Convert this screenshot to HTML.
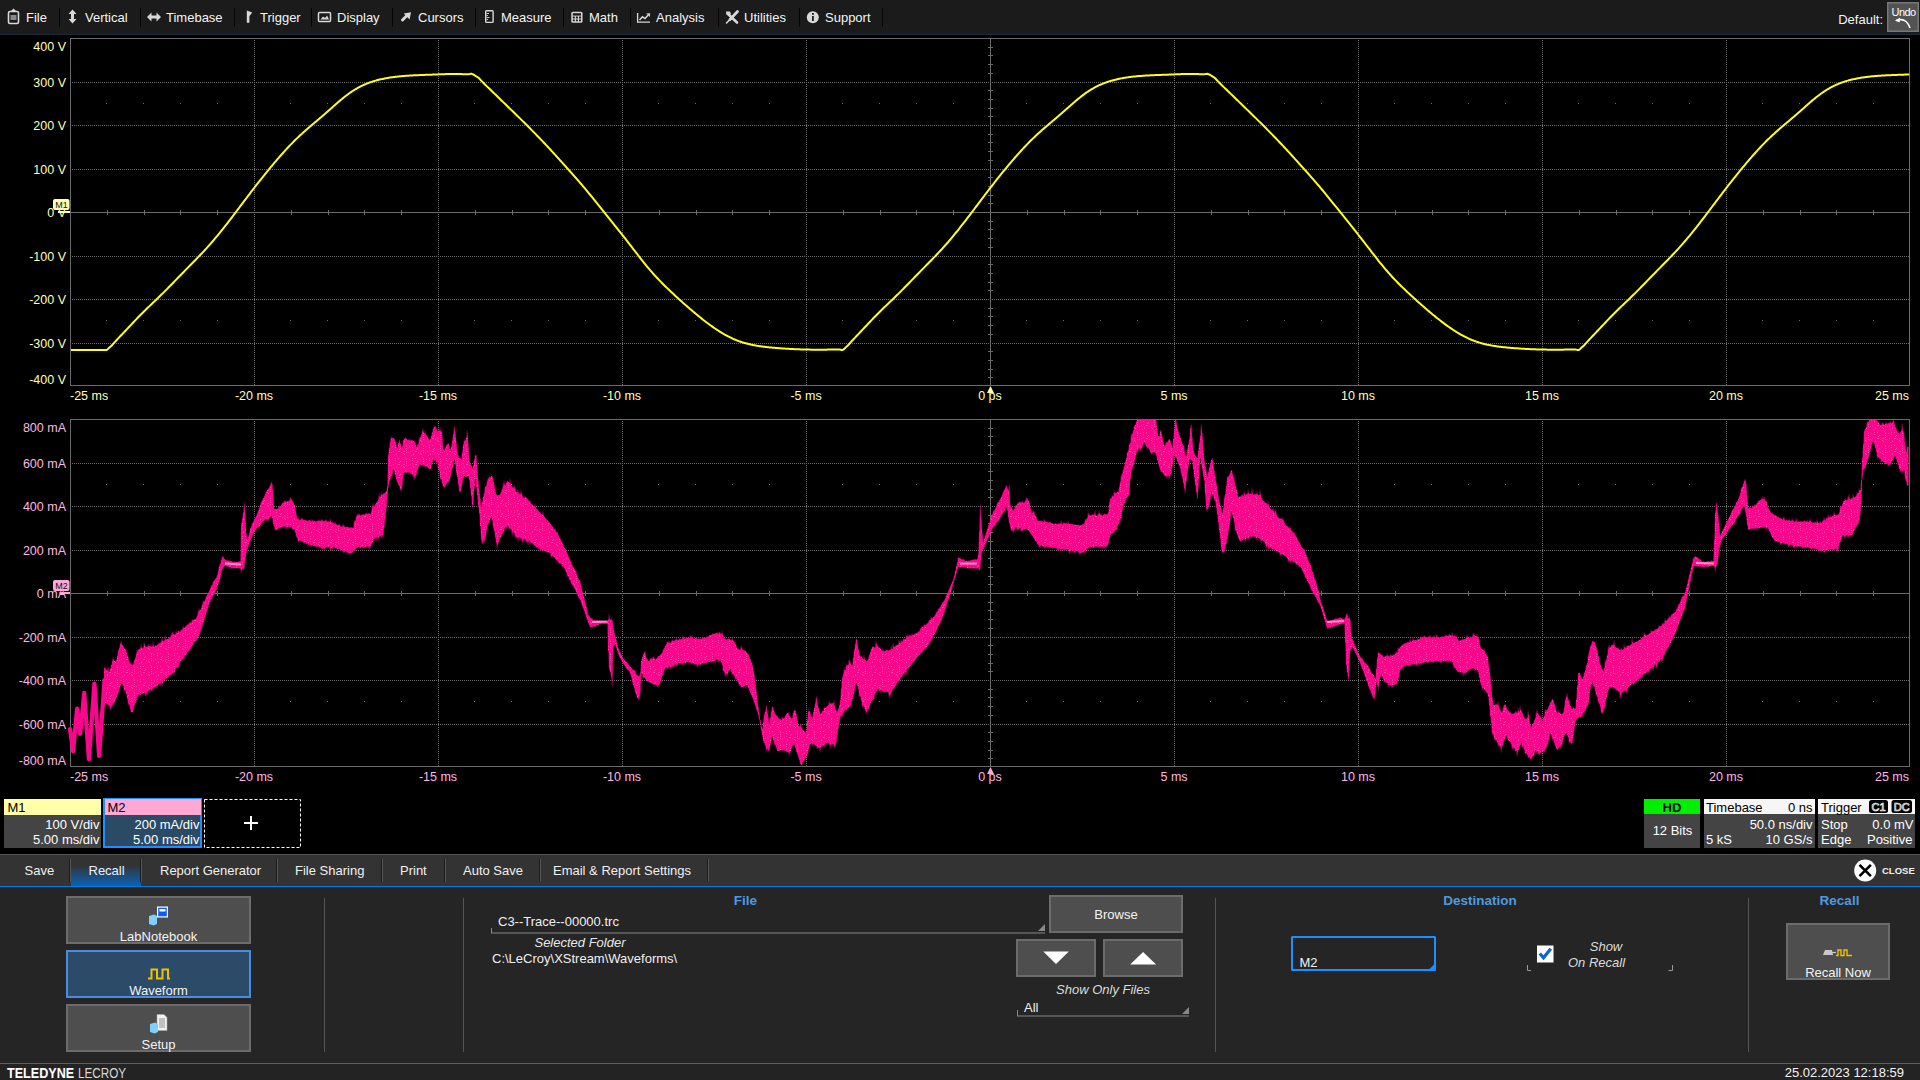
<!DOCTYPE html>
<html><head><meta charset="utf-8">
<style>
*{margin:0;padding:0;box-sizing:border-box}
html,body{width:1920px;height:1080px;overflow:hidden;background:#000;font-family:"Liberation Sans", sans-serif;}
</style></head><body>
<svg width="1920" height="1080" viewBox="0 0 1920 1080" style="position:absolute;left:0;top:0" font-family='"Liberation Sans", sans-serif' font-size="12.5px">
<defs>
<linearGradient id="tabg" x1="0" y1="0" x2="0" y2="1">
<stop offset="0" stop-color="#333"/><stop offset="0.15" stop-color="#2a3d50"/><stop offset="1" stop-color="#0a62b8"/>
</linearGradient>
</defs>
<defs><pattern id="pinkpat" x="0" y="0" width="17" height="13" patternUnits="userSpaceOnUse"><rect width="17" height="13" fill="#f8068b"/><rect x="7" y="9" width="1" height="1" fill="#ff3ca2"/><rect x="4" y="5" width="1" height="1" fill="#ff3ca2"/><rect x="15" y="10" width="1" height="1" fill="#ff3ca2"/><rect x="2" y="9" width="1" height="1" fill="#ff2898"/><rect x="15" y="4" width="1" height="1" fill="#ff3ca2"/><rect x="7" y="3" width="1" height="1" fill="#ff3ca2"/><rect x="15" y="8" width="1" height="1" fill="#ff3ca2"/><rect x="15" y="6" width="1" height="1" fill="#ff3ca2"/><rect x="4" y="3" width="1" height="1" fill="#ff3ca2"/><rect x="4" y="8" width="1" height="1" fill="#ff1f94"/><rect x="0" y="10" width="1" height="1" fill="#ff2898"/><rect x="5" y="12" width="1" height="1" fill="#ff3ca2"/><rect x="1" y="4" width="1" height="1" fill="#ff2898"/><rect x="8" y="7" width="1" height="1" fill="#ff3ca2"/><rect x="12" y="11" width="1" height="1" fill="#ff1f94"/><rect x="12" y="11" width="1" height="1" fill="#ff3ca2"/><rect x="14" y="2" width="1" height="1" fill="#ff1f94"/><rect x="3" y="0" width="1" height="1" fill="#ff2898"/><rect x="15" y="3" width="1" height="1" fill="#ff1f94"/><rect x="13" y="12" width="1" height="1" fill="#ff3ca2"/><rect x="9" y="6" width="1" height="1" fill="#ff3ca2"/><rect x="12" y="9" width="1" height="1" fill="#ff1f94"/><rect x="13" y="9" width="1" height="1" fill="#ff2898"/><rect x="10" y="10" width="1" height="1" fill="#ff2898"/><rect x="8" y="9" width="1" height="1" fill="#ff3ca2"/><rect x="5" y="11" width="1" height="1" fill="#ff1f94"/></pattern></defs>
<rect x="0" y="0" width="1920" height="34" fill="#1b1b1b"/>
<rect x="0" y="34" width="1920" height="1" fill="#1c2a38"/>
<text x="26" y="22" font-size="13" fill="#f4f4f4">File</text>
<text x="85" y="22" font-size="13" fill="#f4f4f4">Vertical</text>
<text x="166" y="22" font-size="13" fill="#f4f4f4">Timebase</text>
<text x="260" y="22" font-size="13" fill="#f4f4f4">Trigger</text>
<text x="337" y="22" font-size="13" fill="#f4f4f4">Display</text>
<text x="418" y="22" font-size="13" fill="#f4f4f4">Cursors</text>
<text x="501" y="22" font-size="13" fill="#f4f4f4">Measure</text>
<text x="589" y="22" font-size="13" fill="#f4f4f4">Math</text>
<text x="656" y="22" font-size="13" fill="#f4f4f4">Analysis</text>
<text x="744" y="22" font-size="13" fill="#f4f4f4">Utilities</text>
<text x="825" y="22" font-size="13" fill="#f4f4f4">Support</text>
<rect x="59" y="8" width="1" height="19" fill="#050505"/>
<rect x="140" y="8" width="1" height="19" fill="#050505"/>
<rect x="234" y="8" width="1" height="19" fill="#050505"/>
<rect x="311" y="8" width="1" height="19" fill="#050505"/>
<rect x="392" y="8" width="1" height="19" fill="#050505"/>
<rect x="475" y="8" width="1" height="19" fill="#050505"/>
<rect x="563" y="8" width="1" height="19" fill="#050505"/>
<rect x="630" y="8" width="1" height="19" fill="#050505"/>
<rect x="718" y="8" width="1" height="19" fill="#050505"/>
<rect x="799" y="8" width="1" height="19" fill="#050505"/>
<rect x="882" y="8" width="1" height="19" fill="#050505"/>
<rect x="8.5" y="11.5" width="10" height="12" rx="1.5" fill="none" stroke="#d8d8d8" stroke-width="1.6"/>
<rect x="10.5" y="15" width="6" height="5" fill="#888"/>
<path d="M11 11 L13.5 8.5 L16 11Z" fill="#d8d8d8"/>
<path d="M72.5 9.5 L76.5 14 L74 14 L74 19 L76.5 19 L72.5 23.5 L68.5 19 L71 19 L71 14 L68.5 14Z" fill="#d8d8d8"/>
<path d="M147 17 L151.5 12.5 L151.5 15.5 L156.5 15.5 L156.5 12.5 L161 17 L156.5 21.5 L156.5 18.5 L151.5 18.5 L151.5 21.5Z" fill="#d8d8d8"/>
<path d="M246.8 10.5 L252.2 12.5 L249.4 16.2 L249.4 22.8 L246.8 22.8Z" fill="#d8d8d8"/>
<rect x="318.5" y="12.5" width="12" height="9" rx="1" fill="none" stroke="#d8d8d8" stroke-width="1.5"/>
<path d="M320.5 19.5 L323 16.5 L325 18 L327 15.5 L329 19.5Z" fill="#d8d8d8"/>
<path d="M402.5 20 L406.5 16" stroke="#d8d8d8" stroke-width="3" stroke-linecap="round"/><path d="M403.8 13.6 L411 12.2 L409.6 19.4Z" fill="#d8d8d8"/>
<rect x="485.7" y="10.8" width="7.4" height="11.6" rx="0.8" fill="none" stroke="#d8d8d8" stroke-width="1.4"/>
<path d="M486.5 13.5h2.5M486.5 15.5h1.5M486.5 17.5h3M486.5 19.5h1.5" stroke="#d8d8d8" stroke-width="0.9"/>
<rect x="571.3" y="11.8" width="11.2" height="11" rx="1.5" fill="#d8d8d8"/>
<rect x="572.8" y="13.2" width="8.2" height="2.4" fill="#1b1b1b"/>
<path d="M572.8 16.6h2v1.8h-2zM575.9 16.6h2v1.8h-2zM579 16.6h2v1.8h-2zM572.8 19.4h2v1.8h-2zM575.9 19.4h2v1.8h-2zM579 19.4h2v1.8h-2z" fill="#1b1b1b"/>
<path d="M637.6 13 V22.2 H650" fill="none" stroke="#d8d8d8" stroke-width="1.3"/>
<path d="M639.5 20 L642.5 16.8 L645 18.5 L648 15.2" fill="none" stroke="#d8d8d8" stroke-width="1.5"/><path d="M646.2 13.6 L650.2 13.2 L649.8 17Z" fill="#d8d8d8"/>
<path d="M728 14 L737 22.5" stroke="#d8d8d8" stroke-width="2.6" stroke-linecap="round"/>
<path d="M726 11.5 L729.8 11.5 L731 13.8 L729 15.6 L726.3 14.5Z" fill="#d8d8d8"/>
<path d="M737.5 11.5 L730 19.5" stroke="#d8d8d8" stroke-width="2.8" stroke-linecap="round"/><path d="M731 18.5 L726.5 23" stroke="#d8d8d8" stroke-width="1.6" stroke-linecap="round"/>
<circle cx="812.8" cy="17.2" r="6" fill="#d8d8d8"/>
<rect x="812" y="16" width="1.8" height="5" fill="#1b1b1b"/><rect x="812" y="13" width="1.8" height="1.8" fill="#1b1b1b"/>
<text x="1883" y="24" font-size="13" text-anchor="end" fill="#f4f4f4">Default:</text>
<rect x="1887" y="2" width="32" height="30" fill="#777"/><rect x="1888.5" y="3.5" width="29" height="27" fill="#535353"/>
<text x="1903.5" y="16" font-size="11" text-anchor="middle" fill="#fff" letter-spacing="-0.6">Undo</text>
<path d="M1896.5 20.5 Q1906 17 1910 28" fill="none" stroke="#fff" stroke-width="1.6"/><path d="M1895 20.5 L1900 17.8 L1899.5 22.5Z" fill="#fff"/>
<line x1="72" y1="82.5" x2="1909" y2="82.5" stroke="#6e6e6e" stroke-width="1" stroke-dasharray="1 1"/>
<line x1="72" y1="125.5" x2="1909" y2="125.5" stroke="#6e6e6e" stroke-width="1" stroke-dasharray="1 1"/>
<line x1="72" y1="169.5" x2="1909" y2="169.5" stroke="#6e6e6e" stroke-width="1" stroke-dasharray="1 1"/>
<line x1="72" y1="256.5" x2="1909" y2="256.5" stroke="#6e6e6e" stroke-width="1" stroke-dasharray="1 1"/>
<line x1="72" y1="299.5" x2="1909" y2="299.5" stroke="#6e6e6e" stroke-width="1" stroke-dasharray="1 1"/>
<line x1="72" y1="343.5" x2="1909" y2="343.5" stroke="#6e6e6e" stroke-width="1" stroke-dasharray="1 1"/>
<line x1="254.5" y1="40" x2="254.5" y2="385" stroke="#6e6e6e" stroke-width="1" stroke-dasharray="1 1"/>
<line x1="438.5" y1="40" x2="438.5" y2="385" stroke="#6e6e6e" stroke-width="1" stroke-dasharray="1 1"/>
<line x1="622.5" y1="40" x2="622.5" y2="385" stroke="#6e6e6e" stroke-width="1" stroke-dasharray="1 1"/>
<line x1="806.5" y1="40" x2="806.5" y2="385" stroke="#6e6e6e" stroke-width="1" stroke-dasharray="1 1"/>
<line x1="1174.5" y1="40" x2="1174.5" y2="385" stroke="#6e6e6e" stroke-width="1" stroke-dasharray="1 1"/>
<line x1="1358.5" y1="40" x2="1358.5" y2="385" stroke="#6e6e6e" stroke-width="1" stroke-dasharray="1 1"/>
<line x1="1542.5" y1="40" x2="1542.5" y2="385" stroke="#6e6e6e" stroke-width="1" stroke-dasharray="1 1"/>
<line x1="1726.5" y1="40" x2="1726.5" y2="385" stroke="#6e6e6e" stroke-width="1" stroke-dasharray="1 1"/>
<path d="M106 103h1v1h-1zM143 103h1v1h-1zM180 103h1v1h-1zM217 103h1v1h-1zM290 103h1v1h-1zM327 103h1v1h-1zM364 103h1v1h-1zM401 103h1v1h-1zM474 103h1v1h-1zM511 103h1v1h-1zM548 103h1v1h-1zM585 103h1v1h-1zM658 103h1v1h-1zM695 103h1v1h-1zM732 103h1v1h-1zM769 103h1v1h-1zM842 103h1v1h-1zM879 103h1v1h-1zM916 103h1v1h-1zM953 103h1v1h-1zM1026 103h1v1h-1zM1063 103h1v1h-1zM1100 103h1v1h-1zM1137 103h1v1h-1zM1210 103h1v1h-1zM1247 103h1v1h-1zM1284 103h1v1h-1zM1321 103h1v1h-1zM1394 103h1v1h-1zM1431 103h1v1h-1zM1468 103h1v1h-1zM1505 103h1v1h-1zM1578 103h1v1h-1zM1615 103h1v1h-1zM1652 103h1v1h-1zM1689 103h1v1h-1zM1762 103h1v1h-1zM1799 103h1v1h-1zM1836 103h1v1h-1zM1873 103h1v1h-1z" fill="#6a6a6a"/>
<path d="M106 320h1v1h-1zM143 320h1v1h-1zM180 320h1v1h-1zM217 320h1v1h-1zM290 320h1v1h-1zM327 320h1v1h-1zM364 320h1v1h-1zM401 320h1v1h-1zM474 320h1v1h-1zM511 320h1v1h-1zM548 320h1v1h-1zM585 320h1v1h-1zM658 320h1v1h-1zM695 320h1v1h-1zM732 320h1v1h-1zM769 320h1v1h-1zM842 320h1v1h-1zM879 320h1v1h-1zM916 320h1v1h-1zM953 320h1v1h-1zM1026 320h1v1h-1zM1063 320h1v1h-1zM1100 320h1v1h-1zM1137 320h1v1h-1zM1210 320h1v1h-1zM1247 320h1v1h-1zM1284 320h1v1h-1zM1321 320h1v1h-1zM1394 320h1v1h-1zM1431 320h1v1h-1zM1468 320h1v1h-1zM1505 320h1v1h-1zM1578 320h1v1h-1zM1615 320h1v1h-1zM1652 320h1v1h-1zM1689 320h1v1h-1zM1762 320h1v1h-1zM1799 320h1v1h-1zM1836 320h1v1h-1zM1873 320h1v1h-1z" fill="#6a6a6a"/>
<rect x="71" y="212" width="1838" height="1" fill="#6a6a6a"/>
<rect x="990" y="39" width="1" height="346" fill="#6a6a6a"/>
<path d="M107 210h1v5h-1zM144 210h1v5h-1zM180 210h1v5h-1zM217 210h1v5h-1zM291 210h1v5h-1zM328 210h1v5h-1zM364 210h1v5h-1zM401 210h1v5h-1zM475 210h1v5h-1zM512 210h1v5h-1zM548 210h1v5h-1zM585 210h1v5h-1zM659 210h1v5h-1zM696 210h1v5h-1zM732 210h1v5h-1zM769 210h1v5h-1zM843 210h1v5h-1zM880 210h1v5h-1zM916 210h1v5h-1zM953 210h1v5h-1zM1027 210h1v5h-1zM1064 210h1v5h-1zM1100 210h1v5h-1zM1137 210h1v5h-1zM1211 210h1v5h-1zM1248 210h1v5h-1zM1284 210h1v5h-1zM1321 210h1v5h-1zM1395 210h1v5h-1zM1432 210h1v5h-1zM1468 210h1v5h-1zM1505 210h1v5h-1zM1579 210h1v5h-1zM1616 210h1v5h-1zM1652 210h1v5h-1zM1689 210h1v5h-1zM1763 210h1v5h-1zM1800 210h1v5h-1zM1836 210h1v5h-1zM1873 210h1v5h-1zM988 47h5v1h-5zM988 55h5v1h-5zM988 64h5v1h-5zM988 73h5v1h-5zM988 90h5v1h-5zM988 99h5v1h-5zM988 108h5v1h-5zM988 116h5v1h-5zM988 134h5v1h-5zM988 142h5v1h-5zM988 151h5v1h-5zM988 160h5v1h-5zM988 177h5v1h-5zM988 186h5v1h-5zM988 195h5v1h-5zM988 203h5v1h-5zM988 221h5v1h-5zM988 229h5v1h-5zM988 238h5v1h-5zM988 247h5v1h-5zM988 264h5v1h-5zM988 273h5v1h-5zM988 282h5v1h-5zM988 290h5v1h-5zM988 308h5v1h-5zM988 316h5v1h-5zM988 325h5v1h-5zM988 334h5v1h-5zM988 351h5v1h-5zM988 360h5v1h-5zM988 369h5v1h-5zM988 377h5v1h-5z" fill="#6a6a6a"/>
<rect x="70.5" y="38.5" width="1839" height="347" fill="none" stroke="#6a6a6a" stroke-width="1"/>
<line x1="72" y1="463.5" x2="1909" y2="463.5" stroke="#6e6e6e" stroke-width="1" stroke-dasharray="1 1"/>
<line x1="72" y1="506.5" x2="1909" y2="506.5" stroke="#6e6e6e" stroke-width="1" stroke-dasharray="1 1"/>
<line x1="72" y1="550.5" x2="1909" y2="550.5" stroke="#6e6e6e" stroke-width="1" stroke-dasharray="1 1"/>
<line x1="72" y1="637.5" x2="1909" y2="637.5" stroke="#6e6e6e" stroke-width="1" stroke-dasharray="1 1"/>
<line x1="72" y1="680.5" x2="1909" y2="680.5" stroke="#6e6e6e" stroke-width="1" stroke-dasharray="1 1"/>
<line x1="72" y1="724.5" x2="1909" y2="724.5" stroke="#6e6e6e" stroke-width="1" stroke-dasharray="1 1"/>
<line x1="254.5" y1="421" x2="254.5" y2="766" stroke="#6e6e6e" stroke-width="1" stroke-dasharray="1 1"/>
<line x1="438.5" y1="421" x2="438.5" y2="766" stroke="#6e6e6e" stroke-width="1" stroke-dasharray="1 1"/>
<line x1="622.5" y1="421" x2="622.5" y2="766" stroke="#6e6e6e" stroke-width="1" stroke-dasharray="1 1"/>
<line x1="806.5" y1="421" x2="806.5" y2="766" stroke="#6e6e6e" stroke-width="1" stroke-dasharray="1 1"/>
<line x1="1174.5" y1="421" x2="1174.5" y2="766" stroke="#6e6e6e" stroke-width="1" stroke-dasharray="1 1"/>
<line x1="1358.5" y1="421" x2="1358.5" y2="766" stroke="#6e6e6e" stroke-width="1" stroke-dasharray="1 1"/>
<line x1="1542.5" y1="421" x2="1542.5" y2="766" stroke="#6e6e6e" stroke-width="1" stroke-dasharray="1 1"/>
<line x1="1726.5" y1="421" x2="1726.5" y2="766" stroke="#6e6e6e" stroke-width="1" stroke-dasharray="1 1"/>
<path d="M106 484h1v1h-1zM143 484h1v1h-1zM180 484h1v1h-1zM217 484h1v1h-1zM290 484h1v1h-1zM327 484h1v1h-1zM364 484h1v1h-1zM401 484h1v1h-1zM474 484h1v1h-1zM511 484h1v1h-1zM548 484h1v1h-1zM585 484h1v1h-1zM658 484h1v1h-1zM695 484h1v1h-1zM732 484h1v1h-1zM769 484h1v1h-1zM842 484h1v1h-1zM879 484h1v1h-1zM916 484h1v1h-1zM953 484h1v1h-1zM1026 484h1v1h-1zM1063 484h1v1h-1zM1100 484h1v1h-1zM1137 484h1v1h-1zM1210 484h1v1h-1zM1247 484h1v1h-1zM1284 484h1v1h-1zM1321 484h1v1h-1zM1394 484h1v1h-1zM1431 484h1v1h-1zM1468 484h1v1h-1zM1505 484h1v1h-1zM1578 484h1v1h-1zM1615 484h1v1h-1zM1652 484h1v1h-1zM1689 484h1v1h-1zM1762 484h1v1h-1zM1799 484h1v1h-1zM1836 484h1v1h-1zM1873 484h1v1h-1z" fill="#6a6a6a"/>
<path d="M106 701h1v1h-1zM143 701h1v1h-1zM180 701h1v1h-1zM217 701h1v1h-1zM290 701h1v1h-1zM327 701h1v1h-1zM364 701h1v1h-1zM401 701h1v1h-1zM474 701h1v1h-1zM511 701h1v1h-1zM548 701h1v1h-1zM585 701h1v1h-1zM658 701h1v1h-1zM695 701h1v1h-1zM732 701h1v1h-1zM769 701h1v1h-1zM842 701h1v1h-1zM879 701h1v1h-1zM916 701h1v1h-1zM953 701h1v1h-1zM1026 701h1v1h-1zM1063 701h1v1h-1zM1100 701h1v1h-1zM1137 701h1v1h-1zM1210 701h1v1h-1zM1247 701h1v1h-1zM1284 701h1v1h-1zM1321 701h1v1h-1zM1394 701h1v1h-1zM1431 701h1v1h-1zM1468 701h1v1h-1zM1505 701h1v1h-1zM1578 701h1v1h-1zM1615 701h1v1h-1zM1652 701h1v1h-1zM1689 701h1v1h-1zM1762 701h1v1h-1zM1799 701h1v1h-1zM1836 701h1v1h-1zM1873 701h1v1h-1z" fill="#6a6a6a"/>
<rect x="71" y="593" width="1838" height="1" fill="#6a6a6a"/>
<rect x="990" y="420" width="1" height="346" fill="#6a6a6a"/>
<path d="M107 591h1v5h-1zM144 591h1v5h-1zM180 591h1v5h-1zM217 591h1v5h-1zM291 591h1v5h-1zM328 591h1v5h-1zM364 591h1v5h-1zM401 591h1v5h-1zM475 591h1v5h-1zM512 591h1v5h-1zM548 591h1v5h-1zM585 591h1v5h-1zM659 591h1v5h-1zM696 591h1v5h-1zM732 591h1v5h-1zM769 591h1v5h-1zM843 591h1v5h-1zM880 591h1v5h-1zM916 591h1v5h-1zM953 591h1v5h-1zM1027 591h1v5h-1zM1064 591h1v5h-1zM1100 591h1v5h-1zM1137 591h1v5h-1zM1211 591h1v5h-1zM1248 591h1v5h-1zM1284 591h1v5h-1zM1321 591h1v5h-1zM1395 591h1v5h-1zM1432 591h1v5h-1zM1468 591h1v5h-1zM1505 591h1v5h-1zM1579 591h1v5h-1zM1616 591h1v5h-1zM1652 591h1v5h-1zM1689 591h1v5h-1zM1763 591h1v5h-1zM1800 591h1v5h-1zM1836 591h1v5h-1zM1873 591h1v5h-1zM988 428h5v1h-5zM988 436h5v1h-5zM988 445h5v1h-5zM988 454h5v1h-5zM988 471h5v1h-5zM988 480h5v1h-5zM988 489h5v1h-5zM988 497h5v1h-5zM988 515h5v1h-5zM988 523h5v1h-5zM988 532h5v1h-5zM988 541h5v1h-5zM988 558h5v1h-5zM988 567h5v1h-5zM988 576h5v1h-5zM988 584h5v1h-5zM988 602h5v1h-5zM988 610h5v1h-5zM988 619h5v1h-5zM988 628h5v1h-5zM988 645h5v1h-5zM988 654h5v1h-5zM988 663h5v1h-5zM988 671h5v1h-5zM988 689h5v1h-5zM988 697h5v1h-5zM988 706h5v1h-5zM988 715h5v1h-5zM988 732h5v1h-5zM988 741h5v1h-5zM988 750h5v1h-5zM988 758h5v1h-5z" fill="#6a6a6a"/>
<rect x="70.5" y="419.5" width="1839" height="347" fill="none" stroke="#6a6a6a" stroke-width="1"/>
<path d="M71.0 350.00 L106.7 350.00 L107.7 349.29 L108.7 348.32 L109.7 347.33 L110.7 346.40 L111.7 345.50 L112.7 344.46 L113.7 343.30 L114.7 342.18 L115.7 341.08 L116.7 339.99 L117.7 338.92 L118.7 337.85 L119.7 336.79 L120.7 335.73 L121.7 334.69 L122.7 333.63 L123.7 332.58 L124.7 331.52 L125.7 330.46 L126.7 329.40 L127.7 328.34 L128.7 327.28 L129.7 326.22 L130.7 325.15 L131.7 324.09 L132.7 323.03 L133.7 321.97 L134.7 320.92 L135.7 319.87 L136.7 318.82 L137.7 317.78 L138.7 316.75 L139.7 315.73 L140.7 314.71 L141.7 313.71 L142.7 312.71 L143.7 311.71 L144.7 310.73 L145.7 309.75 L146.7 308.78 L147.7 307.81 L148.7 306.85 L149.7 305.89 L150.7 304.93 L151.7 303.98 L152.7 303.02 L153.7 302.07 L154.7 301.11 L155.7 300.16 L156.7 299.20 L157.7 298.23 L158.7 297.26 L159.7 296.29 L160.7 295.31 L161.7 294.33 L162.7 293.34 L163.7 292.35 L164.7 291.35 L165.7 290.35 L166.7 289.34 L167.7 288.33 L168.7 287.31 L169.7 286.29 L170.7 285.27 L171.7 284.24 L172.7 283.21 L173.7 282.19 L174.7 281.16 L175.7 280.13 L176.7 279.10 L177.7 278.07 L178.7 277.05 L179.7 276.02 L180.7 275.00 L181.7 273.97 L182.7 272.95 L183.7 271.93 L184.7 270.91 L185.7 269.89 L186.7 268.87 L187.7 267.86 L188.7 266.84 L189.7 265.82 L190.7 264.81 L191.7 263.79 L192.7 262.77 L193.7 261.75 L194.7 260.73 L195.7 259.70 L196.7 258.67 L197.7 257.64 L198.7 256.60 L199.7 255.56 L200.7 254.51 L201.7 253.45 L202.7 252.39 L203.7 251.32 L204.7 250.24 L205.7 249.15 L206.7 248.06 L207.7 246.95 L208.7 245.83 L209.7 244.70 L210.7 243.57 L211.7 242.42 L212.7 241.26 L213.7 240.09 L214.7 238.91 L215.7 237.72 L216.7 236.52 L217.7 235.31 L218.7 234.09 L219.7 232.87 L220.7 231.63 L221.7 230.38 L222.7 229.13 L223.7 227.87 L224.7 226.61 L225.7 225.33 L226.7 224.05 L227.7 222.77 L228.7 221.48 L229.7 220.18 L230.7 218.88 L231.7 217.57 L232.7 216.27 L233.7 214.95 L234.7 213.64 L235.7 212.32 L236.7 211.00 L237.7 209.67 L238.7 208.35 L239.7 207.02 L240.7 205.69 L241.7 204.37 L242.7 203.04 L243.7 201.71 L244.7 200.38 L245.7 199.06 L246.7 197.74 L247.7 196.41 L248.7 195.10 L249.7 193.78 L250.7 192.47 L251.7 191.16 L252.7 189.85 L253.7 188.55 L254.7 187.25 L255.7 185.96 L256.7 184.67 L257.7 183.39 L258.7 182.11 L259.7 180.84 L260.7 179.57 L261.7 178.31 L262.7 177.06 L263.7 175.81 L264.7 174.56 L265.7 173.32 L266.7 172.09 L267.7 170.86 L268.7 169.64 L269.7 168.43 L270.7 167.22 L271.7 166.02 L272.7 164.82 L273.7 163.63 L274.7 162.45 L275.7 161.28 L276.7 160.11 L277.7 158.95 L278.7 157.79 L279.7 156.65 L280.7 155.51 L281.7 154.38 L282.7 153.26 L283.7 152.15 L284.7 151.05 L285.7 149.95 L286.7 148.87 L287.7 147.79 L288.7 146.73 L289.7 145.68 L290.7 144.63 L291.7 143.60 L292.7 142.58 L293.7 141.57 L294.7 140.57 L295.7 139.58 L296.7 138.61 L297.7 137.64 L298.7 136.69 L299.7 135.74 L300.7 134.81 L301.7 133.89 L302.7 132.98 L303.7 132.07 L304.7 131.18 L305.7 130.30 L306.7 129.42 L307.7 128.55 L308.7 127.69 L309.7 126.83 L310.7 125.97 L311.7 125.13 L312.7 124.28 L313.7 123.43 L314.7 122.59 L315.7 121.75 L316.7 120.90 L317.7 120.06 L318.7 119.21 L319.7 118.36 L320.7 117.51 L321.7 116.65 L322.7 115.79 L323.7 114.92 L324.7 114.05 L325.7 113.18 L326.7 112.30 L327.7 111.42 L328.7 110.54 L329.7 109.65 L330.7 108.77 L331.7 107.88 L332.7 106.99 L333.7 106.10 L334.7 105.22 L335.7 104.34 L336.7 103.46 L337.7 102.59 L338.7 101.73 L339.7 100.87 L340.7 100.03 L341.7 99.19 L342.7 98.37 L343.7 97.56 L344.7 96.76 L345.7 95.98 L346.7 95.22 L347.7 94.47 L348.7 93.74 L349.7 93.02 L350.7 92.33 L351.7 91.65 L352.7 90.99 L353.7 90.35 L354.7 89.73 L355.7 89.13 L356.7 88.54 L357.7 87.98 L358.7 87.43 L359.7 86.90 L360.7 86.39 L361.7 85.89 L362.7 85.42 L363.7 84.96 L364.7 84.51 L365.7 84.08 L366.7 83.67 L367.7 83.28 L368.7 82.89 L369.7 82.53 L370.7 82.18 L371.7 81.84 L372.7 81.51 L373.7 81.20 L374.7 80.90 L375.7 80.61 L376.7 80.34 L377.7 80.07 L378.7 79.82 L379.7 79.57 L380.7 79.34 L381.7 79.11 L382.7 78.90 L383.7 78.69 L384.7 78.49 L385.7 78.30 L386.7 78.12 L387.7 77.94 L388.7 77.77 L389.7 77.61 L390.7 77.46 L391.7 77.31 L392.7 77.17 L393.7 77.04 L394.7 76.91 L395.7 76.79 L396.7 76.67 L397.7 76.56 L398.7 76.45 L399.7 76.35 L400.7 76.25 L401.7 76.16 L402.7 76.08 L403.7 75.99 L404.7 75.91 L405.7 75.84 L406.7 75.77 L407.7 75.70 L408.7 75.64 L409.7 75.58 L410.7 75.52 L411.7 75.46 L412.7 75.41 L413.7 75.36 L414.7 75.31 L415.7 75.26 L416.7 75.22 L417.7 75.18 L418.7 75.14 L419.7 75.10 L420.7 75.06 L421.7 75.02 L422.7 74.98 L423.7 74.94 L424.7 74.91 L425.7 74.87 L426.7 74.83 L427.7 74.80 L428.7 74.76 L429.7 74.72 L430.7 74.69 L431.7 74.65 L432.7 74.61 L433.7 74.57 L434.7 74.53 L435.7 74.49 L436.7 74.45 L437.7 74.41 L438.7 74.37 L439.7 74.33 L440.7 74.29 L441.7 74.25 L442.7 74.21 L443.7 74.17 L444.7 74.14 L445.7 74.11 L446.7 74.08 L447.7 74.05 L448.7 74.03 L449.7 74.00 L450.7 73.98 L451.7 73.96 L452.7 73.96 L453.7 73.95 L454.7 73.95 L455.7 73.96 L456.7 73.98 L457.7 73.99 L458.7 74.02 L459.7 74.04 L460.7 74.08 L461.7 74.11 L462.7 74.14 L463.7 74.17 L464.7 74.20 L465.7 74.21 L466.7 74.21 L467.7 74.20 L468.7 74.15 L469.7 74.05 L470.7 73.85 L471.7 73.87 L472.7 74.26 L473.7 74.65 L474.7 75.34 L475.7 75.98 L476.7 76.61 L477.7 77.24 L478.7 77.89 L479.7 78.94 L480.7 80.05 L481.7 81.13 L482.7 82.18 L483.7 83.21 L484.7 84.20 L485.7 85.17 L486.7 86.14 L487.7 87.11 L488.7 88.08 L489.7 89.05 L490.7 90.01 L491.7 90.98 L492.7 91.94 L493.7 92.91 L494.7 93.87 L495.7 94.83 L496.7 95.80 L497.7 96.77 L498.7 97.74 L499.7 98.71 L500.7 99.69 L501.7 100.66 L502.7 101.63 L503.7 102.60 L504.7 103.57 L505.7 104.54 L506.7 105.51 L507.7 106.48 L508.7 107.44 L509.7 108.41 L510.7 109.38 L511.7 110.35 L512.7 111.31 L513.7 112.28 L514.7 113.25 L515.7 114.23 L516.7 115.20 L517.7 116.18 L518.7 117.16 L519.7 118.14 L520.7 119.12 L521.7 120.11 L522.7 121.09 L523.7 122.08 L524.7 123.07 L525.7 124.07 L526.7 125.07 L527.7 126.06 L528.7 127.07 L529.7 128.07 L530.7 129.08 L531.7 130.09 L532.7 131.10 L533.7 132.11 L534.7 133.13 L535.7 134.15 L536.7 135.18 L537.7 136.21 L538.7 137.24 L539.7 138.28 L540.7 139.32 L541.7 140.37 L542.7 141.41 L543.7 142.47 L544.7 143.53 L545.7 144.59 L546.7 145.66 L547.7 146.73 L548.7 147.81 L549.7 148.89 L550.7 149.97 L551.7 151.06 L552.7 152.15 L553.7 153.24 L554.7 154.34 L555.7 155.43 L556.7 156.54 L557.7 157.64 L558.7 158.74 L559.7 159.85 L560.7 160.96 L561.7 162.07 L562.7 163.18 L563.7 164.29 L564.7 165.40 L565.7 166.51 L566.7 167.63 L567.7 168.74 L568.7 169.86 L569.7 170.98 L570.7 172.10 L571.7 173.22 L572.7 174.35 L573.7 175.48 L574.7 176.61 L575.7 177.75 L576.7 178.89 L577.7 180.03 L578.7 181.19 L579.7 182.34 L580.7 183.51 L581.7 184.67 L582.7 185.85 L583.7 187.03 L584.7 188.22 L585.7 189.41 L586.7 190.61 L587.7 191.82 L588.7 193.03 L589.7 194.25 L590.7 195.47 L591.7 196.70 L592.7 197.93 L593.7 199.16 L594.7 200.40 L595.7 201.64 L596.7 202.88 L597.7 204.13 L598.7 205.37 L599.7 206.62 L600.7 207.87 L601.7 209.11 L602.7 210.36 L603.7 211.61 L604.7 212.85 L605.7 214.10 L606.7 215.34 L607.7 216.59 L608.7 217.83 L609.7 219.07 L610.7 220.32 L611.7 221.56 L612.7 222.81 L613.7 224.06 L614.7 225.31 L615.7 226.56 L616.7 227.81 L617.7 229.07 L618.7 230.32 L619.7 231.59 L620.7 232.85 L621.7 234.12 L622.7 235.39 L623.7 236.66 L624.7 237.94 L625.7 239.23 L626.7 240.51 L627.7 241.80 L628.7 243.09 L629.7 244.39 L630.7 245.69 L631.7 246.98 L632.7 248.28 L633.7 249.58 L634.7 250.88 L635.7 252.18 L636.7 253.47 L637.7 254.76 L638.7 256.05 L639.7 257.33 L640.7 258.61 L641.7 259.88 L642.7 261.14 L643.7 262.39 L644.7 263.63 L645.7 264.86 L646.7 266.07 L647.7 267.28 L648.7 268.47 L649.7 269.64 L650.7 270.81 L651.7 271.96 L652.7 273.09 L653.7 274.21 L654.7 275.31 L655.7 276.41 L656.7 277.48 L657.7 278.55 L658.7 279.60 L659.7 280.64 L660.7 281.67 L661.7 282.69 L662.7 283.70 L663.7 284.69 L664.7 285.68 L665.7 286.67 L666.7 287.64 L667.7 288.61 L668.7 289.57 L669.7 290.52 L670.7 291.47 L671.7 292.42 L672.7 293.35 L673.7 294.29 L674.7 295.22 L675.7 296.14 L676.7 297.06 L677.7 297.98 L678.7 298.89 L679.7 299.80 L680.7 300.70 L681.7 301.60 L682.7 302.49 L683.7 303.39 L684.7 304.27 L685.7 305.15 L686.7 306.03 L687.7 306.91 L688.7 307.78 L689.7 308.64 L690.7 309.50 L691.7 310.36 L692.7 311.21 L693.7 312.05 L694.7 312.89 L695.7 313.73 L696.7 314.56 L697.7 315.38 L698.7 316.20 L699.7 317.01 L700.7 317.82 L701.7 318.62 L702.7 319.41 L703.7 320.19 L704.7 320.97 L705.7 321.74 L706.7 322.50 L707.7 323.25 L708.7 324.00 L709.7 324.73 L710.7 325.46 L711.7 326.18 L712.7 326.89 L713.7 327.59 L714.7 328.28 L715.7 328.96 L716.7 329.63 L717.7 330.28 L718.7 330.93 L719.7 331.57 L720.7 332.19 L721.7 332.80 L722.7 333.40 L723.7 333.99 L724.7 334.56 L725.7 335.12 L726.7 335.67 L727.7 336.20 L728.7 336.72 L729.7 337.23 L730.7 337.72 L731.7 338.19 L732.7 338.65 L733.7 339.10 L734.7 339.53 L735.7 339.94 L736.7 340.34 L737.7 340.73 L738.7 341.10 L739.7 341.46 L740.7 341.80 L741.7 342.13 L742.7 342.45 L743.7 342.75 L744.7 343.04 L745.7 343.32 L746.7 343.58 L747.7 343.84 L748.7 344.08 L749.7 344.32 L750.7 344.54 L751.7 344.76 L752.7 344.96 L753.7 345.16 L754.7 345.35 L755.7 345.53 L756.7 345.70 L757.7 345.87 L758.7 346.03 L759.7 346.18 L760.7 346.33 L761.7 346.47 L762.7 346.60 L763.7 346.73 L764.7 346.86 L765.7 346.97 L766.7 347.09 L767.7 347.20 L768.7 347.31 L769.7 347.41 L770.7 347.51 L771.7 347.60 L772.7 347.69 L773.7 347.78 L774.7 347.87 L775.7 347.95 L776.7 348.03 L777.7 348.11 L778.7 348.19 L779.7 348.27 L780.7 348.34 L781.7 348.41 L782.7 348.48 L783.7 348.55 L784.7 348.61 L785.7 348.68 L786.7 348.74 L787.7 348.80 L788.7 348.86 L789.7 348.91 L790.7 348.97 L791.7 349.02 L792.7 349.07 L793.7 349.12 L794.7 349.17 L795.7 349.21 L796.7 349.25 L797.7 349.29 L798.7 349.33 L799.7 349.36 L800.7 349.39 L801.7 349.42 L802.7 349.45 L803.7 349.48 L804.7 349.51 L805.7 349.53 L806.7 349.55 L807.7 349.57 L808.7 349.59 L809.7 349.61 L810.7 349.63 L811.7 349.64 L812.7 349.66 L813.7 349.67 L814.7 349.68 L815.7 349.69 L816.7 349.70 L817.7 349.71 L818.7 349.71 L819.7 349.71 L820.7 349.71 L821.7 349.71 L822.7 349.70 L823.7 349.69 L824.7 349.68 L825.7 349.66 L826.7 349.64 L827.7 349.62 L828.7 349.59 L829.7 349.56 L830.7 349.52 L831.7 349.49 L832.7 349.45 L833.7 349.42 L834.7 349.40 L835.7 349.38 L836.7 349.38 L837.7 349.40 L838.7 349.45 L839.7 349.55 L840.7 349.74 L841.7 349.99 L842.7 350.00 L843.3 349.65 L844.3 348.94 L845.3 347.81 L846.3 346.86 L847.3 345.95 L848.3 345.06 L849.3 343.88 L850.3 342.74 L851.3 341.62 L852.3 340.53 L853.3 339.45 L854.3 338.38 L855.3 337.32 L856.3 336.26 L857.3 335.21 L858.3 334.16 L859.3 333.11 L860.3 332.05 L861.3 330.99 L862.3 329.93 L863.3 328.87 L864.3 327.81 L865.3 326.75 L866.3 325.69 L867.3 324.62 L868.3 323.56 L869.3 322.50 L870.3 321.44 L871.3 320.39 L872.3 319.34 L873.3 318.30 L874.3 317.27 L875.3 316.24 L876.3 315.22 L877.3 314.21 L878.3 313.21 L879.3 312.21 L880.3 311.22 L881.3 310.24 L882.3 309.26 L883.3 308.29 L884.3 307.33 L885.3 306.37 L886.3 305.41 L887.3 304.45 L888.3 303.50 L889.3 302.55 L890.3 301.59 L891.3 300.64 L892.3 299.68 L893.3 298.71 L894.3 297.75 L895.3 296.78 L896.3 295.80 L897.3 294.82 L898.3 293.84 L899.3 292.85 L900.3 291.85 L901.3 290.85 L902.3 289.84 L903.3 288.83 L904.3 287.82 L905.3 286.80 L906.3 285.78 L907.3 284.75 L908.3 283.73 L909.3 282.70 L910.3 281.67 L911.3 280.64 L912.3 279.62 L913.3 278.59 L914.3 277.56 L915.3 276.53 L916.3 275.51 L917.3 274.48 L918.3 273.46 L919.3 272.44 L920.3 271.42 L921.3 270.40 L922.3 269.38 L923.3 268.37 L924.3 267.35 L925.3 266.33 L926.3 265.32 L927.3 264.30 L928.3 263.28 L929.3 262.26 L930.3 261.24 L931.3 260.22 L932.3 259.19 L933.3 258.16 L934.3 257.12 L935.3 256.08 L936.3 255.04 L937.3 253.98 L938.3 252.92 L939.3 251.86 L940.3 250.78 L941.3 249.70 L942.3 248.61 L943.3 247.50 L944.3 246.39 L945.3 245.27 L946.3 244.14 L947.3 242.99 L948.3 241.84 L949.3 240.68 L950.3 239.50 L951.3 238.32 L952.3 237.12 L953.3 235.92 L954.3 234.70 L955.3 233.48 L956.3 232.25 L957.3 231.01 L958.3 229.76 L959.3 228.50 L960.3 227.24 L961.3 225.97 L962.3 224.69 L963.3 223.41 L964.3 222.12 L965.3 220.83 L966.3 219.53 L967.3 218.23 L968.3 216.92 L969.3 215.61 L970.3 214.29 L971.3 212.98 L972.3 211.66 L973.3 210.34 L974.3 209.01 L975.3 207.69 L976.3 206.36 L977.3 205.03 L978.3 203.70 L979.3 202.37 L980.3 201.05 L981.3 199.72 L982.3 198.40 L983.3 197.07 L984.3 195.75 L985.3 194.44 L986.3 193.12 L987.3 191.81 L988.3 190.50 L989.3 189.20 L990.3 187.90 L991.3 186.61 L992.3 185.32 L993.3 184.03 L994.3 182.75 L995.3 181.48 L996.3 180.21 L997.3 178.94 L998.3 177.68 L999.3 176.43 L1000.3 175.18 L1001.3 173.94 L1002.3 172.71 L1003.3 171.48 L1004.3 170.25 L1005.3 169.04 L1006.3 167.82 L1007.3 166.62 L1008.3 165.42 L1009.3 164.23 L1010.3 163.04 L1011.3 161.86 L1012.3 160.69 L1013.3 159.53 L1014.3 158.37 L1015.3 157.22 L1016.3 156.08 L1017.3 154.94 L1018.3 153.82 L1019.3 152.70 L1020.3 151.60 L1021.3 150.50 L1022.3 149.41 L1023.3 148.33 L1024.3 147.26 L1025.3 146.20 L1026.3 145.15 L1027.3 144.12 L1028.3 143.09 L1029.3 142.07 L1030.3 141.07 L1031.3 140.08 L1032.3 139.09 L1033.3 138.12 L1034.3 137.16 L1035.3 136.21 L1036.3 135.28 L1037.3 134.35 L1038.3 133.43 L1039.3 132.52 L1040.3 131.63 L1041.3 130.74 L1042.3 129.86 L1043.3 128.98 L1044.3 128.12 L1045.3 127.26 L1046.3 126.40 L1047.3 125.55 L1048.3 124.70 L1049.3 123.86 L1050.3 123.01 L1051.3 122.17 L1052.3 121.33 L1053.3 120.48 L1054.3 119.63 L1055.3 118.79 L1056.3 117.93 L1057.3 117.08 L1058.3 116.22 L1059.3 115.36 L1060.3 114.49 L1061.3 113.62 L1062.3 112.74 L1063.3 111.86 L1064.3 110.98 L1065.3 110.10 L1066.3 109.21 L1067.3 108.32 L1068.3 107.43 L1069.3 106.55 L1070.3 105.66 L1071.3 104.78 L1072.3 103.90 L1073.3 103.03 L1074.3 102.16 L1075.3 101.30 L1076.3 100.45 L1077.3 99.61 L1078.3 98.78 L1079.3 97.96 L1080.3 97.16 L1081.3 96.37 L1082.3 95.60 L1083.3 94.84 L1084.3 94.10 L1085.3 93.38 L1086.3 92.67 L1087.3 91.99 L1088.3 91.32 L1089.3 90.67 L1090.3 90.04 L1091.3 89.43 L1092.3 88.83 L1093.3 88.26 L1094.3 87.70 L1095.3 87.16 L1096.3 86.64 L1097.3 86.14 L1098.3 85.65 L1099.3 85.18 L1100.3 84.73 L1101.3 84.30 L1102.3 83.88 L1103.3 83.47 L1104.3 83.08 L1105.3 82.71 L1106.3 82.35 L1107.3 82.00 L1108.3 81.67 L1109.3 81.35 L1110.3 81.05 L1111.3 80.75 L1112.3 80.47 L1113.3 80.20 L1114.3 79.94 L1115.3 79.69 L1116.3 79.45 L1117.3 79.22 L1118.3 79.00 L1119.3 78.79 L1120.3 78.59 L1121.3 78.39 L1122.3 78.21 L1123.3 78.03 L1124.3 77.86 L1125.3 77.69 L1126.3 77.53 L1127.3 77.38 L1128.3 77.24 L1129.3 77.10 L1130.3 76.97 L1131.3 76.85 L1132.3 76.73 L1133.3 76.61 L1134.3 76.50 L1135.3 76.40 L1136.3 76.30 L1137.3 76.21 L1138.3 76.12 L1139.3 76.03 L1140.3 75.95 L1141.3 75.88 L1142.3 75.80 L1143.3 75.73 L1144.3 75.67 L1145.3 75.61 L1146.3 75.55 L1147.3 75.49 L1148.3 75.44 L1149.3 75.38 L1150.3 75.33 L1151.3 75.29 L1152.3 75.24 L1153.3 75.20 L1154.3 75.16 L1155.3 75.12 L1156.3 75.08 L1157.3 75.04 L1158.3 75.00 L1159.3 74.96 L1160.3 74.93 L1161.3 74.89 L1162.3 74.85 L1163.3 74.82 L1164.3 74.78 L1165.3 74.74 L1166.3 74.71 L1167.3 74.67 L1168.3 74.63 L1169.3 74.59 L1170.3 74.55 L1171.3 74.51 L1172.3 74.47 L1173.3 74.43 L1174.3 74.39 L1175.3 74.35 L1176.3 74.31 L1177.3 74.27 L1178.3 74.23 L1179.3 74.19 L1180.3 74.16 L1181.3 74.12 L1182.3 74.09 L1183.3 74.06 L1184.3 74.04 L1185.3 74.01 L1186.3 73.99 L1187.3 73.97 L1188.3 73.96 L1189.3 73.95 L1190.3 73.95 L1191.3 73.96 L1192.3 73.97 L1193.3 73.98 L1194.3 74.00 L1195.3 74.03 L1196.3 74.06 L1197.3 74.09 L1198.3 74.12 L1199.3 74.16 L1200.3 74.18 L1201.3 74.20 L1202.3 74.21 L1203.3 74.21 L1204.3 74.18 L1205.3 74.11 L1206.3 73.97 L1207.3 73.75 L1208.3 74.06 L1209.3 74.46 L1210.3 75.00 L1211.3 75.67 L1212.3 76.29 L1213.3 76.92 L1214.3 77.57 L1215.3 78.37 L1216.3 79.50 L1217.3 80.59 L1218.3 81.66 L1219.3 82.70 L1220.3 83.71 L1221.3 84.69 L1222.3 85.66 L1223.3 86.63 L1224.3 87.60 L1225.3 88.56 L1226.3 89.53 L1227.3 90.50 L1228.3 91.46 L1229.3 92.43 L1230.3 93.39 L1231.3 94.35 L1232.3 95.31 L1233.3 96.28 L1234.3 97.25 L1235.3 98.23 L1236.3 99.20 L1237.3 100.17 L1238.3 101.15 L1239.3 102.12 L1240.3 103.09 L1241.3 104.06 L1242.3 105.03 L1243.3 105.99 L1244.3 106.96 L1245.3 107.93 L1246.3 108.89 L1247.3 109.86 L1248.3 110.83 L1249.3 111.80 L1250.3 112.77 L1251.3 113.74 L1252.3 114.71 L1253.3 115.69 L1254.3 116.67 L1255.3 117.65 L1256.3 118.63 L1257.3 119.61 L1258.3 120.60 L1259.3 121.59 L1260.3 122.58 L1261.3 123.57 L1262.3 124.57 L1263.3 125.56 L1264.3 126.56 L1265.3 127.57 L1266.3 128.57 L1267.3 129.58 L1268.3 130.59 L1269.3 131.61 L1270.3 132.62 L1271.3 133.64 L1272.3 134.67 L1273.3 135.69 L1274.3 136.72 L1275.3 137.76 L1276.3 138.80 L1277.3 139.84 L1278.3 140.89 L1279.3 141.94 L1280.3 143.00 L1281.3 144.06 L1282.3 145.12 L1283.3 146.19 L1284.3 147.27 L1285.3 148.35 L1286.3 149.43 L1287.3 150.51 L1288.3 151.60 L1289.3 152.69 L1290.3 153.79 L1291.3 154.89 L1292.3 155.99 L1293.3 157.09 L1294.3 158.19 L1295.3 159.30 L1296.3 160.40 L1297.3 161.51 L1298.3 162.62 L1299.3 163.73 L1300.3 164.84 L1301.3 165.96 L1302.3 167.07 L1303.3 168.18 L1304.3 169.30 L1305.3 170.42 L1306.3 171.54 L1307.3 172.66 L1308.3 173.78 L1309.3 174.91 L1310.3 176.04 L1311.3 177.18 L1312.3 178.32 L1313.3 179.46 L1314.3 180.61 L1315.3 181.76 L1316.3 182.92 L1317.3 184.09 L1318.3 185.26 L1319.3 186.44 L1320.3 187.62 L1321.3 188.82 L1322.3 190.01 L1323.3 191.22 L1324.3 192.42 L1325.3 193.64 L1326.3 194.86 L1327.3 196.08 L1328.3 197.31 L1329.3 198.55 L1330.3 199.78 L1331.3 201.02 L1332.3 202.26 L1333.3 203.51 L1334.3 204.75 L1335.3 206.00 L1336.3 207.24 L1337.3 208.49 L1338.3 209.74 L1339.3 210.98 L1340.3 212.23 L1341.3 213.47 L1342.3 214.72 L1343.3 215.96 L1344.3 217.21 L1345.3 218.45 L1346.3 219.70 L1347.3 220.94 L1348.3 222.19 L1349.3 223.43 L1350.3 224.68 L1351.3 225.93 L1352.3 227.18 L1353.3 228.44 L1354.3 229.69 L1355.3 230.95 L1356.3 232.22 L1357.3 233.48 L1358.3 234.75 L1359.3 236.03 L1360.3 237.30 L1361.3 238.58 L1362.3 239.87 L1363.3 241.16 L1364.3 242.45 L1365.3 243.74 L1366.3 245.04 L1367.3 246.33 L1368.3 247.63 L1369.3 248.93 L1370.3 250.23 L1371.3 251.53 L1372.3 252.83 L1373.3 254.12 L1374.3 255.41 L1375.3 256.69 L1376.3 257.97 L1377.3 259.24 L1378.3 260.51 L1379.3 261.76 L1380.3 263.01 L1381.3 264.24 L1382.3 265.47 L1383.3 266.68 L1384.3 267.87 L1385.3 269.06 L1386.3 270.23 L1387.3 271.38 L1388.3 272.52 L1389.3 273.65 L1390.3 274.76 L1391.3 275.86 L1392.3 276.95 L1393.3 278.02 L1394.3 279.08 L1395.3 280.12 L1396.3 281.16 L1397.3 282.18 L1398.3 283.19 L1399.3 284.20 L1400.3 285.19 L1401.3 286.18 L1402.3 287.15 L1403.3 288.12 L1404.3 289.09 L1405.3 290.05 L1406.3 291.00 L1407.3 291.95 L1408.3 292.89 L1409.3 293.82 L1410.3 294.75 L1411.3 295.68 L1412.3 296.60 L1413.3 297.52 L1414.3 298.43 L1415.3 299.34 L1416.3 300.25 L1417.3 301.15 L1418.3 302.05 L1419.3 302.94 L1420.3 303.83 L1421.3 304.71 L1422.3 305.59 L1423.3 306.47 L1424.3 307.34 L1425.3 308.21 L1426.3 309.07 L1427.3 309.93 L1428.3 310.78 L1429.3 311.63 L1430.3 312.48 L1431.3 313.31 L1432.3 314.15 L1433.3 314.97 L1434.3 315.79 L1435.3 316.61 L1436.3 317.42 L1437.3 318.22 L1438.3 319.01 L1439.3 319.80 L1440.3 320.58 L1441.3 321.35 L1442.3 322.12 L1443.3 322.88 L1444.3 323.63 L1445.3 324.37 L1446.3 325.10 L1447.3 325.82 L1448.3 326.53 L1449.3 327.24 L1450.3 327.93 L1451.3 328.62 L1452.3 329.29 L1453.3 329.96 L1454.3 330.61 L1455.3 331.25 L1456.3 331.88 L1457.3 332.50 L1458.3 333.11 L1459.3 333.70 L1460.3 334.28 L1461.3 334.85 L1462.3 335.40 L1463.3 335.94 L1464.3 336.47 L1465.3 336.98 L1466.3 337.47 L1467.3 337.96 L1468.3 338.42 L1469.3 338.88 L1470.3 339.31 L1471.3 339.74 L1472.3 340.15 L1473.3 340.54 L1474.3 340.92 L1475.3 341.28 L1476.3 341.63 L1477.3 341.97 L1478.3 342.29 L1479.3 342.60 L1480.3 342.89 L1481.3 343.18 L1482.3 343.45 L1483.3 343.71 L1484.3 343.96 L1485.3 344.20 L1486.3 344.43 L1487.3 344.65 L1488.3 344.86 L1489.3 345.06 L1490.3 345.25 L1491.3 345.44 L1492.3 345.62 L1493.3 345.79 L1494.3 345.95 L1495.3 346.10 L1496.3 346.25 L1497.3 346.40 L1498.3 346.54 L1499.3 346.67 L1500.3 346.79 L1501.3 346.92 L1502.3 347.03 L1503.3 347.14 L1504.3 347.25 L1505.3 347.36 L1506.3 347.46 L1507.3 347.55 L1508.3 347.65 L1509.3 347.74 L1510.3 347.83 L1511.3 347.91 L1512.3 347.99 L1513.3 348.07 L1514.3 348.15 L1515.3 348.23 L1516.3 348.30 L1517.3 348.37 L1518.3 348.44 L1519.3 348.51 L1520.3 348.58 L1521.3 348.64 L1522.3 348.71 L1523.3 348.77 L1524.3 348.83 L1525.3 348.89 L1526.3 348.94 L1527.3 349.00 L1528.3 349.05 L1529.3 349.10 L1530.3 349.14 L1531.3 349.19 L1532.3 349.23 L1533.3 349.27 L1534.3 349.31 L1535.3 349.34 L1536.3 349.38 L1537.3 349.41 L1538.3 349.44 L1539.3 349.47 L1540.3 349.49 L1541.3 349.52 L1542.3 349.54 L1543.3 349.56 L1544.3 349.58 L1545.3 349.60 L1546.3 349.62 L1547.3 349.63 L1548.3 349.65 L1549.3 349.66 L1550.3 349.67 L1551.3 349.69 L1552.3 349.70 L1553.3 349.70 L1554.3 349.71 L1555.3 349.71 L1556.3 349.71 L1557.3 349.71 L1558.3 349.70 L1559.3 349.70 L1560.3 349.69 L1561.3 349.67 L1562.3 349.65 L1563.3 349.63 L1564.3 349.60 L1565.3 349.57 L1566.3 349.54 L1567.3 349.50 L1568.3 349.47 L1569.3 349.44 L1570.3 349.41 L1571.3 349.39 L1572.3 349.38 L1573.3 349.39 L1574.3 349.42 L1575.3 349.50 L1576.3 349.63 L1577.3 349.91 L1578.3 349.99 L1578.9 350.00 L1579.9 349.29 L1580.9 348.32 L1581.9 347.33 L1582.9 346.40 L1583.9 345.50 L1584.9 344.46 L1585.9 343.30 L1586.9 342.18 L1587.9 341.08 L1588.9 339.99 L1589.9 338.92 L1590.9 337.85 L1591.9 336.79 L1592.9 335.73 L1593.9 334.69 L1594.9 333.63 L1595.9 332.58 L1596.9 331.52 L1597.9 330.46 L1598.9 329.40 L1599.9 328.34 L1600.9 327.28 L1601.9 326.22 L1602.9 325.15 L1603.9 324.09 L1604.9 323.03 L1605.9 321.97 L1606.9 320.92 L1607.9 319.87 L1608.9 318.82 L1609.9 317.78 L1610.9 316.75 L1611.9 315.73 L1612.9 314.71 L1613.9 313.71 L1614.9 312.71 L1615.9 311.71 L1616.9 310.73 L1617.9 309.75 L1618.9 308.78 L1619.9 307.81 L1620.9 306.85 L1621.9 305.89 L1622.9 304.93 L1623.9 303.98 L1624.9 303.02 L1625.9 302.07 L1626.9 301.11 L1627.9 300.16 L1628.9 299.20 L1629.9 298.23 L1630.9 297.26 L1631.9 296.29 L1632.9 295.31 L1633.9 294.33 L1634.9 293.34 L1635.9 292.35 L1636.9 291.35 L1637.9 290.35 L1638.9 289.34 L1639.9 288.33 L1640.9 287.31 L1641.9 286.29 L1642.9 285.27 L1643.9 284.24 L1644.9 283.21 L1645.9 282.19 L1646.9 281.16 L1647.9 280.13 L1648.9 279.10 L1649.9 278.07 L1650.9 277.05 L1651.9 276.02 L1652.9 275.00 L1653.9 273.97 L1654.9 272.95 L1655.9 271.93 L1656.9 270.91 L1657.9 269.89 L1658.9 268.87 L1659.9 267.86 L1660.9 266.84 L1661.9 265.82 L1662.9 264.81 L1663.9 263.79 L1664.9 262.77 L1665.9 261.75 L1666.9 260.73 L1667.9 259.70 L1668.9 258.67 L1669.9 257.64 L1670.9 256.60 L1671.9 255.56 L1672.9 254.51 L1673.9 253.45 L1674.9 252.39 L1675.9 251.32 L1676.9 250.24 L1677.9 249.15 L1678.9 248.06 L1679.9 246.95 L1680.9 245.83 L1681.9 244.70 L1682.9 243.57 L1683.9 242.42 L1684.9 241.26 L1685.9 240.09 L1686.9 238.91 L1687.9 237.72 L1688.9 236.52 L1689.9 235.31 L1690.9 234.09 L1691.9 232.87 L1692.9 231.63 L1693.9 230.38 L1694.9 229.13 L1695.9 227.87 L1696.9 226.61 L1697.9 225.33 L1698.9 224.05 L1699.9 222.77 L1700.9 221.48 L1701.9 220.18 L1702.9 218.88 L1703.9 217.57 L1704.9 216.27 L1705.9 214.95 L1706.9 213.64 L1707.9 212.32 L1708.9 211.00 L1709.9 209.67 L1710.9 208.35 L1711.9 207.02 L1712.9 205.69 L1713.9 204.37 L1714.9 203.04 L1715.9 201.71 L1716.9 200.38 L1717.9 199.06 L1718.9 197.74 L1719.9 196.41 L1720.9 195.10 L1721.9 193.78 L1722.9 192.47 L1723.9 191.16 L1724.9 189.85 L1725.9 188.55 L1726.9 187.25 L1727.9 185.96 L1728.9 184.67 L1729.9 183.39 L1730.9 182.11 L1731.9 180.84 L1732.9 179.57 L1733.9 178.31 L1734.9 177.06 L1735.9 175.81 L1736.9 174.56 L1737.9 173.32 L1738.9 172.09 L1739.9 170.86 L1740.9 169.64 L1741.9 168.43 L1742.9 167.22 L1743.9 166.02 L1744.9 164.82 L1745.9 163.63 L1746.9 162.45 L1747.9 161.28 L1748.9 160.11 L1749.9 158.95 L1750.9 157.79 L1751.9 156.65 L1752.9 155.51 L1753.9 154.38 L1754.9 153.26 L1755.9 152.15 L1756.9 151.05 L1757.9 149.95 L1758.9 148.87 L1759.9 147.79 L1760.9 146.73 L1761.9 145.68 L1762.9 144.63 L1763.9 143.60 L1764.9 142.58 L1765.9 141.57 L1766.9 140.57 L1767.9 139.58 L1768.9 138.61 L1769.9 137.64 L1770.9 136.69 L1771.9 135.74 L1772.9 134.81 L1773.9 133.89 L1774.9 132.98 L1775.9 132.07 L1776.9 131.18 L1777.9 130.30 L1778.9 129.42 L1779.9 128.55 L1780.9 127.69 L1781.9 126.83 L1782.9 125.97 L1783.9 125.13 L1784.9 124.28 L1785.9 123.43 L1786.9 122.59 L1787.9 121.75 L1788.9 120.90 L1789.9 120.06 L1790.9 119.21 L1791.9 118.36 L1792.9 117.51 L1793.9 116.65 L1794.9 115.79 L1795.9 114.92 L1796.9 114.05 L1797.9 113.18 L1798.9 112.30 L1799.9 111.42 L1800.9 110.54 L1801.9 109.65 L1802.9 108.77 L1803.9 107.88 L1804.9 106.99 L1805.9 106.10 L1806.9 105.22 L1807.9 104.34 L1808.9 103.46 L1809.9 102.59 L1810.9 101.73 L1811.9 100.87 L1812.9 100.03 L1813.9 99.19 L1814.9 98.37 L1815.9 97.56 L1816.9 96.76 L1817.9 95.98 L1818.9 95.22 L1819.9 94.47 L1820.9 93.74 L1821.9 93.02 L1822.9 92.33 L1823.9 91.65 L1824.9 90.99 L1825.9 90.35 L1826.9 89.73 L1827.9 89.13 L1828.9 88.54 L1829.9 87.98 L1830.9 87.43 L1831.9 86.90 L1832.9 86.39 L1833.9 85.89 L1834.9 85.42 L1835.9 84.96 L1836.9 84.51 L1837.9 84.08 L1838.9 83.67 L1839.9 83.28 L1840.9 82.89 L1841.9 82.53 L1842.9 82.18 L1843.9 81.84 L1844.9 81.51 L1845.9 81.20 L1846.9 80.90 L1847.9 80.61 L1848.9 80.34 L1849.9 80.07 L1850.9 79.82 L1851.9 79.57 L1852.9 79.34 L1853.9 79.11 L1854.9 78.90 L1855.9 78.69 L1856.9 78.49 L1857.9 78.30 L1858.9 78.12 L1859.9 77.94 L1860.9 77.77 L1861.9 77.61 L1862.9 77.46 L1863.9 77.31 L1864.9 77.17 L1865.9 77.04 L1866.9 76.91 L1867.9 76.79 L1868.9 76.67 L1869.9 76.56 L1870.9 76.45 L1871.9 76.35 L1872.9 76.25 L1873.9 76.16 L1874.9 76.08 L1875.9 75.99 L1876.9 75.91 L1877.9 75.84 L1878.9 75.77 L1879.9 75.70 L1880.9 75.64 L1881.9 75.58 L1882.9 75.52 L1883.9 75.46 L1884.9 75.41 L1885.9 75.36 L1886.9 75.31 L1887.9 75.26 L1888.9 75.22 L1889.9 75.18 L1890.9 75.14 L1891.9 75.10 L1892.9 75.06 L1893.9 75.02 L1894.9 74.98 L1895.9 74.94 L1896.9 74.91 L1897.9 74.87 L1898.9 74.83 L1899.9 74.80 L1900.9 74.76 L1901.9 74.72 L1902.9 74.69 L1903.9 74.65 L1904.9 74.61 L1905.9 74.57 L1906.9 74.53 L1907.9 74.49 L1908.9 74.45 L1909.0 74.60" fill="none" stroke="#ffff1e" stroke-width="2" stroke-linejoin="round"/>
<path d="M71 736 L71.5 736.1 L72 743.3 L72.5 743.3 L73 750.5 L73.5 750.5 L74 741.4 L74.5 741.6 L75 730.8 L75.5 731 L76 720.2 L76.5 720.3 L77 709.8 L77.5 709.8 L78 715.9 L78.5 716 L79 724 L79.5 724.1 L80 732 L80.5 732.2 L81 725.6 L81.5 725.7 L82 715.2 L82.5 715.4 L83 705.2 L83.5 705.2 L84 694.7 L84.5 694.9 L85 703.9 L85.5 704.1 L86 718 L86.5 718.2 L87 732.3 L87.5 732.3 L88 746.3 L88.5 746.4 L89 757.7 L89.5 757.7 L90 743.9 L90.5 744 L91 730.1 L91.5 730.2 L92 716.2 L92.5 716.4 L93 702.7 L93.5 702.7 L94 688.9 L94.5 689 L95 692.7 L95.5 692.7 L96 707.9 L96.5 708.1 L97 723.5 L97.5 723.5 L98 738.9 L98.5 738.9 L99 754.3 L99.5 754.3 L100 743.4 L100.5 743.5 L101 729.7 L101.5 729.7 L102 715.8 L102.5 715.9 L103 702.2 L103.5 702.2 L104 667.5 L104.5 668.8 L105 664.8 L105.5 668.4 L106 669.7 L106.5 670.2 L107 669.4 L107.5 670.5 L108 664.6 L108.5 669.5 L109 672.1 L109.5 672.2 L110 667.5 L110.5 669.2 L111 664.6 L111.5 665.5 L112 660.9 L112.5 661.6 L113 656.1 L113.5 659.1 L114 659.9 L114.5 660.9 L115 660.7 L115.5 661.8 L116 659.3 L116.5 661 L117 656.1 L117.5 657 L118 649.1 L118.5 651.8 L119 647.8 L119.5 648.4 L120 643.7 L120.5 644.1 L121 640.1 L121.5 642.5 L122 644.7 L122.5 645 L123 645.7 L123.5 646.5 L124 647.5 L124.5 648.2 L125 649.2 L125.5 649.9 L126 646.9 L126.5 651.3 L127 655.1 L127.5 655.8 L128 655.9 L128.5 658.1 L129 661.1 L129.5 661.8 L130 662.8 L130.5 664.4 L131 660.4 L131.5 665.8 L132 661.3 L132.5 665.6 L133 664.2 L133.5 664.4 L134 659.8 L134.5 661 L135 657.7 L135.5 658.3 L136 652.5 L136.5 654.6 L137 649.4 L137.5 651.6 L138 649.4 L138.5 650 L139 648.9 L139.5 649.6 L140 647.2 L140.5 648.8 L141 642.1 L141.5 647 L142 648 L142.5 648.5 L143 646.9 L143.5 647.9 L144 640.5 L144.5 645.7 L145 644.1 L145.5 646.8 L146 646.6 L146.5 647.5 L147 646.2 L147.5 647.3 L148 642.6 L148.5 646.2 L149 645.7 L149.5 647.1 L150 642.4 L150.5 646 L151 647 L151.5 647.4 L152 645.3 L152.5 646.8 L153 639.5 L153.5 645 L154 646.8 L154.5 647.1 L155 644.2 L155.5 646.3 L156 645.3 L156.5 646.2 L157 644.6 L157.5 645.5 L158 643.1 L158.5 644.6 L159 641.7 L159.5 643.7 L160 642.7 L160.5 643.5 L161 640 L161.5 642.3 L162 635.4 L162.5 640.4 L163 640.9 L163.5 641.6 L164 640.2 L164.5 640.9 L165 633.6 L165.5 638.5 L166 639.1 L166.5 639.7 L167 638.9 L167.5 639.3 L168 638.5 L168.5 638.7 L169 636.6 L169.5 637.7 L170 636.3 L170.5 637.2 L171 634.1 L171.5 636.1 L172 631 L172.5 634.8 L173 630.2 L173.5 634.1 L174 634.1 L174.5 634.9 L175 634.2 L175.5 634.5 L176 629.2 L176.5 632.6 L177 633 L177.5 633.3 L178 629.6 L178.5 631.9 L179 630.8 L179.5 631.8 L180 631.5 L180.5 631.6 L181 629.2 L181.5 630.4 L182 629 L182.5 629.8 L183 624.7 L183.5 627.9 L184 627.5 L184.5 628.2 L185 626.2 L185.5 627.2 L186 624.8 L186.5 626.3 L187 623.8 L187.5 625.4 L188 623.5 L188.5 624.8 L189 622 L189.5 623.7 L190 621.5 L190.5 623 L191 621.9 L191.5 622.6 L192 618.6 L192.5 621 L193 618.9 L193.5 620.6 L194 618.5 L194.5 619.9 L195 618.9 L195.5 619.5 L196 618.1 L196.5 618.6 L197 614.9 L197.5 616.2 L198 609.5 L198.5 613.1 L199 607.5 L199.5 611 L200 610.2 L200.5 610.3 L201 607.7 L201.5 608 L202 604.2 L202.5 605.5 L203 599.3 L203.5 602.5 L204 601 L204.5 601.5 L205 599.4 L205.5 599.5 L206 595.6 L206.5 596.9 L207 594.5 L207.5 595.1 L208 592.1 L208.5 592.9 L209 590.7 L209.5 590.9 L210 588.5 L210.5 588.8 L211 585.2 L211.5 586.5 L212 584.8 L212.5 585.1 L213 580.8 L213.5 582.6 L214 579.7 L214.5 581.1 L215 578.6 L215.5 579.4 L216 577.4 L216.5 577.8 L217 574.9 L217.5 575.4 L218 570.5 L218.5 571.4 L219 564.9 L219.5 567.1 L220 563.4 L220.5 564 L221 559.6 L221.5 560.2 L222 556.3 L222.5 557.1 L223 556.3 L223.5 556.9 L224 559 L224.5 559.1 L225 559.5 L225.5 560 L226 560 L226.5 560.3 L227 560.5 L227.5 560.6 L228 560.4 L228.5 560.7 L229 560.1 L229.5 560.8 L230 560.8 L230.5 561.2 L231 561.1 L231.5 561.5 L232 561.1 L232.5 561.7 L233 562.1 L233.5 562.1 L234 561.6 L234.5 562 L235 561.5 L235.5 562 L236 561.7 L236.5 562.1 L237 561.9 L237.5 562.1 L238 561.7 L238.5 562 L239 560.7 L239.5 561.7 L240 560.8 L240.5 561.4 L241 521 L241.5 525.7 L242 518.2 L242.5 518.8 L243 512 L243.5 512.7 L244 501.2 L244.5 504.6 L245 510.6 L245.5 514.5 L246 532 L246.5 533.2 L247 539.7 L247.5 540.6 L248 536.3 L248.5 536.8 L249 532.8 L249.5 532.9 L250 528 L250.5 528.6 L251 526.2 L251.5 526.7 L252 522.5 L252.5 524.2 L253 521.3 L253.5 522.5 L254 519.1 L254.5 520.4 L255 516.9 L255.5 518.4 L256 515.5 L256.5 516.3 L257 512.8 L257.5 513.5 L258 510.6 L258.5 510.9 L259 508 L259.5 508.1 L260 504.4 L260.5 505 L261 501.8 L261.5 502.3 L262 500.2 L262.5 500.3 L263 497.7 L263.5 498.2 L264 496.2 L264.5 496.4 L265 493.3 L265.5 494.1 L266 491.3 L266.5 492.1 L267 489.3 L267.5 490.3 L268 488.4 L268.5 489.1 L269 486.8 L269.5 487.7 L270 485 L270.5 486.2 L271 481.6 L271.5 482.4 L272 483.8 L272.5 484.1 L273 494 L273.5 496.8 L274 508.7 L274.5 508.9 L275 508.2 L275.5 508.9 L276 508.6 L276.5 509.2 L277 508.2 L277.5 509.3 L278 506.4 L278.5 508.7 L279 504.2 L279.5 507 L280 505.8 L280.5 506.4 L281 504.9 L281.5 505.1 L282 502.7 L282.5 503.3 L283 502.5 L283.5 502.9 L284 500.1 L284.5 502 L285 500.1 L285.5 501.7 L286 501.2 L286.5 501.9 L287 500.3 L287.5 501.4 L288 500.9 L288.5 501.4 L289 500.3 L289.5 500.9 L290 495.7 L290.5 499.4 L291 497.5 L291.5 499.7 L292 500.2 L292.5 501.4 L293 500.4 L293.5 502.6 L294 504.5 L294.5 504.8 L295 504.9 L295.5 507.8 L296 512.6 L296.5 514.2 L297 518.4 L297.5 518.9 L298 515.2 L298.5 518.5 L299 519.8 L299.5 520.1 L300 519.7 L300.5 520.2 L301 518.1 L301.5 519.8 L302 517.2 L302.5 519.6 L303 519.5 L303.5 520.3 L304 519.1 L304.5 520.3 L305 519.8 L305.5 520.6 L306 519.8 L306.5 520.7 L307 520.8 L307.5 521 L308 520.6 L308.5 521.1 L309 519.5 L309.5 520.8 L310 518.9 L310.5 520.7 L311 521.2 L311.5 521.5 L312 518.4 L312.5 520.7 L313 520.6 L313.5 521.5 L314 519.7 L314.5 521.2 L315 520.6 L315.5 521.5 L316 521.6 L316.5 521.8 L317 520.3 L317.5 521.4 L318 520.2 L318.5 521.3 L319 519.2 L319.5 521 L320 520.6 L320.5 521.5 L321 519.1 L321.5 521 L322 518.4 L322.5 520.8 L323 520.3 L323.5 521.4 L324 521.1 L324.5 521.6 L325 519.1 L325.5 521 L326 519 L326.5 521 L327 521.2 L327.5 521.7 L328 521.2 L328.5 521.6 L329 521.4 L329.5 521.7 L330 517.4 L330.5 520.6 L331 521.8 L331.5 522.2 L332 521.9 L332.5 522.6 L333 522.3 L333.5 523.1 L334 523.5 L334.5 523.8 L335 520.7 L335.5 523.3 L336 524 L336.5 524.6 L337 524.2 L337.5 525 L338 525.1 L338.5 525.7 L339 522.2 L339.5 525.1 L340 525.3 L340.5 526.3 L341 526.7 L341.5 526.8 L342 526.2 L342.5 526.8 L343 523 L343.5 525.9 L344 525.2 L344.5 526.7 L345 526.5 L345.5 527.2 L346 526.7 L346.5 527.3 L347 526.4 L347.5 527.3 L348 526.6 L348.5 527.5 L349 527.7 L349.5 527.9 L350 527 L350.5 527.7 L351 526.8 L351.5 527.8 L352 527.4 L352.5 528 L353 527.6 L353.5 527.9 L354 519.1 L354.5 522.9 L355 520.1 L355.5 520.7 L356 516 L356.5 517 L357 513.2 L357.5 515.7 L358 513.4 L358.5 515.5 L359 512.6 L359.5 515.1 L360 514.5 L360.5 515.5 L361 515.4 L361.5 515.6 L362 514 L362.5 515 L363 513.8 L363.5 514.8 L364 514.4 L364.5 514.8 L365 514.5 L365.5 514.6 L366 512.3 L366.5 513.8 L367 514.1 L367.5 514.2 L368 512.1 L368.5 513.4 L369 513.5 L369.5 513.6 L370 513.7 L370.5 514.4 L371 512.3 L371.5 512.6 L372 504.3 L372.5 508.8 L373 502 L373.5 506.7 L374 505.6 L374.5 506.4 L375 503.8 L375.5 504.4 L376 502.3 L376.5 503 L377 501.2 L377.5 501.7 L378 499.4 L378.5 500.2 L379 492.3 L379.5 497.2 L380 495.4 L380.5 497.2 L381 490.6 L381.5 494.8 L382 494.3 L382.5 495 L383 493.6 L383.5 493.8 L384 493.3 L384.5 493.5 L385 491.9 L385.5 492.8 L386 490.4 L386.5 492.1 L387 485.8 L387.5 486.5 L388 454.6 L388.5 455 L389 447.4 L389.5 449.3 L390 438.7 L390.5 443.2 L391 434.5 L391.5 438.5 L392 438 L392.5 438.3 L393 437.5 L393.5 438.4 L394 438.5 L394.5 439 L395 440.6 L395.5 441.2 L396 443.6 L396.5 445.7 L397 447.8 L397.5 448.1 L398 442.6 L398.5 443.7 L399 439.7 L399.5 440.1 L400 443.6 L400.5 444.1 L401 442.4 L401.5 448.1 L402 446.5 L402.5 447.1 L403 438.1 L403.5 441.7 L404 438.6 L404.5 439 L405 437.5 L405.5 437.9 L406 438.5 L406.5 438.9 L407 439.6 L407.5 440 L408 439.8 L408.5 440.4 L409 438.1 L409.5 439.9 L410 440.6 L410.5 440.7 L411 439 L411.5 440.2 L412 439.6 L412.5 440.4 L413 440.8 L413.5 441 L414 441.2 L414.5 442.5 L415 439.2 L415.5 443.3 L416 446.4 L416.5 446.9 L417 443.3 L417.5 446.3 L418 444.1 L418.5 444.3 L419 436.7 L419.5 439.9 L420 436.6 L420.5 437.7 L421 434.2 L421.5 434.8 L422 430.7 L422.5 431.9 L423 427.2 L423.5 431.4 L424 433.1 L424.5 433.8 L425 429.4 L425.5 433.3 L426 434.7 L426.5 435.5 L427 434.5 L427.5 436.4 L428 437.7 L428.5 438.3 L429 439.8 L429.5 439.9 L430 438.5 L430.5 439.2 L431 435.3 L431.5 436.1 L432 432.2 L432.5 433 L433 427.2 L433.5 429.3 L434 425.9 L434.5 426.7 L435 426.1 L435.5 427.5 L436 426.5 L436.5 429.1 L437 430.2 L437.5 431.6 L438 430.3 L438.5 432.1 L439 429.3 L439.5 431.5 L440 425.6 L440.5 430.2 L441 431.4 L441.5 431.7 L442 431.2 L442.5 436.9 L443 448.8 L443.5 449.9 L444 448.4 L444.5 451 L445 447 L445.5 448.9 L446 444.1 L446.5 446.5 L447 444 L447.5 444.8 L448 442.6 L448.5 443.5 L449 444.9 L449.5 446.3 L450 449.4 L450.5 449.7 L451 446.2 L451.5 447 L452 440.4 L452.5 440.8 L453 434.1 L453.5 434.5 L454 425.1 L454.5 427.4 L455 431.5 L455.5 432.9 L456 439.5 L456.5 442.3 L457 450.8 L457.5 452.1 L458 454.9 L458.5 455.2 L459 457.8 L459.5 457.9 L460 454.6 L460.5 458.8 L461 458.5 L461.5 460.6 L462 450.7 L462.5 453.7 L463 442.6 L463.5 446.7 L464 438.6 L464.5 442.4 L465 439.8 L465.5 440.7 L466 437.2 L466.5 437.7 L467 428.9 L467.5 433.1 L468 441.8 L468.5 444.2 L469 457.3 L469.5 458.3 L470 463.2 L470.5 463.4 L471 464.9 L471.5 465.6 L472 467.9 L472.5 468.2 L473 465.7 L473.5 466.1 L474 460.2 L474.5 460.8 L475 454.8 L475.5 455.6 L476 454.9 L476.5 455.8 L477 466.5 L477.5 468 L478 479 L478.5 480.4 L479 490.4 L479.5 490.9 L480 497.6 L480.5 499.4 L481 506.7 L481.5 507.4 L482 501.3 L482.5 502.6 L483 495.7 L483.5 497.7 L484 492.2 L484.5 493.4 L485 485.6 L485.5 488.1 L486 485.6 L486.5 486 L487 478.3 L487.5 482.4 L488 476.9 L488.5 480.6 L489 474.6 L489.5 478.5 L490 476.4 L490.5 477.7 L491 475.9 L491.5 476.1 L492 474.8 L492.5 477.7 L493 477.3 L493.5 481.3 L494 482.5 L494.5 485.6 L495 489.9 L495.5 490.6 L496 494.4 L496.5 494.8 L497 494.3 L497.5 495.7 L498 494.7 L498.5 495.5 L499 494.9 L499.5 495.3 L500 493.6 L500.5 494.3 L501 490.8 L501.5 492.2 L502 488.1 L502.5 490.1 L503 482 L503.5 486.9 L504 478.5 L504.5 484.6 L505 484.9 L505.5 485.2 L506 482.4 L506.5 483.2 L507 480.2 L507.5 481.2 L508 481.4 L508.5 481.7 L509 482.3 L509.5 483 L510 477.4 L510.5 482.6 L511 485.1 L511.5 485.9 L512 486.8 L512.5 487.5 L513 486.2 L513.5 488.2 L514 483.9 L514.5 488.2 L515 486 L515.5 489.6 L516 492 L516.5 492.1 L517 491.9 L517.5 492.7 L518 488.3 L518.5 492.4 L519 493.7 L519.5 494.7 L520 492.2 L520.5 494.7 L521 487.5 L521.5 493.7 L522 494.1 L522.5 496.1 L523 496.7 L523.5 497.3 L524 497.9 L524.5 498 L525 495.3 L525.5 497.7 L526 497.1 L526.5 498.6 L527 496.7 L527.5 498.9 L528 499.4 L528.5 500.2 L529 500.5 L529.5 500.9 L530 501.3 L530.5 501.6 L531 504.2 L531.5 504.3 L532 503.4 L532.5 504.8 L533 505.6 L533.5 506.1 L534 505 L534.5 506.7 L535 502.6 L535.5 506.7 L536 507.8 L536.5 508.9 L537 509.7 L537.5 510.2 L538 508.4 L538.5 510.5 L539 512 L539.5 512.3 L540 511.5 L540.5 512.8 L541 514.2 L541.5 514.3 L542 514.3 L542.5 515.1 L543 510.1 L543.5 514.5 L544 516.1 L544.5 517 L545 517.5 L545.5 518.1 L546 518.8 L546.5 519.2 L547 519.8 L547.5 520.2 L548 521.2 L548.5 521.6 L549 521.5 L549.5 522.6 L550 523.3 L550.5 524.1 L551 524.1 L551.5 525.3 L552 526.1 L552.5 526.8 L553 527.6 L553.5 528.2 L554 529.5 L554.5 529.7 L555 527.4 L555.5 530 L556 532.2 L556.5 532.4 L557 530.6 L557.5 533 L558 533.5 L558.5 535.2 L559 537.3 L559.5 537.8 L560 537.7 L560.5 539.3 L561 540.2 L561.5 541.4 L562 541.6 L562.5 543.2 L563 543.2 L563.5 545.1 L564 547.5 L564.5 547.8 L565 548.3 L565.5 549.5 L566 550.7 L566.5 551.6 L567 553.3 L567.5 553.8 L568 555.6 L568.5 556.1 L569 557.9 L569.5 558.3 L570 559.6 L570.5 560.4 L571 562 L571.5 562.7 L572 565 L572.5 565.1 L573 567.2 L573.5 567.3 L574 568.4 L574.5 569.3 L575 569 L575.5 571 L576 569.9 L576.5 572.8 L577 575.5 L577.5 576.1 L578 578.1 L578.5 578.4 L579 579.8 L579.5 580.5 L580 580.2 L580.5 582.3 L581 585.5 L581.5 586.7 L582 590.6 L582.5 591 L583 594.1 L583.5 594.9 L584 597.2 L584.5 598.6 L585 602.6 L585.5 603 L586 605.6 L586.5 606.7 L587 609.9 L587.5 610.8 L588 614.7 L588.5 615 L589 616 L589.5 616.3 L590 617.3 L590.5 617.4 L591 618.2 L591.5 618.4 L592 617.9 L592.5 619 L593 619.7 L593.5 620.2 L594 619.7 L594.5 620.3 L595 620.4 L595.5 620.5 L596 620.4 L596.5 620.6 L597 619.7 L597.5 620.4 L598 620.7 L598.5 620.8 L599 620.2 L599.5 620.6 L600 620.3 L600.5 620.7 L601 620.4 L601.5 620.8 L602 620.7 L602.5 621 L603 620.8 L603.5 621.1 L604 621.1 L604.5 621.4 L605 621.2 L605.5 621.5 L606 621.5 L606.5 621.6 L607 621.4 L607.5 621.7 L608 619.3 L608.5 620.2 L609 612.3 L609.5 617.8 L610 619.7 L610.5 620.2 L611 617.7 L611.5 619.8 L612 619.7 L612.5 620.6 L613 624.8 L613.5 626.5 L614 631.6 L614.5 632.8 L615 636.4 L615.5 636.8 L616 639.4 L616.5 640.2 L617 644.1 L617.5 644.2 L618 647.4 L618.5 647.7 L619 650.1 L619.5 650.5 L620 652.5 L620.5 652.6 L621 654 L621.5 654.5 L622 656.5 L622.5 656.6 L623 658.5 L623.5 658.6 L624 659.1 L624.5 659.7 L625 660.9 L625.5 661 L626 661.9 L626.5 662.1 L627 662.3 L627.5 663 L628 663.7 L628.5 664.3 L629 665.2 L629.5 665.5 L630 666.7 L630.5 666.8 L631 667.2 L631.5 667.8 L632 668.4 L632.5 669 L633 670.3 L633.5 670.5 L634 669.1 L634.5 671 L635 669.5 L635.5 672 L636 673.8 L636.5 674.2 L637 675.2 L637.5 675.5 L638 676 L638.5 676.2 L639 675.3 L639.5 676.4 L640 671.4 L640.5 673.8 L641 660.6 L641.5 661.3 L642 656.9 L642.5 657.4 L643 653.6 L643.5 655.3 L644 651.5 L644.5 653.6 L645 649.8 L645.5 653.5 L646 657 L646.5 657.2 L647 659 L647.5 659.3 L648 660.4 L648.5 661.2 L649 660.8 L649.5 660.8 L650 658.2 L650.5 659.3 L651 657.7 L651.5 658.6 L652 658.4 L652.5 659.1 L653 654.9 L653.5 658.3 L654 656.2 L654.5 658.9 L655 659.5 L655.5 660.2 L656 657.8 L656.5 659.2 L657 657.4 L657.5 657.7 L658 655.4 L658.5 656.3 L659 655.9 L659.5 656.1 L660 654.3 L660.5 655.3 L661 653.6 L661.5 654.7 L662 651.9 L662.5 652.8 L663 648.2 L663.5 650.2 L664 647.6 L664.5 648.4 L665 645.7 L665.5 646.3 L666 644.1 L666.5 644.6 L667 640.6 L667.5 643.2 L668 641.6 L668.5 643.2 L669 640.1 L669.5 642.4 L670 642.8 L670.5 642.9 L671 641.5 L671.5 642.1 L672 638.1 L672.5 640.8 L673 640.6 L673.5 641.3 L674 640.5 L674.5 641.1 L675 639.2 L675.5 640.6 L676 637.1 L676.5 639.8 L677 639.2 L677.5 640.3 L678 640.3 L678.5 640.5 L679 637.3 L679.5 639.4 L680 638.2 L680.5 639.5 L681 638.9 L681.5 639.5 L682 638.2 L682.5 639.1 L683 634.1 L683.5 637.7 L684 638.1 L684.5 638.7 L685 638 L685.5 638.5 L686 636.2 L686.5 637.7 L687 637.9 L687.5 638.1 L688 636.9 L688.5 637.8 L689 637.8 L689.5 638.2 L690 633.8 L690.5 637.1 L691 635.8 L691.5 637.8 L692 634.6 L692.5 637.5 L693 637.3 L693.5 638.4 L694 638.7 L694.5 639 L695 636.4 L695.5 638.4 L696 637.1 L696.5 638.7 L697 637.7 L697.5 638.8 L698 638.4 L698.5 638.9 L699 638.4 L699.5 638.9 L700 637.8 L700.5 638.6 L701 638.7 L701.5 638.8 L702 638.1 L702.5 638.5 L703 636.9 L703.5 638.1 L704 637.5 L704.5 638.1 L705 637.7 L705.5 637.9 L706 636.5 L706.5 637.3 L707 636.3 L707.5 637 L708 636.1 L708.5 636.6 L709 634.9 L709.5 636 L710 634.6 L710.5 635.7 L711 634.3 L711.5 635.3 L712 634.1 L712.5 635 L713 632.3 L713.5 634.1 L714 633.8 L714.5 634.3 L715 632.9 L715.5 633.7 L716 632.8 L716.5 633.4 L717 631.8 L717.5 633 L718 633.7 L718.5 633.8 L719 630.9 L719.5 633.1 L720 631.7 L720.5 633.6 L721 634 L721.5 634.5 L722 629.5 L722.5 634 L723 634.9 L723.5 636.8 L724 638 L724.5 638.8 L725 635.6 L725.5 639.2 L726 639.1 L726.5 639.9 L727 638.2 L727.5 639.3 L728 639.1 L728.5 639.4 L729 636.9 L729.5 638.9 L730 639.4 L730.5 639.9 L731 640 L731.5 640.4 L732 636.4 L732.5 639.5 L733 640.2 L733.5 640.9 L734 641.9 L734.5 642.6 L735 641.4 L735.5 644 L736 644.2 L736.5 646.4 L737 648.4 L737.5 649.2 L738 647.4 L738.5 649 L739 649.6 L739.5 649.8 L740 649.2 L740.5 649.8 L741 644.5 L741.5 648.4 L742 646.7 L742.5 649.2 L743 650.1 L743.5 650.3 L744 650.5 L744.5 650.5 L745 650 L745.5 650.8 L746 651.2 L746.5 651.9 L747 653.2 L747.5 653.2 L748 653.4 L748.5 653.9 L749 656.1 L749.5 656.5 L750 658.8 L750.5 659.2 L751 661.5 L751.5 661.9 L752 663.8 L752.5 664.6 L753 668.2 L753.5 669.5 L754 673.7 L754.5 675.1 L755 681.7 L755.5 682.3 L756 688.9 L756.5 689.9 L757 699.3 L757.5 699.5 L758 706.1 L758.5 706.9 L759 712.5 L759.5 713.2 L760 719.5 L760.5 719.8 L761 724 L761.5 724.8 L762 728.5 L762.5 728.9 L763 722 L763.5 723.1 L764 711.8 L764.5 716.1 L765 711.5 L765.5 712 L766 704.7 L766.5 706.1 L767 710.7 L767.5 711.9 L768 714.7 L768.5 717.9 L769 723.5 L769.5 724.5 L770 717.7 L770.5 718.3 L771 711.6 L771.5 711.9 L772 706.4 L772.5 707.6 L773 706.1 L773.5 708.9 L774 712 L774.5 712.1 L775 713.6 L775.5 714 L776 714.9 L776.5 715.7 L777 714.8 L777.5 716.8 L778 717 L778.5 718.5 L779 717.2 L779.5 719.2 L780 718.8 L780.5 719.6 L781 719.7 L781.5 719.9 L782 715.3 L782.5 718.6 L783 717.4 L783.5 719 L784 717.6 L784.5 718 L785 715.3 L785.5 716.2 L786 714 L786.5 714.6 L787 712.7 L787.5 713.2 L788 711.7 L788.5 712.8 L789 715.4 L789.5 715.4 L790 716.2 L790.5 717.2 L791 717.2 L791.5 719 L792 717.7 L792.5 717.8 L793 711.2 L793.5 714.1 L794 707.9 L794.5 711.4 L795 710.1 L795.5 710.3 L796 713.7 L796.5 713.8 L797 718.9 L797.5 719.7 L798 724.9 L798.5 725.9 L799 725.6 L799.5 726.9 L800 722.9 L800.5 726.6 L801 722.5 L801.5 727 L802 728.1 L802.5 729.1 L803 729.9 L803.5 730.7 L804 730.6 L804.5 732 L805 731.3 L805.5 733.3 L806 730.4 L806.5 732 L807 718.1 L807.5 722 L808 707.1 L808.5 712.5 L809 711 L809.5 711.5 L810 711 L810.5 713.5 L811 717 L811.5 717.3 L812 716.2 L812.5 718.5 L813 711.2 L813.5 713.3 L814 707.7 L814.5 708.5 L815 703.3 L815.5 703.5 L816 695.4 L816.5 697.4 L817 700.5 L817.5 701.9 L818 706.5 L818.5 707.3 L819 709 L819.5 711.6 L820 712 L820.5 714.3 L821 713.4 L821.5 713.8 L822 709.2 L822.5 711.6 L823 711.2 L823.5 711.2 L824 705.4 L824.5 708.6 L825 707.4 L825.5 708.2 L826 707.1 L826.5 707.3 L827 705 L827.5 706.2 L828 705.1 L828.5 705.8 L829 699.8 L829.5 703.8 L830 702.3 L830.5 704.2 L831 702.4 L831.5 703.8 L832 703 L832.5 703.6 L833 703.1 L833.5 703.6 L834 698.9 L834.5 704.3 L835 707.9 L835.5 708.8 L836 710.7 L836.5 711.6 L837 709.3 L837.5 712.6 L838 708.7 L838.5 709.6 L839 704.9 L839.5 705.7 L840 699.9 L840.5 700.2 L841 686.8 L841.5 689.4 L842 675.8 L842.5 679.1 L843 673.8 L843.5 674.4 L844 666.2 L844.5 670.7 L845 669.8 L845.5 670.4 L846 662.6 L846.5 666.8 L847 664.5 L847.5 666 L848 664.4 L848.5 664.6 L849 657.5 L849.5 662.5 L850 659.2 L850.5 663.3 L851 664.2 L851.5 665 L852 665.2 L852.5 665.6 L853 656.5 L853.5 658.8 L854 649.1 L854.5 651.3 L855 643.7 L855.5 644.4 L856 638.2 L856.5 640.1 L857 638.4 L857.5 643.5 L858 647.9 L858.5 649.6 L859 649.7 L859.5 653.5 L860 656 L860.5 656.5 L861 656.3 L861.5 657.3 L862 655.6 L862.5 657.7 L863 659.2 L863.5 659.4 L864 653.6 L864.5 658.3 L865 659.6 L865.5 660.4 L866 660.7 L866.5 661 L867 660.9 L867.5 661.3 L868 658.5 L868.5 659.5 L869 654 L869.5 655.7 L870 652 L870.5 652.7 L871 648.8 L871.5 649.3 L872 646.7 L872.5 647 L873 645.9 L873.5 646.8 L874 647.3 L874.5 647.4 L875 647 L875.5 647.4 L876 638.8 L876.5 645 L877 643.7 L877.5 646.6 L878 645.4 L878.5 647.5 L879 647.2 L879.5 648.5 L880 645.9 L880.5 648.7 L881 649.4 L881.5 650.2 L882 650 L882.5 650.9 L883 647.2 L883.5 650.5 L884 651.6 L884.5 651.6 L885 650.6 L885.5 651.2 L886 648.3 L886.5 650.4 L887 649.5 L887.5 650.7 L888 650.3 L888.5 650.8 L889 649.8 L889.5 650.5 L890 649.4 L890.5 650.2 L891 645.3 L891.5 648.5 L892 648.9 L892.5 649.1 L893 642.3 L893.5 646.6 L894 646.7 L894.5 647.4 L895 645.8 L895.5 646.6 L896 644.7 L896.5 645.8 L897 644.2 L897.5 645.1 L898 644.4 L898.5 644.7 L899 638.2 L899.5 642.3 L900 642.9 L900.5 643.2 L901 638.5 L901.5 641.4 L902 641.7 L902.5 641.9 L903 637.9 L903.5 640.3 L904 637.5 L904.5 639.8 L905 638.9 L905.5 639.8 L906 635.6 L906.5 638.3 L907 632.8 L907.5 637.1 L908 634.9 L908.5 637.3 L909 634.1 L909.5 636.6 L910 633.4 L910.5 636 L911 635.3 L911.5 636.2 L912 632.7 L912.5 635 L913 635.1 L913.5 635.2 L914 633.9 L914.5 634.5 L915 633.2 L915.5 633.9 L916 632.6 L916.5 633.3 L917 632.7 L917.5 632.9 L918 630.8 L918.5 631.9 L919 631.2 L919.5 631.5 L920 627.8 L920.5 629.7 L921 626.7 L921.5 628.7 L922 624.6 L922.5 627.4 L923 626.3 L923.5 627.2 L924 622.9 L924.5 625.5 L925 624.6 L925.5 625.3 L926 624.2 L926.5 624.5 L927 623 L927.5 623.4 L928 622.5 L928.5 622.5 L929 619 L929.5 620.8 L930 619.7 L930.5 620.3 L931 616.3 L931.5 618.6 L932 617.4 L932.5 618.2 L933 617.2 L933.5 617.5 L934 616.1 L934.5 616.4 L935 614.2 L935.5 615.2 L936 611.3 L936.5 613.1 L937 611.3 L937.5 612 L938 607.6 L938.5 609.7 L939 607.9 L939.5 608.6 L940 606.3 L940.5 607 L941 604.4 L941.5 605.3 L942 602.1 L942.5 603.4 L943 601.4 L943.5 602 L944 600.4 L944.5 600.6 L945 598 L945.5 598.6 L946 594.3 L946.5 595.8 L947 593.2 L947.5 593.8 L948 590.7 L948.5 591.4 L949 588.4 L949.5 589 L950 586 L950.5 586.6 L951 583.6 L951.5 584.2 L952 581.4 L952.5 581.9 L953 579.4 L953.5 579.6 L954 575.4 L954.5 575.6 L955 570.6 L955.5 571.1 L956 566.5 L956.5 566.8 L957 562 L957.5 562.4 L958 557.3 L958.5 558 L959 557.4 L959.5 558.1 L960 557.8 L960.5 558.6 L961 558.5 L961.5 559.2 L962 559.3 L962.5 559.8 L963 558.6 L963.5 559.9 L964 559.1 L964.5 560.4 L965 561 L965.5 561.2 L966 560.6 L966.5 560.9 L967 560.9 L967.5 561 L968 560.5 L968.5 560.8 L969 560.6 L969.5 560.7 L970 560.4 L970.5 560.5 L971 559.9 L971.5 560.3 L972 559.7 L972.5 560.2 L973 559.1 L973.5 559.9 L974 559.5 L974.5 559.9 L975 558.3 L975.5 559.5 L976 559.4 L976.5 559.7 L977 558.8 L977.5 559.4 L978 554.6 L978.5 554.8 L979 531.4 L979.5 531.8 L980 502.1 L980.5 507 L981 519.3 L981.5 519.5 L982 532.1 L982.5 532.9 L983 541.9 L983.5 542.2 L984 538.5 L984.5 538.9 L985 535.2 L985.5 535.7 L986 531.9 L986.5 532.5 L987 528.5 L987.5 529.2 L988 525.4 L988.5 526 L989 522.7 L989.5 523 L990 519.8 L990.5 519.9 L991 515 L991.5 516.3 L992 514.1 L992.5 514.6 L993 510.1 L993.5 512.1 L994 510.3 L994.5 510.7 L995 508.4 L995.5 508.8 L996 506.5 L996.5 506.9 L997 502.1 L997.5 504.2 L998 501.2 L998.5 502.5 L999 500 L999.5 500.8 L1000 498.2 L1000.5 498.9 L1001 497 L1001.5 497 L1002 494.3 L1002.5 494.7 L1003 491.6 L1003.5 492.4 L1004 489.4 L1004.5 490.2 L1005 488.1 L1005.5 488.3 L1006 484.4 L1006.5 486.3 L1007 486.4 L1007.5 488 L1008 489.9 L1008.5 490.2 L1009 485.2 L1009.5 485.5 L1010 504 L1010.5 504.7 L1011 507.2 L1011.5 507.5 L1012 507 L1012.5 509.4 L1013 510.1 L1013.5 510.6 L1014 508.9 L1014.5 509 L1015 505.5 L1015.5 506.7 L1016 505.3 L1016.5 505.4 L1017 503.3 L1017.5 503.9 L1018 502.5 L1018.5 503.6 L1019 501 L1019.5 503 L1020 500.4 L1020.5 502.7 L1021 502.1 L1021.5 503.1 L1022 499.7 L1022.5 502.4 L1023 502.2 L1023.5 503 L1024 502.5 L1024.5 502.6 L1025 500.7 L1025.5 501.4 L1026 496.7 L1026.5 499.5 L1027 497 L1027.5 499.3 L1028 500.4 L1028.5 500.8 L1029 501.4 L1029.5 502.4 L1030 505.4 L1030.5 507.7 L1031 510.1 L1031.5 512.3 L1032 512.8 L1032.5 513.1 L1033 509 L1033.5 512 L1034 511.3 L1034.5 512.7 L1035 515.6 L1035.5 515.7 L1036 515.7 L1036.5 517.8 L1037 519.7 L1037.5 520.5 L1038 520.6 L1038.5 520.9 L1039 520.4 L1039.5 521 L1040 520.6 L1040.5 521.2 L1041 520.3 L1041.5 521.2 L1042 520.7 L1042.5 521.5 L1043 521.7 L1043.5 521.9 L1044 517.5 L1044.5 520.8 L1045 520.6 L1045.5 521.9 L1046 521.7 L1046.5 522.3 L1047 520.7 L1047.5 522.1 L1048 522.4 L1048.5 522.8 L1049 521.6 L1049.5 522.7 L1050 521.2 L1050.5 522.7 L1051 522.4 L1051.5 523.2 L1052 523 L1052.5 523.5 L1053 523.8 L1053.5 523.9 L1054 523.8 L1054.5 524 L1055 522.9 L1055.5 523.9 L1056 522.7 L1056.5 524 L1057 524 L1057.5 524.5 L1058 523.3 L1058.5 524.4 L1059 522.4 L1059.5 524.2 L1060 522.8 L1060.5 524.2 L1061 519.1 L1061.5 523 L1062 524.4 L1062.5 524.6 L1063 521.8 L1063.5 523.7 L1064 521.7 L1064.5 523.6 L1065 522.8 L1065.5 523.9 L1066 521.4 L1066.5 523.4 L1067 523.8 L1067.5 524.1 L1068 520.1 L1068.5 523.1 L1069 523.7 L1069.5 524.3 L1070 523.5 L1070.5 524.3 L1071 523.3 L1071.5 524.3 L1072 524.3 L1072.5 524.7 L1073 523.5 L1073.5 524.6 L1074 524.2 L1074.5 524.9 L1075 524.4 L1075.5 525 L1076 524.6 L1076.5 525.2 L1077 524.4 L1077.5 525.2 L1078 523.5 L1078.5 525 L1079 525.1 L1079.5 525.6 L1080 525 L1080.5 525.5 L1081 525 L1081.5 525.3 L1082 524.1 L1082.5 524.9 L1083 523.1 L1083.5 524.5 L1084 523.6 L1084.5 523.6 L1085 518.6 L1085.5 520.7 L1086 519 L1086.5 519.5 L1087 517.7 L1087.5 518 L1088 511.2 L1088.5 515.6 L1089 512.2 L1089.5 515.5 L1090 514.6 L1090.5 515.9 L1091 514.8 L1091.5 515.5 L1092 513.9 L1092.5 515 L1093 514.4 L1093.5 515.2 L1094 513.1 L1094.5 514.8 L1095 509 L1095.5 513.7 L1096 515.6 L1096.5 515.7 L1097 515.5 L1097.5 515.7 L1098 513 L1098.5 515 L1099 509.5 L1099.5 514 L1100 513 L1100.5 515.1 L1101 513.1 L1101.5 515.1 L1102 515.7 L1102.5 516 L1103 514.6 L1103.5 515.7 L1104 512.7 L1104.5 515 L1105 513 L1105.5 514.8 L1106 513.8 L1106.5 514.7 L1107 514.1 L1107.5 514.5 L1108 511.5 L1108.5 513.5 L1109 502.2 L1109.5 503.8 L1110 497.1 L1110.5 499.5 L1111 497.7 L1111.5 498.6 L1112 493.8 L1112.5 496.4 L1113 496.2 L1113.5 496.2 L1114 488.9 L1114.5 493.4 L1115 491.6 L1115.5 493.6 L1116 492.7 L1116.5 493.4 L1117 491.2 L1117.5 492.3 L1118 491.7 L1118.5 491.9 L1119 486.2 L1119.5 487.8 L1120 480.9 L1120.5 482.9 L1121 473.4 L1121.5 477.5 L1122 472.6 L1122.5 474.5 L1123 468.5 L1123.5 470.4 L1124 465.4 L1124.5 466.7 L1125 460.5 L1125.5 462.5 L1126 457.9 L1126.5 458.9 L1127 450.9 L1127.5 454 L1128 449.9 L1128.5 450.9 L1129 442.2 L1129.5 445.8 L1130 442.7 L1130.5 443.2 L1131 432.8 L1131.5 437.5 L1132 432.2 L1132.5 434.5 L1133 430.6 L1133.5 431.4 L1134 424.6 L1134.5 427.3 L1135 424.6 L1135.5 425 L1136 421.5 L1136.5 421.8 L1137 420 L1137.5 420 L1138 420 L1138.5 420 L1139 420 L1139.5 420 L1140 420 L1140.5 420 L1141 420 L1141.5 420 L1142 420 L1142.5 420 L1143 420 L1143.5 420 L1144 420 L1144.5 420 L1145 420 L1145.5 420 L1146 420 L1146.5 420 L1147 420 L1147.5 420 L1148 420 L1148.5 420 L1149 420 L1149.5 420 L1150 420 L1150.5 420 L1151 420 L1151.5 420 L1152 420 L1152.5 420 L1153 420 L1153.5 420 L1154 420 L1154.5 420 L1155 420 L1155.5 420 L1156 420 L1156.5 420.9 L1157 428.7 L1157.5 429.1 L1158 435.6 L1158.5 436.2 L1159 436 L1159.5 436.6 L1160 428.2 L1160.5 432.5 L1161 430.2 L1161.5 431.4 L1162 436.2 L1162.5 436.5 L1163 441.8 L1163.5 442 L1164 444.2 L1164.5 446 L1165 444.8 L1165.5 445.2 L1166 440.3 L1166.5 442.9 L1167 442.1 L1167.5 442.5 L1168 440.6 L1168.5 441 L1169 438.7 L1169.5 439.5 L1170 439.5 L1170.5 440.7 L1171 443.9 L1171.5 444.3 L1172 447.5 L1172.5 447.6 L1173 438.6 L1173.5 439.6 L1174 429.5 L1174.5 429.6 L1175 420 L1175.5 420 L1176 420 L1176.5 421.2 L1177 426.1 L1177.5 426.8 L1178 430.6 L1178.5 430.9 L1179 434.5 L1179.5 434.9 L1180 436.2 L1180.5 438 L1181 439 L1181.5 440.6 L1182 442.4 L1182.5 443.3 L1183 444.8 L1183.5 445.7 L1184 445.6 L1184.5 449.4 L1185 454.4 L1185.5 456.2 L1186 455.4 L1186.5 456 L1187 448.8 L1187.5 450.5 L1188 443.5 L1188.5 445.3 L1189 439.6 L1189.5 440 L1190 428 L1190.5 428.2 L1191 423.9 L1191.5 425.4 L1192 436.5 L1192.5 437.5 L1193 448.7 L1193.5 449.5 L1194 452.3 L1194.5 453 L1195 455.4 L1195.5 455.5 L1196 456.3 L1196.5 457.5 L1197 457.3 L1197.5 459.4 L1198 449.6 L1198.5 452.7 L1199 441.6 L1199.5 444.4 L1200 435.2 L1200.5 436.6 L1201 422.5 L1201.5 426.9 L1202 431.6 L1202.5 433.8 L1203 445.3 L1203.5 448.8 L1204 458.5 L1204.5 460.2 L1205 465.5 L1205.5 466.3 L1206 469.9 L1206.5 471.6 L1207 475.9 L1207.5 476.7 L1208 472.2 L1208.5 472.8 L1209 466.8 L1209.5 468.2 L1210 462.4 L1210.5 464.1 L1211 459.7 L1211.5 460.4 L1212 457.7 L1212.5 458.4 L1213 461.5 L1213.5 463.8 L1214 470.5 L1214.5 470.8 L1215 476.6 L1215.5 476.9 L1216 482.1 L1216.5 482.8 L1217 488.3 L1217.5 489 L1218 494.1 L1218.5 495 L1219 501 L1219.5 501.3 L1220 505.3 L1220.5 506 L1221 508 L1221.5 509.6 L1222 513.1 L1222.5 513.9 L1223 508.3 L1223.5 508.9 L1224 494.8 L1224.5 499.7 L1225 494 L1225.5 494.3 L1226 485.6 L1226.5 486.6 L1227 474.8 L1227.5 478.2 L1228 476.3 L1228.5 476.9 L1229 474.9 L1229.5 475.2 L1230 472.3 L1230.5 473.1 L1231 469.5 L1231.5 470.9 L1232 469.8 L1232.5 472.9 L1233 477.5 L1233.5 477.9 L1234 474 L1234.5 479.5 L1235 485.4 L1235.5 485.6 L1236 487.6 L1236.5 489 L1237 490.1 L1237.5 492.5 L1238 497.1 L1238.5 497.4 L1239 495.5 L1239.5 497.2 L1240 496.3 L1240.5 497.1 L1241 495.1 L1241.5 496.5 L1242 492.9 L1242.5 495.5 L1243 495.4 L1243.5 496 L1244 489.2 L1244.5 493.8 L1245 494.5 L1245.5 495.2 L1246 493.7 L1246.5 494.8 L1247 493.2 L1247.5 494.4 L1248 488.4 L1248.5 492.8 L1249 493.5 L1249.5 494.2 L1250 492.6 L1250.5 493.7 L1251 494.2 L1251.5 494.3 L1252 486.3 L1252.5 492 L1253 494.2 L1253.5 494.5 L1254 494.7 L1254.5 494.8 L1255 492.9 L1255.5 494.3 L1256 493.6 L1256.5 494.6 L1257 490.5 L1257.5 493.8 L1258 495.1 L1258.5 495.3 L1259 494.4 L1259.5 495.1 L1260 488.8 L1260.5 493.5 L1261 495.9 L1261.5 498.2 L1262 497.9 L1262.5 499.6 L1263 501 L1263.5 501.3 L1264 500.3 L1264.5 501.9 L1265 502.7 L1265.5 503.4 L1266 502.2 L1266.5 504 L1267 503.6 L1267.5 505.2 L1268 499.2 L1268.5 504.7 L1269 504.8 L1269.5 507.2 L1270 508.3 L1270.5 509 L1271 509.3 L1271.5 510.1 L1272 509 L1272.5 510.8 L1273 505.6 L1273.5 510.6 L1274 512.5 L1274.5 513.4 L1275 507.6 L1275.5 512.6 L1276 509.5 L1276.5 513.9 L1277 516.1 L1277.5 516.6 L1278 517 L1278.5 517.6 L1279 517.6 L1279.5 518.4 L1280 518.8 L1280.5 519.5 L1281 517.4 L1281.5 519.8 L1282 516.4 L1282.5 520.2 L1283 517.1 L1283.5 521.1 L1284 520 L1284.5 522.7 L1285 523.9 L1285.5 524.5 L1286 525.3 L1286.5 525.7 L1287 526 L1287.5 526.6 L1288 526.1 L1288.5 527.3 L1289 527.8 L1289.5 528.5 L1290 525.2 L1290.5 528.4 L1291 530.5 L1291.5 530.7 L1292 530.5 L1292.5 531.4 L1293 532.6 L1293.5 532.8 L1294 531.4 L1294.5 533.3 L1295 534.8 L1295.5 535.6 L1296 535.7 L1296.5 537.1 L1297 538.3 L1297.5 539.1 L1298 540.6 L1298.5 541 L1299 542 L1299.5 542.6 L1300 543.7 L1300.5 544.4 L1301 545.6 L1301.5 546.2 L1302 548.1 L1302.5 548.1 L1303 548.8 L1303.5 549.6 L1304 548.3 L1304.5 550.6 L1305 551.8 L1305.5 552.9 L1306 554.7 L1306.5 555 L1307 557.1 L1307.5 557.2 L1308 560 L1308.5 560.2 L1309 563 L1309.5 563.2 L1310 561.5 L1310.5 564.9 L1311 565 L1311.5 568 L1312 571.7 L1312.5 572.1 L1313 571.7 L1313.5 574.2 L1314 577.3 L1314.5 578 L1315 579 L1315.5 580.6 L1316 581.2 L1316.5 583.4 L1317 586 L1317.5 586.9 L1318 590 L1318.5 590.2 L1319 592.9 L1319.5 593.2 L1320 598.7 L1320.5 599.6 L1321 602.5 L1321.5 602.6 L1322 605.2 L1322.5 605.3 L1323 607.6 L1323.5 607.9 L1324 611.3 L1324.5 611.4 L1325 614.2 L1325.5 614.8 L1326 617.9 L1326.5 618.4 L1327 620 L1327.5 620.7 L1328 620.4 L1328.5 620.8 L1329 620.4 L1329.5 620.7 L1330 620.2 L1330.5 620.6 L1331 620 L1331.5 620.4 L1332 619.5 L1332.5 620.1 L1333 619.6 L1333.5 619.9 L1334 619.2 L1334.5 619.5 L1335 617.8 L1335.5 618.9 L1336 618.3 L1336.5 618.8 L1337 618.5 L1337.5 618.7 L1338 618.2 L1338.5 618.4 L1339 617.7 L1339.5 618 L1340 617.1 L1340.5 617.6 L1341 618.2 L1341.5 618.3 L1342 618.1 L1342.5 618.6 L1343 619.2 L1343.5 619.3 L1344 619.2 L1344.5 619.6 L1345 616.9 L1345.5 618 L1346 614 L1346.5 615.3 L1347 611.7 L1347.5 615.5 L1348 618.6 L1348.5 618.8 L1349 614.3 L1349.5 618.6 L1350 618.3 L1350.5 621 L1351 632.5 L1351.5 634.5 L1352 638.7 L1352.5 638.9 L1353 640.4 L1353.5 641.1 L1354 643.6 L1354.5 643.8 L1355 646.1 L1355.5 646.3 L1356 647.8 L1356.5 648.5 L1357 650.8 L1357.5 651.2 L1358 653 L1358.5 653.4 L1359 654.2 L1359.5 654.8 L1360 656.2 L1360.5 656.4 L1361 657.5 L1361.5 657.7 L1362 657.8 L1362.5 658.8 L1363 659.9 L1363.5 660.5 L1364 661.8 L1364.5 662 L1365 663.4 L1365.5 663.5 L1366 662.3 L1366.5 664.2 L1367 664.5 L1367.5 666 L1368 664.5 L1368.5 667.1 L1369 667.5 L1369.5 669.2 L1370 669.1 L1370.5 670.8 L1371 671.8 L1371.5 672.7 L1372 673.7 L1372.5 674.5 L1373 673.1 L1373.5 675.5 L1374 674.4 L1374.5 677.1 L1375 678.1 L1375.5 679.4 L1376 668.7 L1376.5 669.3 L1377 656.5 L1377.5 659.3 L1378 650.5 L1378.5 653.6 L1379 652.1 L1379.5 653.4 L1380 652.5 L1380.5 654.1 L1381 654.8 L1381.5 655.4 L1382 654.1 L1382.5 655.9 L1383 656.2 L1383.5 657.1 L1384 656.5 L1384.5 657.4 L1385 654.8 L1385.5 656.8 L1386 656.1 L1386.5 657.1 L1387 652.4 L1387.5 655.9 L1388 654.8 L1388.5 656.5 L1389 655.7 L1389.5 656.7 L1390 653.9 L1390.5 656.1 L1391 653.7 L1391.5 655.9 L1392 655.4 L1392.5 656.3 L1393 652.9 L1393.5 655.1 L1394 654.8 L1394.5 655.2 L1395 653.1 L1395.5 654.1 L1396 650.3 L1396.5 652.8 L1397 652.2 L1397.5 652.6 L1398 646.1 L1398.5 649.6 L1399 648.3 L1399.5 649.1 L1400 646.2 L1400.5 647.3 L1401 645.7 L1401.5 646.5 L1402 644.7 L1402.5 645.6 L1403 643.8 L1403.5 644.7 L1404 643.3 L1404.5 644 L1405 642.9 L1405.5 643.5 L1406 642.6 L1406.5 643.2 L1407 642 L1407.5 642.8 L1408 641.5 L1408.5 642.5 L1409 642 L1409.5 642.4 L1410 637.6 L1410.5 640.9 L1411 641.8 L1411.5 642 L1412 639.9 L1412.5 641.2 L1413 636.9 L1413.5 640.1 L1414 639.7 L1414.5 640.7 L1415 639.6 L1415.5 640.5 L1416 640.3 L1416.5 640.5 L1417 638.6 L1417.5 639.8 L1418 638.7 L1418.5 639.6 L1419 638.7 L1419.5 639.4 L1420 636.4 L1420.5 638.5 L1421 635.5 L1421.5 638.1 L1422 636.5 L1422.5 638.2 L1423 636.2 L1423.5 637.9 L1424 634.5 L1424.5 637.1 L1425 636 L1425.5 637.4 L1426 636.2 L1426.5 637.3 L1427 636.7 L1427.5 637.5 L1428 636.2 L1428.5 637.4 L1429 635.8 L1429.5 637.3 L1430 633.7 L1430.5 636.7 L1431 637.6 L1431.5 637.9 L1432 636.4 L1432.5 637.6 L1433 636.2 L1433.5 637.6 L1434 634.8 L1434.5 637.2 L1435 637.4 L1435.5 638 L1436 633.7 L1436.5 636.9 L1437 633.8 L1437.5 636.9 L1438 637.6 L1438.5 637.9 L1439 637.1 L1439.5 637.6 L1440 637.5 L1440.5 637.5 L1441 636.7 L1441.5 637.1 L1442 635.9 L1442.5 636.8 L1443 636.5 L1443.5 636.8 L1444 635.9 L1444.5 636.4 L1445 635.7 L1445.5 636.2 L1446 634 L1446.5 635.6 L1447 635.5 L1447.5 635.9 L1448 635.4 L1448.5 635.7 L1449 634 L1449.5 635.1 L1450 634.2 L1450.5 635.4 L1451 635.5 L1451.5 636 L1452 631.3 L1452.5 635 L1453 635.6 L1453.5 636.6 L1454 633.2 L1454.5 636 L1455 635.7 L1455.5 637 L1456 632.9 L1456.5 636.7 L1457 638.1 L1457.5 639 L1458 638.7 L1458.5 640.1 L1459 641.2 L1459.5 641.5 L1460 639.9 L1460.5 640.8 L1461 640.1 L1461.5 640.6 L1462 638.1 L1462.5 639.7 L1463 639.3 L1463.5 639.8 L1464 638.7 L1464.5 639.3 L1465 638.7 L1465.5 639 L1466 636.7 L1466.5 638.2 L1467 633.1 L1467.5 636.9 L1468 637.2 L1468.5 638 L1469 637.6 L1469.5 638 L1470 635.4 L1470.5 637.2 L1471 637 L1471.5 637.5 L1472 636 L1472.5 637 L1473 631.9 L1473.5 635.7 L1474 632.3 L1474.5 635.6 L1475 635.9 L1475.5 636.6 L1476 635.7 L1476.5 636.8 L1477 633.3 L1477.5 637.1 L1478 635.7 L1478.5 639.1 L1479 637.5 L1479.5 641.8 L1480 645.5 L1480.5 646.3 L1481 648.2 L1481.5 648.2 L1482 649.4 L1482.5 649.6 L1483 649.2 L1483.5 650.6 L1484 647.1 L1484.5 651.1 L1485 651.2 L1485.5 653.4 L1486 654.2 L1486.5 655.4 L1487 652.4 L1487.5 655.9 L1488 658 L1488.5 661.7 L1489 668.1 L1489.5 669.3 L1490 674.9 L1490.5 676.2 L1491 685.6 L1491.5 687.3 L1492 696 L1492.5 698.3 L1493 703.2 L1493.5 705.1 L1494 704.7 L1494.5 705.4 L1495 704.6 L1495.5 705.2 L1496 703.1 L1496.5 704.5 L1497 704.8 L1497.5 704.8 L1498 700.6 L1498.5 704.3 L1499 707.1 L1499.5 707.8 L1500 709.6 L1500.5 710.2 L1501 711.9 L1501.5 712.5 L1502 710.6 L1502.5 712.5 L1503 705.8 L1503.5 708.5 L1504 704.4 L1504.5 705.6 L1505 703.3 L1505.5 705.1 L1506 705.3 L1506.5 707.1 L1507 709.1 L1507.5 709.7 L1508 709.8 L1508.5 711.3 L1509 711.5 L1509.5 712.7 L1510 710.2 L1510.5 712.4 L1511 713.6 L1511.5 713.6 L1512 713.4 L1512.5 713.7 L1513 713.6 L1513.5 713.9 L1514 712.7 L1514.5 713.7 L1515 711 L1515.5 713.3 L1516 709.9 L1516.5 712.7 L1517 712.5 L1517.5 713.1 L1518 706.4 L1518.5 710.9 L1519 711.3 L1519.5 712.1 L1520 704.3 L1520.5 709.6 L1521 709.7 L1521.5 711.8 L1522 712.1 L1522.5 713.7 L1523 713.1 L1523.5 715.2 L1524 716.9 L1524.5 717.5 L1525 718.9 L1525.5 719.3 L1526 718.2 L1526.5 719 L1527 717.6 L1527.5 718.1 L1528 709 L1528.5 714.8 L1529 715.3 L1529.5 719.2 L1530 724.5 L1530.5 724.9 L1531 726.3 L1531.5 727.4 L1532 724 L1532.5 725.2 L1533 722.9 L1533.5 723.3 L1534 720.3 L1534.5 721 L1535 717.9 L1535.5 718.8 L1536 710.5 L1536.5 715 L1537 707.9 L1537.5 712.7 L1538 713.2 L1538.5 713.4 L1539 715 L1539.5 715.4 L1540 716.5 L1540.5 717.2 L1541 714 L1541.5 717.9 L1542 720.1 L1542.5 720.9 L1543 717.6 L1543.5 718.6 L1544 715.3 L1544.5 716.3 L1545 707.9 L1545.5 712.6 L1546 708.9 L1546.5 711.4 L1547 709.1 L1547.5 709.9 L1548 706.5 L1548.5 707.6 L1549 705 L1549.5 705.6 L1550 701.9 L1550.5 703.3 L1551 701.3 L1551.5 701.8 L1552 698.8 L1552.5 699.6 L1553 699.3 L1553.5 700.6 L1554 703.8 L1554.5 704.1 L1555 706.3 L1555.5 707.1 L1556 710.1 L1556.5 710.4 L1557 712.6 L1557.5 713.4 L1558 708 L1558.5 712.5 L1559 712.2 L1559.5 713.7 L1560 710.9 L1560.5 713.4 L1561 714.2 L1561.5 714.3 L1562 713.5 L1562.5 714.1 L1563 712.6 L1563.5 713.1 L1564 707.4 L1564.5 707.7 L1565 697.9 L1565.5 701 L1566 696.7 L1566.5 696.8 L1567 692 L1567.5 696.2 L1568 699.4 L1568.5 700.6 L1569 698 L1569.5 702.2 L1570 704.7 L1570.5 706.3 L1571 706.1 L1571.5 708.8 L1572 708.9 L1572.5 709.7 L1573 705.7 L1573.5 708.5 L1574 707.8 L1574.5 708.9 L1575 707.9 L1575.5 708.7 L1576 699.7 L1576.5 699.8 L1577 685.8 L1577.5 686.6 L1578 672.8 L1578.5 673.7 L1579 672.2 L1579.5 673.7 L1580 672.4 L1580.5 674.9 L1581 676.8 L1581.5 677.4 L1582 679 L1582.5 679.3 L1583 676.9 L1583.5 677 L1584 672.2 L1584.5 673.3 L1585 670.3 L1585.5 670.4 L1586 664.4 L1586.5 666.3 L1587 663 L1587.5 663.1 L1588 653.8 L1588.5 657.1 L1589 649.1 L1589.5 652.5 L1590 644.1 L1590.5 647.8 L1591 644.4 L1591.5 644.7 L1592 640.7 L1592.5 640.9 L1593 641.6 L1593.5 642.3 L1594 640.2 L1594.5 643.1 L1595 641.3 L1595.5 644.6 L1596 646.6 L1596.5 647.3 L1597 649.1 L1597.5 651.3 L1598 654.8 L1598.5 656.5 L1599 656.2 L1599.5 660.2 L1600 664.3 L1600.5 664.5 L1601 664.9 L1601.5 666.5 L1602 669 L1602.5 669.6 L1603 669.8 L1603.5 671.7 L1604 667.3 L1604.5 668.6 L1605 657.7 L1605.5 662.9 L1606 659.7 L1606.5 660.7 L1607 654.3 L1607.5 656.2 L1608 645.1 L1608.5 650.6 L1609 643 L1609.5 647.8 L1610 646.9 L1610.5 647.5 L1611 645.4 L1611.5 645.7 L1612 644.7 L1612.5 645.2 L1613 644.2 L1613.5 645.5 L1614 638.4 L1614.5 644.2 L1615 646.7 L1615.5 647.2 L1616 647.6 L1616.5 647.9 L1617 647.4 L1617.5 648.3 L1618 647 L1618.5 648.6 L1619 648.9 L1619.5 649.6 L1620 650.3 L1620.5 650.5 L1621 646.9 L1621.5 649.3 L1622 649.4 L1622.5 649.9 L1623 649 L1623.5 649.6 L1624 642.9 L1624.5 647.3 L1625 647.3 L1625.5 648.2 L1626 647.1 L1626.5 647.8 L1627 644.3 L1627.5 646.5 L1628 645.3 L1628.5 646.4 L1629 645.1 L1629.5 646 L1630 645.5 L1630.5 645.6 L1631 643.8 L1631.5 644.7 L1632 636.5 L1632.5 642.1 L1633 642.8 L1633.5 643.6 L1634 642.4 L1634.5 643.1 L1635 641.8 L1635.5 642.5 L1636 641.2 L1636.5 641.9 L1637 641.5 L1637.5 641.6 L1638 640.5 L1638.5 640.9 L1639 639.6 L1639.5 640.2 L1640 639.8 L1640.5 639.9 L1641 635.8 L1641.5 638.3 L1642 637.9 L1642.5 638.5 L1643 636.2 L1643.5 637.5 L1644 631.5 L1644.5 635.6 L1645 632.9 L1645.5 635.6 L1646 634.8 L1646.5 635.7 L1647 634.8 L1647.5 635.2 L1648 634.4 L1648.5 634.7 L1649 633.1 L1649.5 633.8 L1650 633.2 L1650.5 633.3 L1651 629.1 L1651.5 631.7 L1652 630.4 L1652.5 631.6 L1653 630.9 L1653.5 631.2 L1654 630.5 L1654.5 630.7 L1655 628.7 L1655.5 629.7 L1656 628.9 L1656.5 629.3 L1657 628.7 L1657.5 628.7 L1658 627.5 L1658.5 627.9 L1659 624.2 L1659.5 626.5 L1660 626 L1660.5 626.5 L1661 626 L1661.5 626.1 L1662 622.9 L1662.5 624.7 L1663 622.6 L1663.5 623.9 L1664 623.3 L1664.5 623.4 L1665 616.9 L1665.5 620.8 L1666 620.7 L1666.5 621.2 L1667 619.2 L1667.5 620.1 L1668 617.7 L1668.5 618.9 L1669 614.4 L1669.5 617.2 L1670 617.4 L1670.5 617.4 L1671 614.2 L1671.5 615.8 L1672 613.3 L1672.5 614.8 L1673 612.9 L1673.5 614 L1674 611.7 L1674.5 612.9 L1675 611.8 L1675.5 612.2 L1676 608.9 L1676.5 610.1 L1677 607.8 L1677.5 608.4 L1678 603.6 L1678.5 605.7 L1679 603.6 L1679.5 604.3 L1680 601.5 L1680.5 602.3 L1681 598 L1681.5 599.8 L1682 594.7 L1682.5 597.4 L1683 595.5 L1683.5 596.3 L1684 594.4 L1684.5 594.6 L1685 591.3 L1685.5 592.2 L1686 587.6 L1686.5 588.3 L1687 583.8 L1687.5 584.2 L1688 579.1 L1688.5 579.8 L1689 575 L1689.5 575.6 L1690 571.6 L1690.5 571.7 L1691 567 L1691.5 567.3 L1692 562.5 L1692.5 563.1 L1693 557.7 L1693.5 558.7 L1694 557.3 L1694.5 557.4 L1695 556.3 L1695.5 556.8 L1696 556.2 L1696.5 556.8 L1697 557.7 L1697.5 557.8 L1698 557.1 L1698.5 558.2 L1699 558.9 L1699.5 559.3 L1700 558.8 L1700.5 559.9 L1701 560 L1701.5 560.8 L1702 561.8 L1702.5 562 L1703 560.9 L1703.5 561.7 L1704 561.8 L1704.5 562 L1705 561.7 L1705.5 561.9 L1706 561.5 L1706.5 561.7 L1707 561.4 L1707.5 561.6 L1708 561.1 L1708.5 561.5 L1709 561 L1709.5 561.4 L1710 561.4 L1710.5 561.4 L1711 560.3 L1711.5 561 L1712 560.4 L1712.5 561 L1713 561 L1713.5 561.1 L1714 538.5 L1714.5 541.5 L1715 510.4 L1715.5 514.8 L1716 502.2 L1716.5 503.3 L1717 505.7 L1717.5 508.9 L1718 513.8 L1718.5 516.3 L1719 526.3 L1719.5 526.4 L1720 534.9 L1720.5 535.4 L1721 533.2 L1721.5 533.5 L1722 531.2 L1722.5 531.5 L1723 529 L1723.5 529.4 L1724 526.8 L1724.5 527.4 L1725 524.2 L1725.5 525.2 L1726 521.8 L1726.5 523.1 L1727 520.6 L1727.5 521.3 L1728 518.5 L1728.5 519.3 L1729 516.8 L1729.5 517.4 L1730 515 L1730.5 515.4 L1731 511.9 L1731.5 513.1 L1732 510 L1732.5 511.1 L1733 508.6 L1733.5 509.3 L1734 506.2 L1734.5 507.2 L1735 505.4 L1735.5 505.5 L1736 501.6 L1736.5 503 L1737 501.5 L1737.5 501.6 L1738 499.3 L1738.5 499.4 L1739 496.3 L1739.5 496.3 L1740 492.9 L1740.5 493.2 L1741 487.1 L1741.5 489.3 L1742 486.5 L1742.5 487 L1743 483.8 L1743.5 484.1 L1744 479.9 L1744.5 481.6 L1745 478.2 L1745.5 480.1 L1746 483.2 L1746.5 484.6 L1747 497.8 L1747.5 498.2 L1748 507.5 L1748.5 508.5 L1749 506.6 L1749.5 508.2 L1750 505.2 L1750.5 507.8 L1751 507.9 L1751.5 508.6 L1752 504.2 L1752.5 507 L1753 504.9 L1753.5 506.7 L1754 504.7 L1754.5 506.1 L1755 504.1 L1755.5 505.4 L1756 504 L1756.5 504.9 L1757 501.8 L1757.5 503.7 L1758 500 L1758.5 502.6 L1759 499.2 L1759.5 501.8 L1760 499.2 L1760.5 501.3 L1761 497.9 L1761.5 500.3 L1762 494.9 L1762.5 498.8 L1763 498.7 L1763.5 499.4 L1764 496 L1764.5 498 L1765 500.2 L1765.5 500.9 L1766 499.4 L1766.5 502.2 L1767 501.9 L1767.5 504.5 L1768 507.9 L1768.5 507.9 L1769 509.3 L1769.5 509.9 L1770 511.6 L1770.5 512.2 L1771 512.7 L1771.5 513.6 L1772 511.6 L1772.5 513.7 L1773 513.4 L1773.5 514.7 L1774 513.9 L1774.5 515.3 L1775 514.9 L1775.5 516.1 L1776 514.3 L1776.5 516.4 L1777 516.8 L1777.5 517.6 L1778 515.4 L1778.5 517.7 L1779 516.4 L1779.5 518.4 L1780 517.6 L1780.5 519.2 L1781 517 L1781.5 519.3 L1782 519.4 L1782.5 520.1 L1783 516.7 L1783.5 519.4 L1784 515.3 L1784.5 519 L1785 520.6 L1785.5 520.7 L1786 519 L1786.5 520.3 L1787 520.3 L1787.5 520.7 L1788 520.2 L1788.5 520.8 L1789 517.9 L1789.5 520.2 L1790 520.5 L1790.5 521 L1791 520.4 L1791.5 521.1 L1792 517.8 L1792.5 520.4 L1793 519.3 L1793.5 520.9 L1794 521.7 L1794.5 521.7 L1795 521.4 L1795.5 521.7 L1796 516.4 L1796.5 520.3 L1797 521.8 L1797.5 522 L1798 519.9 L1798.5 521.4 L1799 521.8 L1799.5 522 L1800 520.6 L1800.5 521.7 L1801 520.9 L1801.5 521.7 L1802 521 L1802.5 521.8 L1803 521.5 L1803.5 521.9 L1804 519 L1804.5 521.2 L1805 520.9 L1805.5 521.7 L1806 521.3 L1806.5 521.9 L1807 519.2 L1807.5 521.3 L1808 521.8 L1808.5 522.2 L1809 519.8 L1809.5 521.7 L1810 517.5 L1810.5 521.1 L1811 521.2 L1811.5 522.3 L1812 522.4 L1812.5 522.7 L1813 521.9 L1813.5 522.7 L1814 522.3 L1814.5 522.9 L1815 520.9 L1815.5 522.6 L1816 522.6 L1816.5 523.1 L1817 518 L1817.5 521.8 L1818 522.4 L1818.5 523.3 L1819 522.8 L1819.5 523.5 L1820 519.8 L1820.5 522.4 L1821 522.6 L1821.5 522.8 L1822 521.4 L1822.5 522 L1823 519.4 L1823.5 521 L1824 516.3 L1824.5 519.7 L1825 520.4 L1825.5 520.5 L1826 516.5 L1826.5 518.9 L1827 517.5 L1827.5 518.8 L1828 513.5 L1828.5 517.2 L1829 517.3 L1829.5 517.9 L1830 513.6 L1830.5 516.5 L1831 517.1 L1831.5 517.2 L1832 515.6 L1832.5 516.5 L1833 516 L1833.5 516.3 L1834 510.6 L1834.5 514.4 L1835 514.4 L1835.5 515.3 L1836 514.9 L1836.5 515.2 L1837 514.3 L1837.5 514.7 L1838 514.4 L1838.5 514.5 L1839 512.4 L1839.5 512.5 L1840 504.3 L1840.5 508.3 L1841 506.3 L1841.5 507.2 L1842 504.1 L1842.5 504.7 L1843 500.5 L1843.5 501.9 L1844 500.4 L1844.5 501.1 L1845 498.3 L1845.5 500.3 L1846 500.1 L1846.5 500.7 L1847 499.5 L1847.5 500.3 L1848 495.1 L1848.5 498.8 L1849 493.1 L1849.5 498 L1850 499.5 L1850.5 499.8 L1851 497.7 L1851.5 499 L1852 497.9 L1852.5 498.9 L1853 492.5 L1853.5 497.2 L1854 496.3 L1854.5 497.9 L1855 496.7 L1855.5 497.1 L1856 495.2 L1856.5 495.8 L1857 490.9 L1857.5 493.7 L1858 493.2 L1858.5 493.5 L1859 487.2 L1859.5 490.8 L1860 490 L1860.5 490.8 L1861 480.1 L1861.5 480.5 L1862 457.6 L1862.5 459 L1863 444 L1863.5 444.4 L1864 430 L1864.5 431.4 L1865 428 L1865.5 429.2 L1866 426.7 L1866.5 427.2 L1867 420 L1867.5 423 L1868 421.8 L1868.5 422.4 L1869 420 L1869.5 420 L1870 420 L1870.5 420 L1871 420 L1871.5 420 L1872 420 L1872.5 420 L1873 420 L1873.5 420 L1874 420 L1874.5 420 L1875 420 L1875.5 420 L1876 420 L1876.5 420 L1877 421.1 L1877.5 421.5 L1878 421.6 L1878.5 422.7 L1879 422.3 L1879.5 424 L1880 424.5 L1880.5 425 L1881 424.8 L1881.5 425.1 L1882 422.1 L1882.5 424.3 L1883 420.9 L1883.5 424 L1884 424.7 L1884.5 425.1 L1885 423.6 L1885.5 424.8 L1886 420.8 L1886.5 423.9 L1887 423 L1887.5 424.4 L1888 421.4 L1888.5 423.7 L1889 422.7 L1889.5 423.8 L1890 420 L1890.5 422.4 L1891 422.4 L1891.5 423.2 L1892 422.2 L1892.5 422.8 L1893 420 L1893.5 420.6 L1894 420.7 L1894.5 423.7 L1895 427.1 L1895.5 427.4 L1896 426.3 L1896.5 428.9 L1897 431.5 L1897.5 432.2 L1898 429 L1898.5 433.2 L1899 433.2 L1899.5 434 L1900 432 L1900.5 432.5 L1901 430.8 L1901.5 431 L1902 421.8 L1902.5 427.2 L1903 430.4 L1903.5 431.6 L1904 433 L1904.5 437.3 L1905 445.3 L1905.5 445.9 L1906 451.8 L1906.5 452.3 L1907 443 L1907.5 447.9 L1908 446.5 L1908.5 447.2 L1908.5 483.9 L1908 486.2 L1907.5 485.3 L1907 486.2 L1906.5 481 L1906 481.5 L1905.5 477.3 L1905 481.9 L1904.5 470.2 L1904 471.1 L1903.5 468.5 L1903 472.1 L1902.5 470.8 L1902 476.2 L1901.5 470 L1901 470.1 L1900.5 471.7 L1900 472.1 L1899.5 468.7 L1899 469.5 L1898.5 465.1 L1898 465.1 L1897.5 462.1 L1897 462.9 L1896.5 458.7 L1896 459.4 L1895.5 455.7 L1895 457 L1894.5 456.2 L1894 456.6 L1893.5 459.3 L1893 462.2 L1892.5 460.1 L1892 460.4 L1891.5 462.9 L1891 464.9 L1890.5 464.1 L1890 464.3 L1889.5 464.5 L1889 464.9 L1888.5 464.9 L1888 467.2 L1887.5 463.5 L1887 463.7 L1886.5 463.1 L1886 463.7 L1885.5 463.3 L1885 465.6 L1884.5 462.1 L1884 462.8 L1883.5 461.8 L1883 463 L1882.5 460.8 L1882 461.7 L1881.5 461.3 L1881 465.7 L1880.5 458.5 L1880 458.7 L1879.5 458.1 L1879 459.5 L1878.5 457 L1878 458.3 L1877.5 455.9 L1877 460.6 L1876.5 450.9 L1876 451.6 L1875.5 447.6 L1875 448.5 L1874.5 443.9 L1874 444 L1873.5 441.2 L1873 442.8 L1872.5 442.1 L1872 443.7 L1871.5 446.4 L1871 447.8 L1870.5 450.9 L1870 452.1 L1869.5 455.1 L1869 456.1 L1868.5 458 L1868 458.7 L1867.5 461.1 L1867 461.9 L1866.5 464.1 L1866 465.1 L1865.5 466.8 L1865 468.6 L1864.5 468.4 L1864 469.1 L1863.5 470.3 L1863 470.8 L1862.5 478.3 L1862 480.6 L1861.5 501.2 L1861 503.3 L1860.5 514.4 L1860 514.9 L1859.5 520.6 L1859 521.5 L1858.5 522.9 L1858 523.3 L1857.5 525.1 L1857 526 L1856.5 526.6 L1856 526.7 L1855.5 528.6 L1855 529 L1854.5 530.4 L1854 530.5 L1853.5 532.7 L1853 534 L1852.5 534.5 L1852 535.6 L1851.5 534.9 L1851 536.7 L1850.5 534.7 L1850 535.6 L1849.5 534.7 L1849 535.5 L1848.5 536.2 L1848 540.3 L1847.5 534.7 L1847 535.3 L1846.5 534.9 L1846 535.6 L1845.5 536.4 L1845 540.6 L1844.5 535.8 L1844 538.2 L1843.5 535 L1843 535.5 L1842.5 536.1 L1842 538.7 L1841.5 538.4 L1841 541 L1840.5 541.2 L1840 542 L1839.5 544.5 L1839 544.9 L1838.5 548.5 L1838 552 L1837.5 549.3 L1837 554.2 L1836.5 548.1 L1836 549.6 L1835.5 548.4 L1835 549.8 L1834.5 548.5 L1834 549.6 L1833.5 549.8 L1833 553.6 L1832.5 548.8 L1832 549.4 L1831.5 548.9 L1831 549.1 L1830.5 549.5 L1830 550.5 L1829.5 549.3 L1829 549.5 L1828.5 549.6 L1828 549.9 L1827.5 550.6 L1827 552.6 L1826.5 550.1 L1826 550.2 L1825.5 550.8 L1825 552.2 L1824.5 551.6 L1824 554.8 L1823.5 550 L1823 550.1 L1822.5 550 L1822 550.6 L1821.5 550.8 L1821 554 L1820.5 549.7 L1820 550.9 L1819.5 550.4 L1819 553.8 L1818.5 549.2 L1818 550.3 L1817.5 548.9 L1817 549.7 L1816.5 548.4 L1816 548.9 L1815.5 548.6 L1815 550 L1814.5 548.3 L1814 549.4 L1813.5 547.8 L1813 548 L1812.5 548.5 L1812 550.6 L1811.5 548.3 L1811 550.2 L1810.5 547.9 L1810 549.1 L1809.5 547.5 L1809 548.1 L1808.5 547.4 L1808 548.1 L1807.5 547.4 L1807 548.3 L1806.5 547 L1806 547.2 L1805.5 547 L1805 547.3 L1804.5 546.8 L1804 547 L1803.5 547.3 L1803 548.7 L1802.5 547 L1802 547.9 L1801.5 546.5 L1801 546.7 L1800.5 546.5 L1800 546.7 L1799.5 546.3 L1799 546.5 L1798.5 546.2 L1798 546.2 L1797.5 546.5 L1797 547.4 L1796.5 546.1 L1796 546.9 L1795.5 545.9 L1795 546.7 L1794.5 546.8 L1794 550.4 L1793.5 546 L1793 548.3 L1792.5 544.9 L1792 545.3 L1791.5 544.6 L1791 545.1 L1790.5 544.6 L1790 545.5 L1789.5 544.9 L1789 547.1 L1788.5 545 L1788 548.1 L1787.5 543.7 L1787 544.3 L1786.5 543.4 L1786 544 L1785.5 543.7 L1785 545.5 L1784.5 543.1 L1784 544.4 L1783.5 542.6 L1783 543.1 L1782.5 542.4 L1782 543.2 L1781.5 543.2 L1781 546.5 L1780.5 542.5 L1780 544.8 L1779.5 541.5 L1779 541.9 L1778.5 541.7 L1778 543.4 L1777.5 541.2 L1777 542.2 L1776.5 540.7 L1776 541.3 L1775.5 541.2 L1775 543.4 L1774.5 540 L1774 540.1 L1773.5 538.5 L1773 539 L1772.5 536.8 L1772 538.1 L1771.5 535 L1771 536.5 L1770.5 532.4 L1770 532.6 L1769.5 530.8 L1769 532 L1768.5 528.5 L1768 529.1 L1767.5 527.2 L1767 528.2 L1766.5 528.1 L1766 531.2 L1765.5 527 L1765 527.5 L1764.5 527.3 L1764 528.6 L1763.5 527.2 L1763 528.2 L1762.5 527.2 L1762 528.3 L1761.5 527.1 L1761 527.9 L1760.5 527 L1760 527.7 L1759.5 528 L1759 530.5 L1758.5 527.4 L1758 528.1 L1757.5 528.4 L1757 531 L1756.5 527.8 L1756 528.8 L1755.5 527.9 L1755 528.6 L1754.5 528.6 L1754 530.4 L1753.5 528.4 L1753 529.3 L1752.5 528.2 L1752 528.4 L1751.5 528.4 L1751 528.7 L1750.5 528.8 L1750 529.6 L1749.5 529.1 L1749 529.9 L1748.5 529.3 L1748 530.4 L1747.5 524.1 L1747 526.3 L1746.5 516.1 L1746 516.6 L1745.5 510.3 L1745 514.1 L1744.5 505.4 L1744 506.1 L1743.5 506.9 L1743 507.2 L1742.5 508.5 L1742 508.5 L1741.5 510.3 L1741 510.8 L1740.5 512.8 L1740 515 L1739.5 513.9 L1739 514.8 L1738.5 515.5 L1738 516.2 L1737.5 517.1 L1737 517.8 L1736.5 518.5 L1736 518.9 L1735.5 520.7 L1735 522.7 L1734.5 522.2 L1734 524.3 L1733.5 523.4 L1733 524.8 L1732.5 524.7 L1732 525.8 L1731.5 526 L1731 526.4 L1730.5 527.6 L1730 528.4 L1729.5 528.8 L1729 528.9 L1728.5 530.5 L1728 531.1 L1727.5 531.7 L1727 531.9 L1726.5 533.7 L1726 535.2 L1725.5 535 L1725 536.4 L1724.5 536 L1724 536.4 L1723.5 537.5 L1723 538.1 L1722.5 538.7 L1722 538.8 L1721.5 540.8 L1721 541.7 L1720.5 545.2 L1720 545.7 L1719.5 549.7 L1719 549.7 L1718.5 556.5 L1718 560.2 L1717.5 563.7 L1717 565.1 L1716.5 565.9 L1716 566.7 L1715.5 568 L1715 573.5 L1714.5 565.9 L1714 566.5 L1713.5 565.8 L1713 566.2 L1712.5 565.8 L1712 566 L1711.5 566 L1711 566.4 L1710.5 566 L1710 566.3 L1709.5 566.3 L1709 566.8 L1708.5 566.5 L1708 567.2 L1707.5 566.4 L1707 566.9 L1706.5 566.6 L1706 567.2 L1705.5 566.5 L1705 566.7 L1704.5 566.8 L1704 567.4 L1703.5 566.8 L1703 567.1 L1702.5 566.8 L1702 567.2 L1701.5 566.6 L1701 566.6 L1700.5 566.5 L1700 566.8 L1699.5 566.4 L1699 566.7 L1698.5 566.3 L1698 566.6 L1697.5 566.2 L1697 566.6 L1696.5 566.2 L1696 566.7 L1695.5 566 L1695 566.5 L1694.5 565.7 L1694 565.8 L1693.5 567.7 L1693 569.1 L1692.5 572.2 L1692 572.8 L1691.5 577 L1691 577.5 L1690.5 581.7 L1690 581.9 L1689.5 586.8 L1689 587.6 L1688.5 591.5 L1688 591.9 L1687.5 596.3 L1687 596.5 L1686.5 601.3 L1686 602 L1685.5 606.7 L1685 608.7 L1684.5 609 L1684 610.3 L1683.5 611.5 L1683 612.2 L1682.5 614.2 L1682 615.2 L1681.5 617 L1681 618.3 L1680.5 619.4 L1680 620.1 L1679.5 622.5 L1679 623.9 L1678.5 624.8 L1678 625.7 L1677.5 627.5 L1677 628.4 L1676.5 630.3 L1676 631.5 L1675.5 632.6 L1675 633.3 L1674.5 634.8 L1674 635.7 L1673.5 637.6 L1673 640.5 L1672.5 638.9 L1672 640.1 L1671.5 641.8 L1671 645.2 L1670.5 642.7 L1670 643.6 L1669.5 644.8 L1669 645.8 L1668.5 646.9 L1668 648.2 L1667.5 648.4 L1667 648.5 L1666.5 650.5 L1666 651 L1665.5 652.7 L1665 653.6 L1664.5 654.5 L1664 654.8 L1663.5 656.9 L1663 658.1 L1662.5 660.1 L1662 664.4 L1661.5 659.2 L1661 659.2 L1660.5 660.2 L1660 660.6 L1659.5 661.2 L1659 662.1 L1658.5 661.8 L1658 662.3 L1657.5 664.7 L1657 669.8 L1656.5 665 L1656 669 L1655.5 664.2 L1655 664.4 L1654.5 665.1 L1654 665.4 L1653.5 667.8 L1653 672.6 L1652.5 667.3 L1652 668.8 L1651.5 667.7 L1651 668.1 L1650.5 668.7 L1650 669.5 L1649.5 670.6 L1649 674.2 L1648.5 671.3 L1648 674.3 L1647.5 671.1 L1647 671.9 L1646.5 672.3 L1646 673.7 L1645.5 672.8 L1645 673.7 L1644.5 673.7 L1644 674.6 L1643.5 674.3 L1643 674.8 L1642.5 676.1 L1642 678.7 L1641.5 676.1 L1641 676.9 L1640.5 677.8 L1640 680.4 L1639.5 678 L1639 679.2 L1638.5 679.3 L1638 681.6 L1637.5 679.4 L1637 680 L1636.5 680.9 L1636 683.2 L1635.5 681.1 L1635 682 L1634.5 683 L1634 686.3 L1633.5 683 L1633 684.4 L1632.5 683.4 L1632 683.6 L1631.5 684.5 L1631 685.5 L1630.5 685.1 L1630 685.4 L1629.5 686.5 L1629 688 L1628.5 686.7 L1628 686.7 L1627.5 690 L1627 695.8 L1626.5 689.9 L1626 693.6 L1625.5 689.9 L1625 691.8 L1624.5 690.3 L1624 691.2 L1623.5 691.5 L1623 693.2 L1622.5 691.7 L1622 692.6 L1621.5 694.1 L1621 699.5 L1620.5 694.6 L1620 700.1 L1619.5 691.7 L1619 692.2 L1618.5 690.9 L1618 691.6 L1617.5 690.3 L1617 691.2 L1616.5 689.5 L1616 690.2 L1615.5 688.6 L1615 689.2 L1614.5 687.9 L1614 688.7 L1613.5 687 L1613 687.2 L1612.5 686.9 L1612 687.3 L1611.5 687.1 L1611 687.9 L1610.5 687 L1610 687.6 L1609.5 687.6 L1609 689.6 L1608.5 689.8 L1608 690.9 L1607.5 694.6 L1607 696.2 L1606.5 698.4 L1606 698.6 L1605.5 704.8 L1605 709.4 L1604.5 707.5 L1604 708 L1603.5 711.9 L1603 712.3 L1602.5 713.2 L1602 713.7 L1601.5 711.2 L1601 714.9 L1600.5 706.5 L1600 706.9 L1599.5 703.3 L1599 704.4 L1598.5 700.7 L1598 703.4 L1597.5 696.5 L1597 697.4 L1596.5 693.7 L1596 696.3 L1595.5 690 L1595 692.3 L1594.5 686.1 L1594 687.2 L1593.5 684.1 L1593 688.8 L1592.5 680.9 L1592 686.3 L1591.5 684 L1591 684.5 L1590.5 689.9 L1590 689.9 L1589.5 697.8 L1589 702 L1588.5 702.7 L1588 704.2 L1587.5 706.2 L1587 709.1 L1586.5 707.1 L1586 707.6 L1585.5 710.4 L1585 713.9 L1584.5 711.1 L1584 711.6 L1583.5 713.1 L1583 713.8 L1582.5 715.3 L1582 717.1 L1581.5 715.8 L1581 716.8 L1580.5 717 L1580 718.8 L1579.5 717.1 L1579 717.2 L1578.5 717.8 L1578 717.9 L1577.5 718.9 L1577 719.5 L1576.5 719.7 L1576 720.4 L1575.5 722.3 L1575 722.9 L1574.5 729.5 L1574 730.5 L1573.5 736.1 L1573 736.5 L1572.5 743 L1572 743.3 L1571.5 743 L1571 744 L1570.5 741.6 L1570 744.1 L1569.5 740.5 L1569 745.7 L1568.5 736.7 L1568 737.9 L1567.5 734.7 L1567 736.2 L1566.5 732.4 L1566 733.4 L1565.5 733.5 L1565 734.3 L1564.5 736.5 L1564 736.6 L1563.5 739.7 L1563 739.8 L1562.5 743.7 L1562 745.4 L1561.5 745.6 L1561 746.4 L1560.5 746.6 L1560 748.6 L1559.5 746.5 L1559 747.1 L1558.5 747.9 L1558 750.8 L1557.5 748.3 L1557 750.7 L1556.5 748.1 L1556 749 L1555.5 745.6 L1555 746.1 L1554.5 742.6 L1554 743.2 L1553.5 739.4 L1553 739.7 L1552.5 738.2 L1552 742.6 L1551.5 734 L1551 735.9 L1550.5 732.7 L1550 734 L1549.5 737 L1549 741 L1548.5 740.3 L1548 744.4 L1547.5 743.7 L1547 748.1 L1546.5 746 L1546 748.3 L1545.5 748.5 L1545 749.1 L1544.5 751.5 L1544 755.7 L1543.5 750.6 L1543 750.8 L1542.5 751.2 L1542 751.3 L1541.5 752.1 L1541 752.4 L1540.5 753 L1540 753.8 L1539.5 753.8 L1539 755.4 L1538.5 753.1 L1538 755.4 L1537.5 751.3 L1537 751.6 L1536.5 751.5 L1536 754.5 L1535.5 749.6 L1535 750.6 L1534.5 753.2 L1534 757 L1533.5 754.9 L1533 757.5 L1532.5 756.3 L1532 756.8 L1531.5 758.6 L1531 759.1 L1530.5 758.5 L1530 759.9 L1529.5 756.9 L1529 757.7 L1528.5 756.4 L1528 759 L1527.5 754.4 L1527 755.2 L1526.5 753.1 L1526 753.8 L1525.5 752.6 L1525 755.9 L1524.5 749.2 L1524 750 L1523.5 747 L1523 747.9 L1522.5 745.7 L1522 749 L1521.5 742.6 L1521 743.1 L1520.5 745 L1520 745.6 L1519.5 748 L1519 750.1 L1518.5 749.8 L1518 750.7 L1517.5 753.6 L1517 758 L1516.5 750.8 L1516 751.3 L1515.5 750.1 L1515 752.1 L1514.5 748 L1514 748.3 L1513.5 747.6 L1513 750.4 L1512.5 746.7 L1512 750.5 L1511.5 743.8 L1511 744.2 L1510.5 742.3 L1510 742.4 L1509.5 740.8 L1509 741.2 L1508.5 739.7 L1508 741.6 L1507.5 737.6 L1507 738.3 L1506.5 735.8 L1506 736.2 L1505.5 737.7 L1505 738.6 L1504.5 740.1 L1504 740.4 L1503.5 743.9 L1503 746.9 L1502.5 745.4 L1502 745.9 L1501.5 749.6 L1501 753.7 L1500.5 746.3 L1500 746.5 L1499.5 745.5 L1499 747.4 L1498.5 744.3 L1498 747.1 L1497.5 742.1 L1497 743.2 L1496.5 740.3 L1496 740.8 L1495.5 739.4 L1495 741.2 L1494.5 737.6 L1494 740.7 L1493.5 734.2 L1493 735 L1492.5 732.8 L1492 736.1 L1491.5 722.9 L1491 723 L1490.5 715 L1490 717.8 L1489.5 704.9 L1489 705.7 L1488.5 696 L1488 697.2 L1487.5 692.9 L1487 693.4 L1486.5 691.7 L1486 692.3 L1485.5 690.3 L1485 690.7 L1484.5 689.2 L1484 690 L1483.5 687.8 L1483 688.2 L1482.5 688 L1482 692 L1481.5 684.6 L1481 685.4 L1480.5 682.3 L1480 682.7 L1479.5 677.1 L1479 678.3 L1478.5 671.6 L1478 672.6 L1477.5 669.7 L1477 670.4 L1476.5 668.9 L1476 669.5 L1475.5 669.7 L1475 673.9 L1474.5 668.1 L1474 670.3 L1473.5 667.4 L1473 668.7 L1472.5 667.9 L1472 669 L1471.5 668.4 L1471 669.2 L1470.5 669.1 L1470 669.8 L1469.5 669.7 L1469 670.5 L1468.5 670.3 L1468 671.1 L1467.5 671.3 L1467 672.9 L1466.5 671.6 L1466 672.6 L1465.5 673.3 L1465 676.6 L1464.5 672.4 L1464 673.1 L1463.5 673.9 L1463 678.2 L1462.5 672.1 L1462 672.6 L1461.5 671.8 L1461 671.9 L1460.5 672.2 L1460 673.5 L1459.5 671.6 L1459 671.9 L1458.5 671.7 L1458 672.6 L1457.5 671.3 L1457 671.8 L1456.5 669.8 L1456 669.8 L1455.5 668 L1455 668.8 L1454.5 666.8 L1454 669.1 L1453.5 664.5 L1453 666.2 L1452.5 662 L1452 662.5 L1451.5 660.3 L1451 660.9 L1450.5 660.9 L1450 663 L1449.5 660.1 L1449 660.3 L1448.5 661.3 L1448 663.9 L1447.5 660.4 L1447 660.8 L1446.5 660.7 L1446 661.8 L1445.5 660.7 L1445 661.6 L1444.5 660.5 L1444 661 L1443.5 660.6 L1443 661.1 L1442.5 660.5 L1442 660.9 L1441.5 661.9 L1441 665.4 L1440.5 661.1 L1440 662.7 L1439.5 661.1 L1439 662.5 L1438.5 660.9 L1438 661.8 L1437.5 660.8 L1437 661.4 L1436.5 660.9 L1436 661.3 L1435.5 661 L1435 661.5 L1434.5 661 L1434 661.5 L1433.5 661.9 L1433 664 L1432.5 661.5 L1432 662.4 L1431.5 661.6 L1431 662.5 L1430.5 661.3 L1430 661.5 L1429.5 661.7 L1429 662.5 L1428.5 662.2 L1428 664.1 L1427.5 662 L1427 663.2 L1426.5 661.8 L1426 662 L1425.5 661.9 L1425 662.1 L1424.5 662.3 L1424 663.3 L1423.5 662.6 L1423 663.8 L1422.5 662.4 L1422 662.9 L1421.5 663.5 L1421 666.1 L1420.5 662.9 L1420 663.7 L1419.5 663.8 L1419 666.5 L1418.5 663 L1418 663.6 L1417.5 664.2 L1417 667.3 L1416.5 664.2 L1416 666.7 L1415.5 663.5 L1415 664.1 L1414.5 664.1 L1414 665.7 L1413.5 663.7 L1413 664 L1412.5 664.1 L1412 664.6 L1411.5 664.7 L1411 666.3 L1410.5 665 L1410 666.7 L1409.5 665.1 L1409 666.3 L1408.5 665.2 L1408 666.3 L1407.5 665.2 L1407 665.8 L1406.5 665.5 L1406 666.1 L1405.5 665.9 L1405 667 L1404.5 665.9 L1404 666 L1403.5 668.1 L1403 671.5 L1402.5 667.6 L1402 668.1 L1401.5 668.6 L1401 669.7 L1400.5 669.4 L1400 670.6 L1399.5 674.4 L1399 677.7 L1398.5 677.8 L1398 679.6 L1397.5 682.8 L1397 686.9 L1396.5 683.2 L1396 684.6 L1395.5 684 L1395 685.7 L1394.5 684.2 L1394 685 L1393.5 684.8 L1393 685.5 L1392.5 686.2 L1392 688.8 L1391.5 685.7 L1391 686 L1390.5 684.9 L1390 685.1 L1389.5 684.4 L1389 684.8 L1388.5 685.1 L1388 688.7 L1387.5 682.9 L1387 682.9 L1386.5 682.3 L1386 682.6 L1385.5 681.9 L1385 682.8 L1384.5 681 L1384 682.9 L1383.5 678.4 L1383 679.9 L1382.5 676 L1382 677.3 L1381.5 673.6 L1381 674.6 L1380.5 676.6 L1380 678.6 L1379.5 682.6 L1379 684.6 L1378.5 688.8 L1378 691.4 L1377.5 684.9 L1377 685.2 L1376.5 681.6 L1376 682.5 L1375.5 693 L1375 693.3 L1374.5 699.1 L1374 699.5 L1373.5 697.2 L1373 699 L1372.5 694.9 L1372 697 L1371.5 692.3 L1371 694.4 L1370.5 689.6 L1370 691.1 L1369.5 687.5 L1369 690.2 L1368.5 684.7 L1368 686.7 L1367.5 681.6 L1367 682.1 L1366.5 679.5 L1366 681.1 L1365.5 676.6 L1365 677.3 L1364.5 673.8 L1364 674.2 L1363.5 671.1 L1363 671.2 L1362.5 668.8 L1362 669.3 L1361.5 666.2 L1361 666.8 L1360.5 663.6 L1360 664 L1359.5 661 L1359 661.3 L1358.5 658.4 L1358 658.7 L1357.5 656.4 L1357 656.8 L1356.5 654.4 L1356 654.6 L1355.5 652.5 L1355 653.1 L1354.5 650.5 L1354 650.9 L1353.5 648.4 L1353 648.6 L1352.5 647.2 L1352 647.6 L1351.5 648.8 L1351 649.6 L1350.5 650.4 L1350 651.3 L1349.5 670.1 L1349 673.4 L1348.5 679.6 L1348 680.2 L1347.5 672.1 L1347 672.7 L1346.5 664.6 L1346 665.6 L1345.5 642.4 L1345 642.9 L1344.5 623.4 L1344 623.6 L1343.5 623.7 L1343 624.2 L1342.5 623.7 L1342 623.9 L1341.5 624.1 L1341 624.7 L1340.5 624.1 L1340 624.5 L1339.5 624.3 L1339 624.3 L1338.5 624.8 L1338 625.3 L1337.5 625.2 L1337 625.9 L1336.5 625.3 L1336 625.5 L1335.5 625.8 L1335 626.7 L1334.5 626 L1334 626.6 L1333.5 626.4 L1333 627.2 L1332.5 626.7 L1332 627.5 L1331.5 626.8 L1331 626.9 L1330.5 627.4 L1330 628.3 L1329.5 627.3 L1329 627.6 L1328.5 627.9 L1328 628.8 L1327.5 628 L1327 628.5 L1326.5 625.6 L1326 626.5 L1325.5 621.9 L1325 622.3 L1324.5 618.5 L1324 619.3 L1323.5 615.1 L1323 615.9 L1322.5 611.8 L1322 612.2 L1321.5 608.8 L1321 609.2 L1320.5 605.8 L1320 606.3 L1319.5 603.7 L1319 603.7 L1318.5 602.2 L1318 603.5 L1317.5 600.1 L1317 601 L1316.5 598 L1316 598.5 L1315.5 596.3 L1315 597.1 L1314.5 594.3 L1314 595.1 L1313.5 592.9 L1313 595 L1312.5 590.5 L1312 591.6 L1311.5 589.1 L1311 591.6 L1310.5 586.6 L1310 587.9 L1309.5 584.2 L1309 584.6 L1308.5 582.3 L1308 583.2 L1307.5 580.4 L1307 581.2 L1306.5 578.1 L1306 578.5 L1305.5 577.1 L1305 579.6 L1304.5 574.1 L1304 574.4 L1303.5 572.2 L1303 572.8 L1302.5 570.3 L1302 571.1 L1301.5 568.1 L1301 568.5 L1300.5 566.3 L1300 566.5 L1299.5 566.4 L1299 568.6 L1298.5 565 L1298 565.8 L1297.5 564.2 L1297 564.5 L1296.5 563.9 L1296 565.2 L1295.5 562.8 L1295 563.2 L1294.5 562 L1294 562.1 L1293.5 561.8 L1293 563 L1292.5 560.6 L1292 560.7 L1291.5 560.4 L1291 561.7 L1290.5 560.8 L1290 564.8 L1289.5 559.7 L1289 562.8 L1288.5 559.4 L1288 563.1 L1287.5 557.4 L1287 558.2 L1286.5 556.5 L1286 556.9 L1285.5 556 L1285 557 L1284.5 555.3 L1284 556.1 L1283.5 554.5 L1283 554.9 L1282.5 553.9 L1282 554.5 L1281.5 554.1 L1281 556.3 L1280.5 553.9 L1280 557 L1279.5 552.3 L1279 553.2 L1278.5 551.6 L1278 552.3 L1277.5 550.9 L1277 551.2 L1276.5 550.9 L1276 552.8 L1275.5 549.8 L1275 550.4 L1274.5 549.3 L1274 550.1 L1273.5 548.6 L1273 549.4 L1272.5 549.3 L1272 553 L1271.5 547.6 L1271 548.8 L1270.5 546.9 L1270 547.7 L1269.5 547.1 L1269 549.9 L1268.5 547.1 L1268 551.4 L1267.5 545.3 L1267 547 L1266.5 545.9 L1266 551.4 L1265.5 543.3 L1265 545.1 L1264.5 541.6 L1264 542.2 L1263.5 540.9 L1263 542.2 L1262.5 539.8 L1262 540.9 L1261.5 540.3 L1261 545.1 L1260.5 538.4 L1260 541.1 L1259.5 537.5 L1259 538.7 L1258.5 537.2 L1258 538.3 L1257.5 536.8 L1257 537.4 L1256.5 537.9 L1256 541.4 L1255.5 536.6 L1255 537.4 L1254.5 536.2 L1254 536.7 L1253.5 536.1 L1253 536.7 L1252.5 536.2 L1252 536.7 L1251.5 536.9 L1251 538.8 L1250.5 536.4 L1250 536.6 L1249.5 537.3 L1249 539 L1248.5 538.1 L1248 541.2 L1247.5 537.2 L1247 537.9 L1246.5 537.9 L1246 539.5 L1245.5 539.9 L1245 545.1 L1244.5 538.5 L1244 538.6 L1243.5 539.2 L1243 539.4 L1242.5 539.9 L1242 540.3 L1241.5 540.6 L1241 540.9 L1240.5 541.3 L1240 541.7 L1239.5 539.6 L1239 539.7 L1238.5 537.2 L1238 538.4 L1237.5 534.1 L1237 535.1 L1236.5 530.9 L1236 531.4 L1235.5 529.1 L1235 534 L1234.5 522.4 L1234 522.5 L1233.5 517.9 L1233 518.1 L1232.5 513.8 L1232 515.3 L1231.5 511 L1231 511.4 L1230.5 519.3 L1230 522.8 L1229.5 525.5 L1229 527.3 L1228.5 532.6 L1228 534.9 L1227.5 538.9 L1227 539.5 L1226.5 544 L1226 544.3 L1225.5 546.8 L1225 547.5 L1224.5 550.5 L1224 553.7 L1223.5 551.9 L1223 552.3 L1222.5 552.5 L1222 552.7 L1221.5 546.6 L1221 550.9 L1220.5 537.7 L1220 539.3 L1219.5 530.1 L1219 531.6 L1218.5 522.1 L1218 522.8 L1217.5 514.2 L1217 514.4 L1216.5 506.9 L1216 507.9 L1215.5 500.5 L1215 501 L1214.5 498.6 L1214 500.7 L1213.5 495.2 L1213 495.6 L1212.5 493.7 L1212 496.7 L1211.5 491.7 L1211 493.7 L1210.5 500.1 L1210 500.7 L1209.5 504.7 L1209 506.7 L1208.5 506.6 L1208 508.4 L1207.5 509.3 L1207 512.7 L1206.5 507.8 L1206 511 L1205.5 493.5 L1205 497.2 L1204.5 479.8 L1204 481.2 L1203.5 475.1 L1203 477.6 L1202.5 469 L1202 469.8 L1201.5 463.7 L1201 464.3 L1200.5 458.2 L1200 458.5 L1199.5 474 L1199 476.5 L1198.5 488.3 L1198 489.6 L1197.5 498.3 L1197 498.7 L1196.5 491.3 L1196 492.7 L1195.5 484 L1195 486.3 L1194.5 476.2 L1194 478 L1193.5 468.5 L1193 469.8 L1192.5 460.7 L1192 461.6 L1191.5 459.3 L1191 461.5 L1190.5 458.9 L1190 459 L1189.5 459.6 L1189 460.1 L1188.5 466.9 L1188 468.5 L1187.5 474.3 L1187 475.2 L1186.5 481.7 L1186 482.1 L1185.5 490.8 L1185 494.9 L1184.5 487.9 L1184 488.7 L1183.5 482.5 L1183 483.2 L1182.5 476.9 L1182 477.2 L1181.5 472.4 L1181 474.9 L1180.5 468 L1180 468.8 L1179.5 465.3 L1179 466.1 L1178.5 463 L1178 464.6 L1177.5 460.3 L1177 461.9 L1176.5 457.4 L1176 458.2 L1175.5 456.4 L1175 461.3 L1174.5 454.4 L1174 454.7 L1173.5 460.4 L1173 460.9 L1172.5 466.5 L1172 467.2 L1171.5 472.8 L1171 474.4 L1170.5 474.6 L1170 476.8 L1169.5 476.3 L1169 481 L1168.5 474.9 L1168 475.5 L1167.5 476.6 L1167 479.8 L1166.5 476.1 L1166 477 L1165.5 475.8 L1165 476.1 L1164.5 474.8 L1164 475.4 L1163.5 473.5 L1163 473.9 L1162.5 472.1 L1162 472.3 L1161.5 471.6 L1161 473.5 L1160.5 469.8 L1160 470.4 L1159.5 466.6 L1159 467.2 L1158.5 462.7 L1158 463.5 L1157.5 459 L1157 460.7 L1156.5 454.9 L1156 456.6 L1155.5 452.5 L1155 452.9 L1154.5 452.2 L1154 452.3 L1153.5 452 L1153 452.4 L1152.5 452.6 L1152 455 L1151.5 452.4 L1151 454.8 L1150.5 451.5 L1150 452.5 L1149.5 449.6 L1149 450.1 L1148.5 447.7 L1148 447.9 L1147.5 447.2 L1147 450.3 L1146.5 444.9 L1146 446.7 L1145.5 443.3 L1145 445.4 L1144.5 442.1 L1144 442.2 L1143.5 444.1 L1143 445 L1142.5 446.5 L1142 449 L1141.5 447.6 L1141 448.6 L1140.5 449.7 L1140 453.3 L1139.5 447.9 L1139 448.3 L1138.5 448.7 L1138 452.4 L1137.5 449.5 L1137 450.9 L1136.5 453.5 L1136 455 L1135.5 457.2 L1135 458.2 L1134.5 462.1 L1134 465.2 L1133.5 465 L1133 465.7 L1132.5 468.6 L1132 469.5 L1131.5 472.2 L1131 473 L1130.5 480.2 L1130 480.6 L1129.5 494.7 L1129 495.6 L1128.5 495.4 L1128 496.2 L1127.5 497.4 L1127 501.2 L1126.5 497 L1126 498 L1125.5 501 L1125 504.7 L1124.5 503 L1124 503.6 L1123.5 506.5 L1123 507 L1122.5 510.7 L1122 511.6 L1121.5 516.7 L1121 522 L1120.5 518.8 L1120 519.6 L1119.5 522.5 L1119 523.4 L1118.5 524.3 L1118 524.7 L1117.5 527.3 L1117 530.1 L1116.5 529.2 L1116 531.6 L1115.5 530.1 L1115 530.2 L1114.5 532.2 L1114 533.1 L1113.5 532.7 L1113 533.5 L1112.5 533.1 L1112 533.2 L1111.5 533.8 L1111 534.4 L1110.5 534.7 L1110 535.9 L1109.5 539.2 L1109 539.9 L1108.5 543.6 L1108 543.9 L1107.5 546.1 L1107 546.7 L1106.5 546.2 L1106 547 L1105.5 547.3 L1105 550.9 L1104.5 546.1 L1104 546.7 L1103.5 546.9 L1103 549.6 L1102.5 546.5 L1102 548 L1101.5 546 L1101 546.4 L1100.5 546.9 L1100 549.6 L1099.5 546.4 L1099 547.9 L1098.5 546.2 L1098 547.1 L1097.5 546.2 L1097 547.1 L1096.5 546.3 L1096 547.5 L1095.5 546 L1095 546.6 L1094.5 546.8 L1094 548.9 L1093.5 546.9 L1093 548.9 L1092.5 546.3 L1092 546.4 L1091.5 546.7 L1091 547.4 L1090.5 546.6 L1090 547.1 L1089.5 547.3 L1089 548.9 L1088.5 547.7 L1088 549.3 L1087.5 548 L1087 548.4 L1086.5 549.8 L1086 552.4 L1085.5 549.6 L1085 549.9 L1084.5 552 L1084 555.6 L1083.5 551.8 L1083 553.1 L1082.5 551.9 L1082 552.6 L1081.5 552.7 L1081 555.7 L1080.5 552 L1080 553.8 L1079.5 552.5 L1079 556 L1078.5 551.2 L1078 552.2 L1077.5 550.7 L1077 551.2 L1076.5 550.4 L1076 550.7 L1075.5 551.3 L1075 554.1 L1074.5 551.3 L1074 554.5 L1073.5 550.1 L1073 551.2 L1072.5 550.6 L1072 553.3 L1071.5 549.5 L1071 550.1 L1070.5 550.7 L1070 554.2 L1069.5 550.8 L1069 554.9 L1068.5 549 L1068 549.2 L1067.5 549.1 L1067 549.7 L1066.5 549.1 L1066 549.8 L1065.5 549.2 L1065 550.4 L1064.5 549.2 L1064 550.4 L1063.5 549 L1063 550.2 L1062.5 548.7 L1062 549.2 L1061.5 548.8 L1061 549.7 L1060.5 549.2 L1060 551.2 L1059.5 548.3 L1059 548.8 L1058.5 549.5 L1058 552.9 L1057.5 548.5 L1057 550.2 L1056.5 547.9 L1056 548.5 L1055.5 547.7 L1055 548.2 L1054.5 547.4 L1054 547.5 L1053.5 547.9 L1053 549.7 L1052.5 547.4 L1052 548.4 L1051.5 547.3 L1051 548.4 L1050.5 547 L1050 547.8 L1049.5 546.9 L1049 547.8 L1048.5 546.6 L1048 547.5 L1047.5 547 L1047 549.3 L1046.5 546 L1046 546.4 L1045.5 547 L1045 550.1 L1044.5 546.6 L1044 549.2 L1043.5 545.9 L1043 547.6 L1042.5 545.3 L1042 546 L1041.5 544.8 L1041 545 L1040.5 545.9 L1040 548.9 L1039.5 545.6 L1039 548.5 L1038.5 544.4 L1038 545.7 L1037.5 543.1 L1037 544.4 L1036.5 541.5 L1036 542 L1035.5 540.3 L1035 541 L1034.5 538.6 L1034 539 L1033.5 537.1 L1033 537.8 L1032.5 535.5 L1032 536.3 L1031.5 534.1 L1031 535.2 L1030.5 532.7 L1030 533.5 L1029.5 531.3 L1029 531.9 L1028.5 529.9 L1028 530 L1027.5 529 L1027 529.9 L1026.5 528.5 L1026 528.9 L1025.5 528.7 L1025 529.6 L1024.5 528.8 L1024 529.8 L1023.5 528.9 L1023 530.5 L1022.5 529.7 L1022 533 L1021.5 529.5 L1021 532.4 L1020.5 528.3 L1020 528.9 L1019.5 527.8 L1019 527.9 L1018.5 528.9 L1018 532.1 L1017.5 528.4 L1017 531.2 L1016.5 527.2 L1016 527.7 L1015.5 527.3 L1015 528.7 L1014.5 529.1 L1014 529.9 L1013.5 531.5 L1013 533.3 L1012.5 530.3 L1012 530.4 L1011.5 528.7 L1011 531.9 L1010.5 525.6 L1010 528.5 L1009.5 522 L1009 523.7 L1008.5 516.9 L1008 517.8 L1007.5 508.7 L1007 511.2 L1006.5 506.6 L1006 507 L1005.5 509.2 L1005 511 L1004.5 510.6 L1004 511.3 L1003.5 512.5 L1003 513.2 L1002.5 513.7 L1002 513.9 L1001.5 515.5 L1001 516.3 L1000.5 517 L1000 517.8 L999.5 519.4 L999 522.4 L998.5 520.3 L998 521.9 L997.5 521.2 L997 521.4 L996.5 522.8 L996 523.3 L995.5 525.1 L995 527.7 L994.5 525.7 L994 526 L993.5 527.1 L993 527.3 L992.5 528.7 L992 529.2 L991.5 530.7 L991 532.5 L990.5 532.6 L990 533.3 L989.5 535.3 L989 537 L988.5 537 L988 537.3 L987.5 539.7 L987 540.6 L986.5 542 L986 543.1 L985.5 543.9 L985 543.9 L984.5 546.7 L984 547.6 L983.5 548.8 L983 549.3 L982.5 551 L982 551.1 L981.5 555.1 L981 558.3 L980.5 565.4 L980 571.7 L979.5 568.6 L979 570.3 L978.5 568.2 L978 568.9 L977.5 568 L977 568.2 L976.5 568.2 L976 569 L975.5 568.2 L975 569 L974.5 568.1 L974 568.5 L973.5 568.1 L973 568.7 L972.5 568 L972 568.5 L971.5 567.9 L971 567.9 L970.5 568.3 L970 569.3 L969.5 567.9 L969 568.1 L968.5 568.3 L968 569.3 L967.5 567.9 L967 568.2 L966.5 567.6 L966 567.6 L965.5 567.6 L965 568.1 L964.5 567.3 L964 567.6 L963.5 567.3 L963 567.8 L962.5 567 L962 567.3 L961.5 567 L961 567.5 L960.5 567 L960 568 L959.5 566.7 L959 567.5 L958.5 566.7 L958 567.2 L957.5 570 L957 570.1 L956.5 573.9 L956 574.8 L955.5 577.2 L955 577.8 L954.5 580.5 L954 580.6 L953.5 584 L953 584.1 L952.5 587.6 L952 587.8 L951.5 590.9 L951 591.2 L950.5 593.9 L950 594.4 L949.5 597.1 L949 598.1 L948.5 599.9 L948 600.3 L947.5 602.9 L947 603.4 L946.5 606.2 L946 607.5 L945.5 609 L945 609.6 L944.5 612.2 L944 613.2 L943.5 614.9 L943 615.4 L942.5 618.1 L942 618.9 L941.5 620.4 L941 621.2 L940.5 622.4 L940 623.2 L939.5 624.4 L939 625.3 L938.5 626.1 L938 626.3 L937.5 628.5 L937 629.3 L936.5 630.7 L936 632.2 L935.5 632.6 L935 633.9 L934.5 634.3 L934 634.8 L933.5 636.4 L933 637.2 L932.5 638.4 L932 639.2 L931.5 639.8 L931 640.7 L930.5 641.2 L930 642.3 L929.5 642.9 L929 645.1 L928.5 644.2 L928 646.4 L927.5 645.3 L927 647.2 L926.5 647 L926 650 L925.5 648.1 L925 650.8 L924.5 648.5 L924 649 L923.5 650 L923 651.3 L922.5 651.4 L922 653 L921.5 652.5 L921 653.6 L920.5 653.6 L920 654.4 L919.5 654.7 L919 655.3 L918.5 655.8 L918 656.1 L917.5 657 L917 657.1 L916.5 658.2 L916 658.4 L915.5 659.4 L915 659.7 L914.5 661 L914 662 L913.5 661.8 L913 661.8 L912.5 663.2 L912 663.8 L911.5 664.5 L911 665.2 L910.5 665.6 L910 666.4 L909.5 667.4 L909 669.4 L908.5 667.9 L908 668.3 L907.5 669 L907 669.2 L906.5 671.9 L906 676 L905.5 671.6 L905 672.3 L904.5 673.4 L904 675.6 L903.5 673.8 L903 674.1 L902.5 676.1 L902 678.8 L901.5 676.5 L901 676.9 L900.5 678.1 L900 678.7 L899.5 680.6 L899 683.8 L898.5 680.9 L898 681.2 L897.5 682.3 L897 682.6 L896.5 684.4 L896 686.4 L895.5 685.4 L895 686.2 L894.5 687.4 L894 689.5 L893.5 688.3 L893 689.2 L892.5 689.7 L892 690.4 L891.5 692.2 L891 695.4 L890.5 693.6 L890 696.9 L889.5 694.5 L889 700.2 L888.5 692 L888 692.6 L887.5 691.7 L887 691.9 L886.5 691.7 L886 692.2 L885.5 691.5 L885 692.1 L884.5 691.7 L884 693.4 L883.5 691.2 L883 692.1 L882.5 690.8 L882 691.5 L881.5 690.1 L881 690.3 L880.5 690.8 L880 694.1 L879.5 690 L879 692.5 L878.5 688.6 L878 689 L877.5 689.4 L877 691.6 L876.5 691.3 L876 693.2 L875.5 692.6 L875 692.7 L874.5 696 L874 699.4 L873.5 698.7 L873 703.5 L872.5 699.1 L872 700.4 L871.5 701.3 L871 702.1 L870.5 703.8 L870 704.3 L869.5 707.4 L869 710.5 L868.5 708.7 L868 708.8 L867.5 711.5 L867 712.4 L866.5 711.7 L866 714.9 L865.5 709.3 L865 710.8 L864.5 707 L864 707.3 L863.5 705.5 L863 706.4 L862.5 705.1 L862 709 L861.5 700.1 L861 701 L860.5 696 L860 696.9 L859.5 693.8 L859 699 L858.5 688.3 L858 690 L857.5 684.3 L857 686 L856.5 682.9 L856 683.3 L855.5 686.8 L855 687.3 L854.5 691.5 L854 693.7 L853.5 695.6 L853 698.1 L852.5 698.9 L852 699.8 L851.5 703.2 L851 704.8 L850.5 705.5 L850 708.6 L849.5 706 L849 707.9 L848.5 707.1 L848 709.4 L847.5 707.7 L847 709.1 L846.5 709.4 L846 712.2 L845.5 709.5 L845 709.9 L844.5 711.2 L844 712.1 L843.5 712.5 L843 713 L842.5 714.9 L842 717.4 L841.5 715.5 L841 716 L840.5 717.5 L840 719.1 L839.5 722.4 L839 723.6 L838.5 728.6 L838 729 L837.5 735.1 L837 735.1 L836.5 741.9 L836 742.5 L835.5 745.6 L835 748.9 L834.5 745.2 L834 748.2 L833.5 743.9 L833 744.5 L832.5 744.1 L832 745.7 L831.5 743.6 L831 744.5 L830.5 745.3 L830 750.9 L829.5 743.3 L829 744.9 L828.5 742.7 L828 743.3 L827.5 742.6 L827 743.3 L826.5 743 L826 743.1 L825.5 743.7 L825 743.7 L824.5 745.3 L824 747.6 L823.5 745.2 L823 745.6 L822.5 746.4 L822 748.1 L821.5 746.4 L821 746.6 L820.5 749 L820 753.5 L819.5 748 L819 748.6 L818.5 747.3 L818 747.8 L817.5 747.6 L817 750.5 L816.5 745.7 L816 745.9 L815.5 745.3 L815 746.3 L814.5 744.2 L814 744.4 L813.5 743.5 L813 743.7 L812.5 744.4 L812 747.9 L811.5 742.9 L811 744.1 L810.5 743.9 L810 744.1 L809.5 746.6 L809 747 L808.5 750.6 L808 754.3 L807.5 753.3 L807 756.8 L806.5 755.2 L806 757.7 L805.5 757.2 L805 759.4 L804.5 759.7 L804 762.9 L803.5 760.8 L803 761.6 L802.5 763.3 L802 765 L801.5 764.9 L801 765 L800.5 763.2 L800 764.7 L799.5 759.5 L799 759.5 L798.5 756.5 L798 756.8 L797.5 753.6 L797 754.3 L796.5 750.8 L796 752.2 L795.5 747.1 L795 747.3 L794.5 744.3 L794 745.3 L793.5 745 L793 745.3 L792.5 746.4 L792 746.5 L791.5 748.8 L791 751 L790.5 750.8 L790 754.1 L789.5 752.3 L789 755.7 L788.5 752 L788 752.7 L787.5 751.8 L787 753.1 L786.5 751.1 L786 751.9 L785.5 750.4 L785 750.7 L784.5 750.2 L784 751.2 L783.5 749.6 L783 750.2 L782.5 750.2 L782 752.2 L781.5 749.8 L781 750 L780.5 750.2 L780 750.8 L779.5 750.5 L779 751.4 L778.5 750.6 L778 751.1 L777.5 750.5 L777 751.6 L776.5 747.4 L776 747.6 L775.5 744.8 L775 745.7 L774.5 742.7 L774 744.9 L773.5 739.6 L773 741.2 L772.5 736.2 L772 736.5 L771.5 740.2 L771 742.7 L770.5 744.7 L770 744.9 L769.5 750.3 L769 751 L768.5 750 L768 751.6 L767.5 748.3 L767 749.7 L766.5 748.5 L766 753.7 L765.5 744.9 L765 745.3 L764.5 743.3 L764 743.3 L763.5 740.8 L763 741.3 L762.5 735.1 L762 735.4 L761.5 729.8 L761 730.7 L760.5 724 L760 724.3 L759.5 719.1 L759 719.9 L758.5 715.1 L758 715.5 L757.5 711.3 L757 711.3 L756.5 708.5 L756 709.7 L755.5 705.1 L755 705.6 L754.5 702.2 L754 703.7 L753.5 699.3 L753 700.1 L752.5 696.9 L752 697.3 L751.5 694.7 L751 695.2 L750.5 692.4 L750 692.9 L749.5 690.1 L749 691.1 L748.5 687.5 L748 688.2 L747.5 685 L747 685.6 L746.5 685.3 L746 690.2 L745.5 684.5 L745 685.4 L744.5 685.8 L744 688.2 L743.5 686 L743 686.9 L742.5 686.8 L742 687.6 L741.5 686.6 L741 688.4 L740.5 684.9 L740 686 L739.5 684 L739 685.9 L738.5 682.1 L738 683.3 L737.5 680.3 L737 681.1 L736.5 678.5 L736 678.8 L735.5 678.2 L735 681.6 L734.5 675.4 L734 675.9 L733.5 673.8 L733 674.4 L732.5 673.5 L732 677.2 L731.5 671 L731 672.4 L730.5 668.8 L730 669 L729.5 669.7 L729 671.3 L728.5 671.3 L728 673.4 L727.5 674 L727 679.1 L726.5 673.4 L726 673.8 L725.5 675.5 L725 677.5 L724.5 671.6 L724 672.7 L723.5 669.5 L723 673.6 L722.5 664.5 L722 664.8 L721.5 661.7 L721 663.4 L720.5 659.8 L720 661.8 L719.5 660 L719 662.5 L718.5 660.3 L718 663.4 L717.5 659.3 L717 660.1 L716.5 659.1 L716 659.6 L715.5 660.8 L715 664.7 L714.5 660.1 L714 661.7 L713.5 661.2 L713 664.8 L712.5 660.6 L712 661.9 L711.5 661.7 L711 664.8 L710.5 661 L710 661.7 L709.5 661.3 L709 662.2 L708.5 661.5 L708 662 L707.5 662.4 L707 664.5 L706.5 662.3 L706 663.2 L705.5 662.5 L705 663.3 L704.5 663.1 L704 664.6 L703.5 663 L703 663.7 L702.5 663.1 L702 663.5 L701.5 663.8 L701 665.1 L700.5 664.2 L700 665.7 L699.5 664.3 L699 665.2 L698.5 664.4 L698 664.8 L697.5 665.7 L697 668.8 L696.5 664.2 L696 664.6 L695.5 664 L695 664.7 L694.5 664 L694 665.1 L693.5 663.2 L693 663.3 L692.5 663.3 L692 664.1 L691.5 663.2 L691 664.5 L690.5 662.5 L690 663.1 L689.5 662.3 L689 662.9 L688.5 662.1 L688 663.2 L687.5 661.9 L687 662 L686.5 662.1 L686 662.7 L685.5 663.1 L685 665.6 L684.5 662.3 L684 662.8 L683.5 662.8 L683 664.2 L682.5 663.5 L682 666.3 L681.5 663.1 L681 664.7 L680.5 662.8 L680 663.4 L679.5 662.9 L679 663.6 L678.5 663 L678 663.2 L677.5 664.5 L677 667.5 L676.5 664.4 L676 666.6 L675.5 663.9 L675 663.9 L674.5 665 L674 666.9 L673.5 665.9 L673 669.2 L672.5 665.5 L672 666.9 L671.5 666.2 L671 668.6 L670.5 666.8 L670 669.7 L669.5 666 L669 666.2 L668.5 667.1 L668 669.4 L667.5 667.5 L667 669.9 L666.5 666.9 L666 667.2 L665.5 667.6 L665 668.6 L664.5 670.1 L664 671.1 L663.5 673.7 L663 676 L662.5 675.8 L662 676 L661.5 679.2 L661 680.3 L660.5 682.1 L660 682.9 L659.5 684.4 L659 685.3 L658.5 685.6 L658 689 L657.5 685.2 L657 686.9 L656.5 684.8 L656 685.1 L655.5 684.6 L655 684.8 L654.5 684.4 L654 685.2 L653.5 683.9 L653 684.6 L652.5 683.4 L652 684.2 L651.5 682.8 L651 683.5 L650.5 682.3 L650 683 L649.5 681.7 L649 682 L648.5 681.4 L648 682.4 L647.5 680.8 L647 681.5 L646.5 680 L646 680.6 L645.5 678.4 L645 678.7 L644.5 677.2 L644 678.3 L643.5 676.5 L643 679.5 L642.5 673.9 L642 674.2 L641.5 672.8 L641 673.8 L640.5 692.8 L640 692.8 L639.5 698.9 L639 699.9 L638.5 698.3 L638 698.8 L637.5 697.8 L637 697.9 L636.5 694.6 L636 695.4 L635.5 691.4 L635 692.7 L634.5 687.6 L634 688.1 L633.5 684.7 L633 686.7 L632.5 681 L632 682.7 L631.5 676.8 L631 676.9 L630.5 673.6 L630 674.4 L629.5 671.3 L629 671.6 L628.5 670.1 L628 670.8 L627.5 668.9 L627 669.6 L626.5 667.6 L626 668.4 L625.5 666.1 L625 666.5 L624.5 664.8 L624 665.3 L623.5 663.4 L623 663.5 L622.5 661.7 L622 662.2 L621.5 659.8 L621 660.1 L620.5 658 L620 658.2 L619.5 656.3 L619 656.8 L618.5 653.7 L618 654 L617.5 650.5 L617 650.9 L616.5 647.5 L616 648.5 L615.5 644 L615 644.5 L614.5 644.7 L614 645.6 L613.5 646.9 L613 649.2 L612.5 683.3 L612 688.3 L611.5 676.4 L611 677.8 L610.5 671.1 L610 672.4 L609.5 667.6 L609 672.8 L608.5 650 L608 652.2 L607.5 623.8 L607 623.9 L606.5 623.8 L606 623.9 L605.5 623.8 L605 623.9 L604.5 623.7 L604 623.9 L603.5 623.8 L603 624 L602.5 623.8 L602 624.1 L601.5 623.7 L601 623.7 L600.5 623.7 L600 623.8 L599.5 624.2 L599 624.2 L598.5 625 L598 625.8 L597.5 625.2 L597 625.4 L596.5 625.6 L596 626 L595.5 626.1 L595 627 L594.5 626.3 L594 627 L593.5 626.4 L593 626.7 L592.5 626.6 L592 627.1 L591.5 626.8 L591 627.2 L590.5 627.1 L590 627.4 L589.5 625 L589 625.2 L588.5 622.5 L588 623.2 L587.5 619.5 L587 620 L586.5 616.8 L586 617.6 L585.5 613.8 L585 614.1 L584.5 610.9 L584 611 L583.5 608.2 L583 608.8 L582.5 605.6 L582 606.7 L581.5 602.6 L581 603.3 L580.5 599.7 L580 600.1 L579.5 598 L579 599.4 L578.5 596.3 L578 598.2 L577.5 594 L577 595.2 L576.5 591.7 L576 592 L575.5 589.8 L575 590.3 L574.5 588 L574 588.8 L573.5 585.9 L573 586.3 L572.5 584.4 L572 585.9 L571.5 582.3 L571 583.9 L570.5 580.1 L570 581 L569.5 578.5 L569 580.3 L568.5 576.1 L568 577 L567.5 575 L567 578.2 L566.5 571.9 L566 572.5 L565.5 570 L565 570.7 L564.5 567.9 L564 568.4 L563.5 566.2 L563 566.8 L562.5 566.2 L562 569 L561.5 564.1 L561 564.5 L560.5 563.2 L560 563.9 L559.5 562.6 L559 564.2 L558.5 561.6 L558 563.2 L557.5 560.3 L557 561.1 L556.5 559.8 L556 561.8 L555.5 558.2 L555 558.9 L554.5 557.1 L554 557.3 L553.5 556.4 L553 557.5 L552.5 555.2 L552 555.8 L551.5 555.7 L551 559.7 L550.5 553.1 L550 553.4 L549.5 552.7 L549 553.2 L548.5 552.1 L548 552.4 L547.5 551.9 L547 552.9 L546.5 551.5 L546 552.6 L545.5 550.8 L545 551.4 L544.5 550.2 L544 550.5 L543.5 550.2 L543 551.8 L542.5 549.6 L542 550.9 L541.5 548.9 L541 549.7 L540.5 549.4 L540 552.7 L539.5 547.9 L539 548.7 L538.5 548 L538 550.2 L537.5 546.8 L537 547.5 L536.5 546.9 L536 548.8 L535.5 545.7 L535 546.2 L534.5 545.3 L534 545.9 L533.5 544.2 L533 544.6 L532.5 543.1 L532 543.4 L531.5 542.2 L531 543.2 L530.5 541.9 L530 545 L529.5 540.5 L529 541.2 L528.5 541.7 L528 546 L527.5 540.8 L527 543.8 L526.5 540.4 L526 543.4 L525.5 539 L525 539.6 L524.5 538.7 L524 539.3 L523.5 539.1 L523 541.5 L522.5 540.3 L522 546.2 L521.5 537.8 L521 538.7 L520.5 537.9 L520 540 L519.5 536.8 L519 537.4 L518.5 538.1 L518 543.4 L517.5 536 L517 538.4 L516.5 536 L516 540.3 L515.5 535 L515 538.9 L514.5 532.6 L514 533 L513.5 531.7 L513 531.9 L512.5 533.1 L512 538.6 L511.5 529.8 L511 530 L510.5 528.3 L510 529.1 L509.5 527.9 L509 531.8 L508.5 525.3 L508 527.1 L507.5 525 L507 530.3 L506.5 525.7 L506 529.2 L505.5 526.8 L505 527.7 L504.5 529.6 L504 531.8 L503.5 531.5 L503 533 L502.5 533.4 L502 534.1 L501.5 536.3 L501 538.2 L500.5 537.6 L500 538 L499.5 540.1 L499 541.8 L498.5 542.2 L498 544.2 L497.5 545.4 L497 550.4 L496.5 542.5 L496 543.3 L495.5 536.9 L495 537.8 L494.5 530.8 L494 530.9 L493.5 526.4 L493 529.8 L492.5 519.9 L492 521.2 L491.5 516 L491 518 L490.5 518.2 L490 519.3 L489.5 521.5 L489 524.2 L488.5 523.3 L488 524.1 L487.5 526.5 L487 528.7 L486.5 531.3 L486 537 L485.5 535.3 L485 541.5 L484.5 538.9 L484 544.6 L483.5 540.7 L483 542 L482.5 544.1 L482 544.5 L481.5 539.3 L481 539.8 L480.5 525.9 L480 526.6 L479.5 512.7 L479 513.9 L478.5 504.5 L478 507.2 L477.5 495.1 L477 495.5 L476.5 486.8 L476 487.1 L475.5 478.8 L475 480.1 L474.5 489 L474 489.4 L473.5 501.6 L473 506.8 L472.5 504.2 L472 508.1 L471.5 495.3 L471 496.2 L470.5 487.6 L470 488.2 L469.5 479.7 L469 479.8 L468.5 476 L468 476.5 L467.5 476 L467 476.5 L466.5 476.5 L466 478.1 L465.5 476.2 L465 477.1 L464.5 475.9 L464 476.1 L463.5 477.9 L463 478.3 L462.5 483.1 L462 484.9 L461.5 487.8 L461 489.9 L460.5 491.9 L460 492.6 L459.5 490.7 L459 491.5 L458.5 483.7 L458 484.3 L457.5 476.5 L457 476.7 L456.5 471.3 L456 475.6 L455.5 463.2 L455 465 L454.5 459.3 L454 460 L453.5 464.7 L453 467.7 L452.5 468.3 L452 469.1 L451.5 472.5 L451 472.8 L450.5 477.1 L450 477.8 L449.5 481.1 L449 481.3 L448.5 481.8 L448 481.8 L447.5 482.7 L447 482.9 L446.5 483.8 L446 484.7 L445.5 485.2 L445 487.7 L444.5 486.3 L444 489.3 L443.5 486.1 L443 486.9 L442.5 483.4 L442 483.5 L441.5 479.2 L441 479.8 L440.5 477 L440 483 L439.5 470.3 L439 471 L438.5 467.2 L438 471.1 L437.5 462.3 L437 462.4 L436.5 462 L436 464.6 L435.5 460 L435 460.8 L434.5 459.4 L434 462 L433.5 459.2 L433 459.6 L432.5 462.5 L432 463.3 L431.5 466.2 L431 468.9 L430.5 468.4 L430 469.2 L429.5 468.9 L429 469.5 L428.5 467.7 L428 467.9 L427.5 467 L427 467.8 L426.5 466.1 L426 467 L425.5 465.8 L425 468.7 L424.5 465 L424 467.1 L423.5 464.5 L423 465.4 L422.5 464.9 L422 466.6 L421.5 464.4 L421 465 L420.5 464.3 L420 464.8 L419.5 465.1 L419 465.3 L418.5 468.3 L418 469 L417.5 471.1 L417 471.3 L416.5 474.4 L416 475.4 L415.5 476.6 L415 479.1 L414.5 476.8 L414 481.2 L413.5 475.1 L413 476.9 L412.5 474 L412 474.7 L411.5 473.5 L411 474.1 L410.5 472.9 L410 473.6 L409.5 472.1 L409 472.4 L408.5 472.5 L408 473.8 L407.5 472.1 L407 472.4 L406.5 472.4 L406 473.4 L405.5 472.2 L405 472.9 L404.5 472.2 L404 472.8 L403.5 476.8 L403 477 L402.5 484.8 L402 487.3 L401.5 490.2 L401 491.1 L400.5 488.7 L400 490.8 L399.5 485.9 L399 486.1 L398.5 483.9 L398 484.5 L397.5 482 L397 482.6 L396.5 478.8 L396 479.5 L395.5 474.8 L395 475.3 L394.5 470.8 L394 470.8 L393.5 469.1 L393 469.3 L392.5 474 L392 477.9 L391.5 475.7 L391 476 L390.5 479.2 L390 480.1 L389.5 482.3 L389 482.5 L388.5 487.4 L388 488.2 L387.5 498 L387 498.1 L386.5 509 L386 509.1 L385.5 518.6 L385 519.4 L384.5 526.3 L384 526.8 L383.5 534.4 L383 535.1 L382.5 536.1 L382 540.1 L381.5 535.4 L381 536.9 L380.5 535.4 L380 535.9 L379.5 536.1 L379 537.6 L378.5 537.6 L378 541.9 L377.5 536.2 L377 536.5 L376.5 538.7 L376 543.9 L375.5 537.1 L375 537.3 L374.5 538.9 L374 539.1 L373.5 540.8 L373 541.5 L372.5 542.6 L372 543.2 L371.5 544.3 L371 544.7 L370.5 546.7 L370 548.8 L369.5 547 L369 549.7 L368.5 546.4 L368 547.5 L367.5 546.1 L367 546.5 L366.5 546.4 L366 547.3 L365.5 547.3 L365 550.3 L364.5 546.5 L364 547.4 L363.5 547.4 L363 550.4 L362.5 546.5 L362 547.1 L361.5 546.7 L361 547.7 L360.5 547.4 L360 550.1 L359.5 546.4 L359 546.7 L358.5 546.7 L358 547.5 L357.5 547 L357 548.3 L356.5 547.4 L356 549.1 L355.5 549.4 L355 552.6 L354.5 549.6 L354 550.3 L353.5 551.3 L353 552.5 L352.5 552.2 L352 552.4 L351.5 553.3 L351 554.1 L350.5 552.9 L350 553.4 L349.5 553 L349 554.7 L348.5 552.2 L348 552.8 L347.5 552.2 L347 553.6 L346.5 551.5 L346 552.2 L345.5 550.9 L345 551.2 L344.5 551.6 L344 554.3 L343.5 551 L343 553.2 L342.5 549.8 L342 550.1 L341.5 550 L341 551.5 L340.5 549.3 L340 550.2 L339.5 548.8 L339 549.1 L338.5 548.6 L338 549.4 L337.5 548.4 L337 549.6 L336.5 547.9 L336 548.6 L335.5 548 L335 550.1 L334.5 546.9 L334 547 L333.5 546.7 L333 547.2 L332.5 547.8 L332 550.9 L331.5 547.5 L331 549.9 L330.5 548.1 L330 552 L329.5 546.6 L329 546.9 L328.5 547.1 L328 548.4 L327.5 546.8 L327 547.4 L326.5 546.6 L326 546.7 L325.5 547.8 L325 550.8 L324.5 547.6 L324 550.2 L323.5 547.8 L323 550.8 L322.5 547.6 L322 550.1 L321.5 547.5 L321 549.8 L320.5 546.8 L320 547.7 L319.5 546.7 L319 547.2 L318.5 546.6 L318 546.7 L317.5 546.6 L317 546.8 L316.5 546.6 L316 547.2 L315.5 546.2 L315 546.9 L314.5 545.8 L314 546.5 L313.5 545.4 L313 546.2 L312.5 544.7 L312 544.8 L311.5 545.5 L311 548.2 L310.5 544.5 L310 545.8 L309.5 543.9 L309 544.7 L308.5 544.2 L308 547 L307.5 543.2 L307 544.3 L306.5 543 L306 544.8 L305.5 542 L305 542.2 L304.5 542.5 L304 545 L303.5 541.7 L303 543.2 L302.5 541.1 L302 541.9 L301.5 540.8 L301 542.1 L300.5 540.3 L300 541.1 L299.5 540.2 L299 540.9 L298.5 540.8 L298 542.7 L297.5 537.9 L297 538.5 L296.5 535.5 L296 537.3 L295.5 532.1 L295 532.9 L294.5 529.6 L294 529.7 L293.5 529 L293 529.9 L292.5 528.3 L292 529.9 L291.5 526.7 L291 526.8 L290.5 527 L290 527.9 L289.5 526.6 L289 526.9 L288.5 526.6 L288 527.3 L287.5 526.4 L287 527 L286.5 527.5 L286 531 L285.5 526.1 L285 526.6 L284.5 526.3 L284 527.6 L283.5 526.1 L283 527.1 L282.5 526.5 L282 528.2 L281.5 526.5 L281 526.9 L280.5 527.5 L280 528.7 L279.5 527.8 L279 528 L278.5 528.6 L278 529 L277.5 529.4 L277 530.2 L276.5 529.8 L276 529.9 L275.5 529.5 L275 531.7 L274.5 526.5 L274 527.6 L273.5 523.4 L273 524.8 L272.5 517.9 L272 518.2 L271.5 514.7 L271 517.4 L270.5 516.4 L270 516.9 L269.5 518.2 L269 519.6 L268.5 518.8 L268 522.4 L267.5 518.3 L267 521.7 L266.5 518.7 L266 521.4 L265.5 519.1 L265 520 L264.5 520.1 L264 520.8 L263.5 521.5 L263 522.9 L262.5 522.2 L262 522.4 L261.5 523.7 L261 524.7 L260.5 524.8 L260 525.7 L259.5 526.5 L259 528.9 L258.5 526.6 L258 526.9 L257.5 527.7 L257 528.5 L256.5 528.8 L256 529.7 L255.5 530 L255 531.5 L254.5 531.4 L254 532.3 L253.5 533.7 L253 534.5 L252.5 536.2 L252 537 L251.5 538.6 L251 539.6 L250.5 540.9 L250 541.4 L249.5 543.4 L249 544.3 L248.5 546.3 L248 546.8 L247.5 549.2 L247 549.7 L246.5 552.5 L246 553.5 L245.5 559.7 L245 560.2 L244.5 566.9 L244 568.5 L243.5 568.3 L243 569.8 L242.5 569.1 L242 569.7 L241.5 570.3 L241 574.7 L240.5 568.3 L240 568.5 L239.5 568.2 L239 569.1 L238.5 567.9 L238 568.2 L237.5 567.9 L237 568.3 L236.5 567.9 L236 568.3 L235.5 567.9 L235 568.2 L234.5 567.9 L234 568.1 L233.5 568 L233 568.5 L232.5 567.8 L232 568.6 L231.5 567.7 L231 568.7 L230.5 567.1 L230 567.2 L229.5 566.9 L229 567.1 L228.5 566.7 L228 567.2 L227.5 566.3 L227 566.6 L226.5 566.2 L226 566.7 L225.5 565.8 L225 565.8 L224.5 566.1 L224 566.3 L223.5 567.8 L223 569.6 L222.5 568.8 L222 569.3 L221.5 572.6 L221 573 L220.5 576.9 L220 578.6 L219.5 580.8 L219 582.4 L218.5 584.1 L218 584.6 L217.5 588 L217 588.7 L216.5 590.1 L216 590.2 L215.5 591.9 L215 592.2 L214.5 593.7 L214 594.4 L213.5 595.3 L213 596 L212.5 597.3 L212 598.9 L211.5 598.6 L211 599.3 L210.5 600.5 L210 601.8 L209.5 603.2 L209 603.2 L208.5 606.7 L208 607.6 L207.5 609.8 L207 610.5 L206.5 612.8 L206 613.2 L205.5 616.2 L205 616.8 L204.5 619.8 L204 621.7 L203.5 622.5 L203 623.3 L202.5 625.8 L202 626.6 L201.5 628.9 L201 629.7 L200.5 631.9 L200 632.3 L199.5 635 L199 635.6 L198.5 636.8 L198 638.2 L197.5 638 L197 638.9 L196.5 640.2 L196 642.9 L195.5 640.8 L195 641.4 L194.5 642.1 L194 642.5 L193.5 644.1 L193 645.8 L192.5 645.2 L192 646.2 L191.5 647.6 L191 650.7 L190.5 648.1 L190 649.3 L189.5 650.2 L189 652.7 L188.5 650.8 L188 651.5 L187.5 652.1 L187 652.5 L186.5 654.5 L186 657.1 L185.5 654.9 L185 655.2 L184.5 657.1 L184 659.2 L183.5 657.9 L183 658.7 L182.5 659.3 L182 660.2 L181.5 660.6 L181 661.3 L180.5 661.8 L180 661.8 L179.5 664.2 L179 666.7 L178.5 666 L178 669.5 L177.5 666.7 L177 668.3 L176.5 667.6 L176 668 L175.5 669.6 L175 671.5 L174.5 672.3 L174 677.3 L173.5 672 L173 672.9 L172.5 673.1 L172 673.8 L171.5 674.1 L171 675.4 L170.5 674.7 L170 675.2 L169.5 675.6 L169 676.4 L168.5 676.5 L168 677.4 L167.5 677.8 L167 679.7 L166.5 678 L166 678.4 L165.5 678.7 L165 678.8 L164.5 679.9 L164 680.6 L163.5 681 L163 682.2 L162.5 683.3 L162 688 L161.5 682.2 L161 682.6 L160.5 684.1 L160 687.3 L159.5 683.5 L159 684 L158.5 684.2 L158 684.6 L157.5 686.2 L157 690 L156.5 685.7 L156 686.7 L155.5 686.4 L155 687.6 L154.5 687.1 L154 688.5 L153.5 687.4 L153 688.2 L152.5 688.9 L152 691.6 L151.5 689.6 L151 692.4 L150.5 689 L150 689.2 L149.5 690.7 L149 693.3 L148.5 690.4 L148 691 L147.5 692 L147 695.6 L146.5 693.1 L146 698 L145.5 693 L145 696.6 L144.5 692.1 L144 692.9 L143.5 693 L143 694.7 L142.5 693.2 L142 694.5 L141.5 693.4 L141 694 L140.5 694.8 L140 697.9 L139.5 694.2 L139 694.9 L138.5 694.7 L138 695.4 L137.5 696.7 L137 696.9 L136.5 700.6 L136 703 L135.5 702.8 L135 703.1 L134.5 705.7 L134 705.9 L133.5 709.8 L133 712.7 L132.5 711.8 L132 712.3 L131.5 712.1 L131 712.7 L130.5 708.7 L130 710.1 L129.5 704.6 L129 705.1 L128.5 702.8 L128 707.7 L127.5 697.5 L127 698.9 L126.5 693.4 L126 694 L125.5 690.1 L125 691.3 L124.5 689.5 L124 693.9 L123.5 685.8 L123 686.4 L122.5 683.8 L122 684.3 L121.5 683.1 L121 684.5 L120.5 685.9 L120 687.3 L119.5 689.8 L119 693.7 L118.5 691.4 L118 692.2 L117.5 694.8 L117 696.9 L116.5 697.1 L116 697.9 L115.5 700 L115 703 L114.5 701.5 L114 704 L113.5 703.2 L113 705.9 L112.5 704.4 L112 706.1 L111.5 706.6 L111 709.6 L110.5 707.2 L110 712.1 L109.5 705 L109 705.8 L108.5 705 L108 706.8 L107.5 704.1 L107 704.9 L106.5 703.5 L106 703.8 L105.5 703 L105 703.3 L104.5 703.8 L104 706.9 L103.5 702.2 L103 702.2 L102.5 716 L102 716 L101.5 729.8 L101 729.9 L100.5 743.5 L100 743.5 L99.5 754.4 L99 754.6 L98.5 739 L98 739 L97.5 723.6 L97 723.6 L96.5 708.2 L96 708.3 L95.5 692.8 L95 692.9 L94.5 689 L94 689 L93.5 702.8 L93 702.8 L92.5 716.5 L92 716.7 L91.5 730.3 L91 730.5 L90.5 744 L90 744.1 L89.5 757.8 L89 757.9 L88.5 746.5 L88 746.6 L87.5 732.3 L87 732.4 L86.5 718.3 L86 718.5 L85.5 704.2 L85 704.2 L84.5 695 L84 695.1 L83.5 705.2 L83 705.3 L82.5 715.5 L82 715.6 L81.5 725.7 L81 725.7 L80.5 732.3 L80 732.5 L79.5 724.2 L79 724.2 L78.5 716.1 L78 716.2 L77.5 709.8 L77 709.9 L76.5 720.4 L76 720.4 L75.5 731.1 L75 731.2 L74.5 741.6 L74 741.7 L73.5 750.5 L73 750.6 L72.5 743.4 L72 743.5 L71.5 736.3 L71 736.4Z" fill="url(#pinkpat)" stroke="none"/>
<path d="M70 729.1 L73.1 751.2 L77.1 708.7 L80.2 733.9 L84.2 692.9 L88.9 759.1 L94.4 683.5 L99.1 755.9 L103.1 700.8 L104.5 680" fill="none" stroke="#f8078c" stroke-width="4.2" stroke-linejoin="round" stroke-linecap="round"/>
<path d="M225 563.5 L241 564.5" stroke="#ff9ed2" stroke-width="2" opacity="0.9"/>
<path d="M592 622 L607.5 621.5" stroke="#ff9ed2" stroke-width="2" opacity="0.9"/>
<path d="M960 563.6 L976.7 563.6" stroke="#ff9ed2" stroke-width="2" opacity="0.9"/>
<path d="M1327 622 L1344 621" stroke="#ff9ed2" stroke-width="2" opacity="0.9"/>
<path d="M1696 563 L1714 563.5" stroke="#ff9ed2" stroke-width="2" opacity="0.9"/>
<text x="66" y="51" text-anchor="end" fill="#ffffb8">400 V</text>
<text x="66" y="87" text-anchor="end" fill="#ffffb8">300 V</text>
<text x="66" y="130" text-anchor="end" fill="#ffffb8">200 V</text>
<text x="66" y="174" text-anchor="end" fill="#ffffb8">100 V</text>
<text x="66" y="217" text-anchor="end" fill="#ffffb8">0 V</text>
<text x="66" y="261" text-anchor="end" fill="#ffffb8">-100 V</text>
<text x="66" y="304" text-anchor="end" fill="#ffffb8">-200 V</text>
<text x="66" y="348" text-anchor="end" fill="#ffffb8">-300 V</text>
<text x="66" y="384" text-anchor="end" fill="#ffffb8">-400 V</text>
<text x="66" y="432" text-anchor="end" fill="#ffb8e0">800 mA</text>
<text x="66" y="468" text-anchor="end" fill="#ffb8e0">600 mA</text>
<text x="66" y="511" text-anchor="end" fill="#ffb8e0">400 mA</text>
<text x="66" y="555" text-anchor="end" fill="#ffb8e0">200 mA</text>
<text x="66" y="598" text-anchor="end" fill="#ffb8e0">0 mA</text>
<text x="66" y="642" text-anchor="end" fill="#ffb8e0">-200 mA</text>
<text x="66" y="685" text-anchor="end" fill="#ffb8e0">-400 mA</text>
<text x="66" y="729" text-anchor="end" fill="#ffb8e0">-600 mA</text>
<text x="66" y="765" text-anchor="end" fill="#ffb8e0">-800 mA</text>
<text x="70" y="400" text-anchor="start" fill="#ffffb8">-25 ms</text>
<text x="70" y="781" text-anchor="start" fill="#ffb8e0">-25 ms</text>
<text x="254" y="400" text-anchor="middle" fill="#ffffb8">-20 ms</text>
<text x="254" y="781" text-anchor="middle" fill="#ffb8e0">-20 ms</text>
<text x="438" y="400" text-anchor="middle" fill="#ffffb8">-15 ms</text>
<text x="438" y="781" text-anchor="middle" fill="#ffb8e0">-15 ms</text>
<text x="622" y="400" text-anchor="middle" fill="#ffffb8">-10 ms</text>
<text x="622" y="781" text-anchor="middle" fill="#ffb8e0">-10 ms</text>
<text x="806" y="400" text-anchor="middle" fill="#ffffb8">-5 ms</text>
<text x="806" y="781" text-anchor="middle" fill="#ffb8e0">-5 ms</text>
<text x="990" y="400" text-anchor="middle" fill="#ffffb8">0 ps</text>
<text x="990" y="781" text-anchor="middle" fill="#ffb8e0">0 ps</text>
<text x="1174" y="400" text-anchor="middle" fill="#ffffb8">5 ms</text>
<text x="1174" y="781" text-anchor="middle" fill="#ffb8e0">5 ms</text>
<text x="1358" y="400" text-anchor="middle" fill="#ffffb8">10 ms</text>
<text x="1358" y="781" text-anchor="middle" fill="#ffb8e0">10 ms</text>
<text x="1542" y="400" text-anchor="middle" fill="#ffffb8">15 ms</text>
<text x="1542" y="781" text-anchor="middle" fill="#ffb8e0">15 ms</text>
<text x="1726" y="400" text-anchor="middle" fill="#ffffb8">20 ms</text>
<text x="1726" y="781" text-anchor="middle" fill="#ffb8e0">20 ms</text>
<text x="1909" y="400" text-anchor="end" fill="#ffffb8">25 ms</text>
<text x="1909" y="781" text-anchor="end" fill="#ffb8e0">25 ms</text>
<rect x="53" y="199" width="16.5" height="11" rx="2" fill="#ffffb0"/>
<rect x="58" y="211" width="12" height="2" fill="#ffffb0"/>
<text x="61.5" y="208" font-size="9" text-anchor="middle" fill="#111">M1</text>
<rect x="53" y="580" width="16.5" height="11" rx="2" fill="#ffa8d8"/>
<rect x="59.5" y="592" width="10.5" height="2" fill="#ffa8d8"/>
<text x="61.5" y="589" font-size="9" text-anchor="middle" fill="#111">M2</text>
<path d="M990.5 386 L994 393 L987 393Z" fill="#ffffb0"/>
<path d="M990.5 767 L994 774 L987 774Z" fill="#ffa8d8"/>
<rect x="4" y="799" width="97" height="49" fill="#444"/>
<rect x="4" y="799" width="97" height="16" fill="#ffffaa"/>
<text x="7.5" y="812" font-size="13" fill="#000">M1</text>
<text x="99.5" y="829" font-size="13" text-anchor="end" fill="#fff">100 V/div</text>
<text x="99.5" y="844" font-size="13" text-anchor="end" fill="#fff">5.00 ms/div</text>
<rect x="103" y="798" width="99" height="50" fill="#1e8fff"/>
<rect x="105" y="815" width="95" height="31" fill="#2b4a66"/>
<rect x="105" y="799" width="96" height="16" fill="#ffa8d4"/>
<text x="107.5" y="812" font-size="13" fill="#000">M2</text>
<text x="199.5" y="829" font-size="13" text-anchor="end" fill="#fff">200 mA/div</text>
<text x="199.5" y="844" font-size="13" text-anchor="end" fill="#fff">5.00 ms/div</text>
<rect x="204.5" y="799.5" width="96" height="48" fill="#000" stroke="#fff" stroke-width="1" stroke-dasharray="3 2"/>
<rect x="244" y="822" width="14" height="2" fill="#fff"/><rect x="250" y="816" width="2" height="14" fill="#fff"/>
<rect x="1644" y="799" width="56" height="49" fill="#444"/>
<rect x="1644" y="799" width="56" height="15" fill="#00ee00"/>
<text x="1672" y="812" font-size="13" text-anchor="middle" font-weight="bold" fill="#000">HD</text>
<text x="1672.5" y="835" font-size="13" text-anchor="middle" fill="#fff">12 Bits</text>
<rect x="1704" y="799" width="111" height="49" fill="#444"/>
<rect x="1704" y="799" width="111" height="15" fill="#f6f6f6"/>
<text x="1706" y="812" font-size="13" fill="#000">Timebase</text>
<text x="1812.5" y="812" font-size="13" text-anchor="end" fill="#000">0 ns</text>
<text x="1812.5" y="829" font-size="13" text-anchor="end" fill="#fff">50.0 ns/div</text>
<text x="1706" y="844" font-size="13" fill="#fff">5 kS</text>
<text x="1812.5" y="844" font-size="13" text-anchor="end" fill="#fff">10 GS/s</text>
<rect x="1818" y="799" width="97" height="49" fill="#444"/>
<rect x="1818" y="799" width="97" height="15" fill="#f6f6f6"/>
<text x="1821" y="812" font-size="13" fill="#000">Trigger</text>
<rect x="1869" y="800" width="19" height="13" rx="2.5" fill="#000"/><rect x="1891.5" y="800" width="20.5" height="13" rx="2.5" fill="#000"/>
<text x="1878.5" y="810.5" font-size="11" text-anchor="middle" fill="none" stroke="#fff" stroke-width="0.7">C1</text>
<text x="1901.7" y="810.5" font-size="11" text-anchor="middle" fill="none" stroke="#fff" stroke-width="0.7">DC</text>
<text x="1821" y="829" font-size="13" fill="#fff">Stop</text>
<text x="1913.5" y="829" font-size="13" text-anchor="end" fill="#fff">0.0 mV</text>
<text x="1821" y="844" font-size="13" fill="#fff">Edge</text>
<text x="1912.5" y="844" font-size="13" text-anchor="end" fill="#fff">Positive</text>
<rect x="0" y="854" width="1920" height="1" fill="#555"/>
<rect x="0" y="855" width="1920" height="31" fill="#333"/>
<rect x="71" y="866" width="70" height="20" fill="url(#tabg)"/>
<rect x="0" y="886" width="1920" height="1.5" fill="#0b78d6"/>
<rect x="69" y="859" width="1" height="23" fill="#1c1c1c"/><rect x="70" y="859" width="1" height="23" fill="#565656"/>
<rect x="140" y="859" width="1" height="23" fill="#1c1c1c"/><rect x="141" y="859" width="1" height="23" fill="#565656"/>
<rect x="276" y="859" width="1" height="23" fill="#1c1c1c"/><rect x="277" y="859" width="1" height="23" fill="#565656"/>
<rect x="381" y="859" width="1" height="23" fill="#1c1c1c"/><rect x="382" y="859" width="1" height="23" fill="#565656"/>
<rect x="444" y="859" width="1" height="23" fill="#1c1c1c"/><rect x="445" y="859" width="1" height="23" fill="#565656"/>
<rect x="539" y="859" width="1" height="23" fill="#1c1c1c"/><rect x="540" y="859" width="1" height="23" fill="#565656"/>
<rect x="707" y="859" width="1" height="23" fill="#1c1c1c"/><rect x="708" y="859" width="1" height="23" fill="#565656"/>
<text x="24.5" y="875" font-size="13" fill="#f0f0f0">Save</text>
<text x="88.5" y="875" font-size="13" fill="#f0f0f0">Recall</text>
<text x="160" y="875" font-size="13" fill="#f0f0f0">Report Generator</text>
<text x="295" y="875" font-size="13" fill="#f0f0f0">File Sharing</text>
<text x="400" y="875" font-size="13" fill="#f0f0f0">Print</text>
<text x="463" y="875" font-size="13" fill="#f0f0f0">Auto Save</text>
<text x="553" y="875" font-size="13" fill="#f0f0f0">Email &amp; Report Settings</text>
<circle cx="1865.2" cy="870.5" r="11" fill="#fff"/>
<path d="M1859.5 864.8 L1870.9 876.2 M1870.9 864.8 L1859.5 876.2" stroke="#000" stroke-width="2.6"/>
<text x="1882" y="874" font-size="9.5" font-weight="bold" fill="#f0f0f0">CLOSE</text>
<rect x="0" y="887.5" width="1920" height="175.5" fill="#252525"/>
<rect x="66" y="896" width="185" height="48" fill="#6c6c6c"/><rect x="68" y="898" width="181" height="44" fill="#4e4e4e"/>
<rect x="66" y="950" width="185" height="48" fill="#4a8de0"/><rect x="68" y="952" width="181" height="44" fill="#2b4b69"/>
<rect x="66" y="1004" width="185" height="48" fill="#6c6c6c"/><rect x="68" y="1006" width="181" height="44" fill="#4e4e4e"/>
<text x="158.5" y="940.5" font-size="13" text-anchor="middle" fill="#f4f4f4">LabNotebook</text>
<text x="158.5" y="994.5" font-size="13" text-anchor="middle" fill="#f4f4f4">Waveform</text>
<text x="158.5" y="1048.5" font-size="13" text-anchor="middle" fill="#f4f4f4">Setup</text>
<path d="M149 916 L154 914.5 L157 916 L157 924 L153.5 925.5 L149 924Z" fill="#7fd0ff"/>
<rect x="157" y="906.5" width="11" height="11" fill="#fff"/><rect x="158.2" y="907.7" width="8.6" height="8.6" fill="#0a5cff"/><rect x="159.5" y="909" width="6" height="2.5" fill="#fff"/>
<path d="M148 978.5 H151.5 V969.5 H157 V978.5 H162.5 V969.5 H168 V978.5 H170" fill="none" stroke="#f0c000" stroke-width="2"/>
<path d="M157 1014.5 H164 L167 1017.5 V1030.5 H157Z" fill="#f2f2f2" stroke="#aaa" stroke-width="0.6"/>
<path d="M159 1019h6M159 1021h6M159 1023h6M159 1025h6M159 1027h6" stroke="#777" stroke-width="0.8"/>
<path d="M150 1024 L155 1022.5 L158 1024 L158 1032 L154.5 1033.5 L150 1032Z" fill="#7fd0ff"/>
<rect x="324" y="898" width="1" height="154" fill="#555"/>
<rect x="463" y="898" width="1" height="154" fill="#555"/>
<rect x="1215" y="898" width="1" height="154" fill="#555"/>
<rect x="1748" y="898" width="1" height="154" fill="#555"/>
<text x="745.5" y="905" font-size="13.5" text-anchor="middle" font-weight="bold" fill="#4d9ae0">File</text>
<text x="498" y="925.5" font-size="13" fill="#f0f0f0">C3--Trace--00000.trc</text>
<rect x="491" y="932.5" width="554" height="1" fill="#888"/><rect x="491" y="928" width="1" height="5" fill="#888"/>
<path d="M1045 924 L1045 931 L1038 931Z" fill="#888"/>
<text x="580" y="946.5" font-size="13" text-anchor="middle" font-style="italic" fill="#e8e8e8">Selected Folder</text>
<text x="492" y="963" font-size="13" fill="#f0f0f0">C:\LeCroy\XStream\Waveforms\</text>
<rect x="1049" y="895" width="134" height="38" fill="#6c6c6c"/><rect x="1051" y="897" width="130" height="34" fill="#4e4e4e"/>
<text x="1116" y="919" font-size="13" text-anchor="middle" fill="#f4f4f4">Browse</text>
<rect x="1016" y="939" width="80" height="38" fill="#6c6c6c"/><rect x="1018" y="941" width="76" height="34" fill="#4e4e4e"/>
<rect x="1103" y="939" width="80" height="38" fill="#6c6c6c"/><rect x="1105" y="941" width="76" height="34" fill="#4e4e4e"/>
<path d="M1043.3 951.5 H1068.8 L1056 964Z" fill="#fff"/>
<path d="M1130.2 964.5 H1156.1 L1143.1 952Z" fill="#fff"/>
<text x="1103" y="993.5" font-size="13" text-anchor="middle" font-style="italic" fill="#dcdcdc">Show Only Files</text>
<text x="1024" y="1011.5" font-size="13" fill="#f0f0f0">All</text>
<rect x="1017" y="1015.5" width="172" height="1" fill="#888"/><rect x="1017" y="1010" width="1" height="6" fill="#888"/>
<path d="M1189 1007 L1189 1014 L1182 1014Z" fill="#888"/>
<text x="1480" y="904.5" font-size="13.5" text-anchor="middle" font-weight="bold" fill="#4d9ae0">Destination</text>
<rect x="1291" y="936" width="145" height="35" rx="1.5" fill="#1e8fff"/><rect x="1293" y="938" width="141" height="31" fill="#252525"/>
<path d="M1435.5 963 L1435.5 971 L1427.5 971Z" fill="#1e8fff"/>
<text x="1299.5" y="966.5" font-size="13" fill="#f4f4f4">M2</text>
<rect x="1537" y="945.5" width="16.5" height="17" fill="#fff"/>
<path d="M1539.8 953.5 L1543.5 957.8 L1550.8 948.8" fill="none" stroke="#0a64d8" stroke-width="3.2"/>
<text x="1606" y="951" font-size="13" text-anchor="middle" font-style="italic" fill="#dcdcdc">Show</text>
<text x="1596.5" y="967" font-size="13" text-anchor="middle" font-style="italic" fill="#dcdcdc">On Recall</text>
<path d="M1527.5 965 V970.5 H1531" fill="none" stroke="#999" stroke-width="1"/>
<path d="M1668.5 970.5 H1672.5 V965" fill="none" stroke="#999" stroke-width="1"/>
<text x="1839.5" y="904.5" font-size="13.5" text-anchor="middle" font-weight="bold" fill="#4d9ae0">Recall</text>
<rect x="1786" y="923" width="104" height="57" fill="#6c6c6c"/><rect x="1788" y="925" width="100" height="53" fill="#4e4e4e"/>
<text x="1838" y="977" font-size="13" text-anchor="middle" fill="#f4f4f4">Recall Now</text>
<path d="M1823 955 L1825 950 L1832 950 L1833 955Z" fill="#c8c8c8"/><path d="M1831.5 952.5 H1836" stroke="#c8c8c8" stroke-width="1.2"/>
<path d="M1836 955.5 H1838 V950 H1841 V955.5 H1844 V950 H1847 V955.5 H1852" fill="none" stroke="#f0c000" stroke-width="1.4"/>
<rect x="0" y="1063" width="1920" height="17" fill="#232323"/>
<rect x="0" y="1063" width="1920" height="1" fill="#5b6060"/>
<g transform="translate(7 1077.5) scale(0.84 1)"><text x="0" y="0" font-size="15" font-weight="bold" fill="#fff">TELEDYNE</text></g>
<g transform="translate(78 1077.5) scale(0.78 1)"><text x="0" y="0" font-size="15" fill="#d8d8d8">LECROY</text></g>
<text x="1904" y="1077" font-size="13" text-anchor="end" fill="#f4f4f4">25.02.2023 12:18:59</text>
</svg>
</body></html>
